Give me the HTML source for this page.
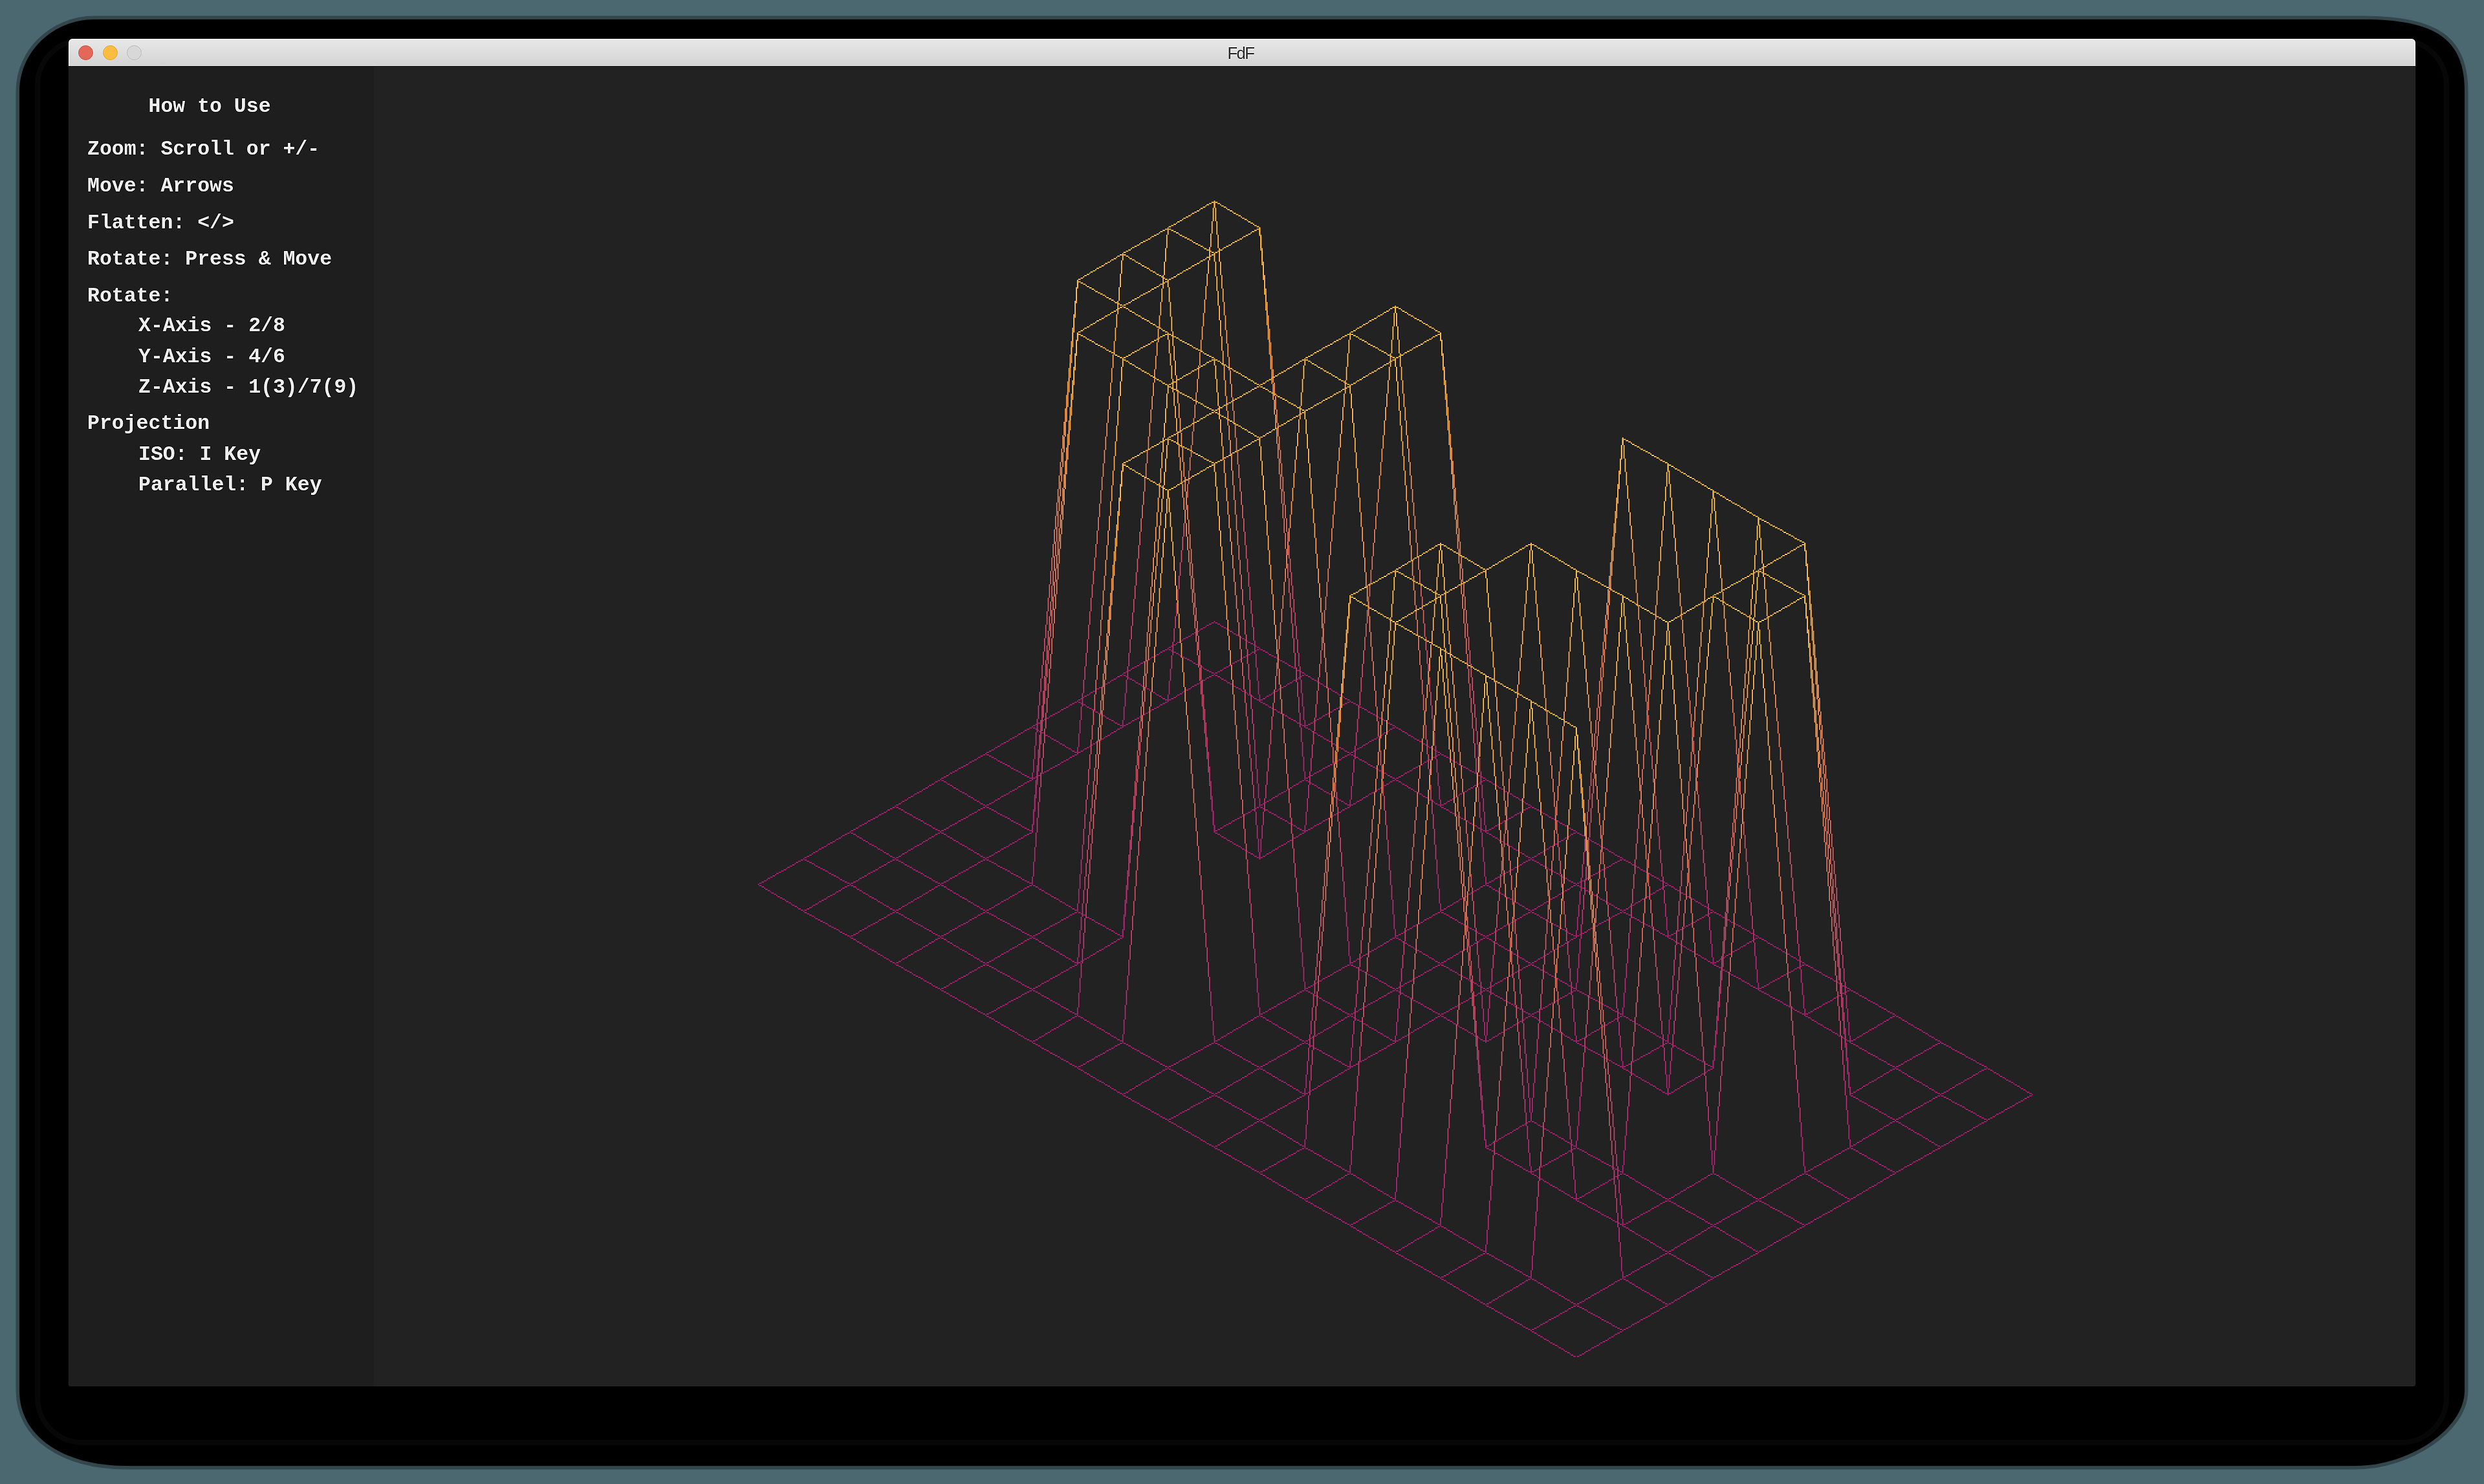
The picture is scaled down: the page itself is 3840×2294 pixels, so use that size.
<!DOCTYPE html>
<html><head><meta charset="utf-8"><title>FdF</title>
<style>
html,body{margin:0;padding:0}
body{width:3840px;height:2294px;position:relative;overflow:hidden;background:#4b6770}
#win{position:absolute;left:106px;top:60px;width:3628px;height:2083px;background:#222222;border-radius:6px 6px 4px 4px;overflow:hidden}
#tb{position:absolute;left:0;top:0;width:3628px;height:42px;background:linear-gradient(#e8e8e8,#d3d3d3);border-top:1px solid #f6f6f6;box-sizing:border-box}
#tbline{position:absolute;left:0;top:42px;width:3628px;height:1px;background:#2b2b2b}
#title{position:absolute;left:-2px;top:2px;letter-spacing:-1.5px;width:3628px;text-align:center;font-family:"Liberation Sans",sans-serif;font-size:25.6px;line-height:40px;color:#383838}
.tl{position:absolute;top:10px;width:23px;height:23px;border-radius:50%;box-sizing:border-box}
#red{left:15px;background:#e3685a;border:1px solid #d95c4e}
#yel{left:53px;background:#fabd42;border:1px solid #eaa93a}
#gry{left:90px;background:#d8d8d8;border:1.5px solid #bdbdbd}
#side{position:absolute;left:0;top:43px;width:472px;height:2040px;background:#1e1e1e}
.t{position:absolute;font-family:"Liberation Mono",monospace;font-weight:bold;font-size:31.5px;line-height:40px;color:#eaeaea;white-space:pre}
#wf{position:absolute;left:0;top:0}
</style></head><body>
<svg width="0" height="0" style="position:absolute"><filter id="shp" x="0" y="0" width="100%" height="100%" color-interpolation-filters="sRGB"><feConvolveMatrix order="3" kernelMatrix="0 -0.16 0 -0.16 1.64 -0.16 0 -0.16 0" edgeMode="duplicate" preserveAlpha="true"/></filter></svg>
<div id="page" style="position:absolute;left:0;top:0;width:3840px;height:2294px;filter:url(#shp)">
<svg id="shd" width="3840" height="2294" style="position:absolute;left:0;top:0"><path d="M30 141 C30 79.9 82.2 30 146 30 L3653 30 C3766.0 30 3810 61.1 3810 141 L3810 2150 C3810 2208.0 3725.5 2266 3641 2266 L196 2266 C96.4 2266 30 2219.6 30 2150 Z" fill="#000" stroke="rgba(0,0,0,0.32)" stroke-width="11" paint-order="stroke"/><rect x="58" y="62" width="3724" height="2168" rx="70" ry="70" fill="none" stroke="#070707" stroke-width="8"/></svg>
<div id="win">
 <div id="tb"></div><div id="tbline"></div>
 <div id="title">FdF</div>
 <div id="red" class="tl"></div><div id="yel" class="tl"></div><div id="gry" class="tl"></div>
 <div id="side"></div>
</div>
<svg id="wf" width="3840" height="2294" viewBox="0 0 3840 2294"><defs><linearGradient id="g0" gradientUnits="userSpaceOnUse" x1="0" y1="519.5" x2="0" y2="110.5"><stop offset="0" stop-color="#9a1f6a"/><stop offset="1" stop-color="#f3af3d"/></linearGradient><linearGradient id="g1" gradientUnits="userSpaceOnUse" x1="0" y1="540.5" x2="0" y2="132.5"><stop offset="0" stop-color="#9a1f6a"/><stop offset="1" stop-color="#f3af3d"/></linearGradient><linearGradient id="g2" gradientUnits="userSpaceOnUse" x1="0" y1="605.5" x2="0" y2="196.5"><stop offset="0" stop-color="#9a1f6a"/><stop offset="1" stop-color="#f3af3d"/></linearGradient><linearGradient id="g3" gradientUnits="userSpaceOnUse" x1="0" y1="626.5" x2="0" y2="218.5"><stop offset="0" stop-color="#9a1f6a"/><stop offset="1" stop-color="#f3af3d"/></linearGradient><linearGradient id="g4" gradientUnits="userSpaceOnUse" x1="0" y1="712.5" x2="0" y2="304.5"><stop offset="0" stop-color="#9a1f6a"/><stop offset="1" stop-color="#f3af3d"/></linearGradient><linearGradient id="g5" gradientUnits="userSpaceOnUse" x1="0" y1="734.5" x2="0" y2="325.5"><stop offset="0" stop-color="#9a1f6a"/><stop offset="1" stop-color="#f3af3d"/></linearGradient><linearGradient id="g6" gradientUnits="userSpaceOnUse" x1="0" y1="755.5" x2="0" y2="347.5"><stop offset="0" stop-color="#9a1f6a"/><stop offset="1" stop-color="#f3af3d"/></linearGradient><linearGradient id="g7" gradientUnits="userSpaceOnUse" x1="0" y1="776.5" x2="0" y2="369.5"><stop offset="0" stop-color="#9a1f6a"/><stop offset="1" stop-color="#f3af3d"/></linearGradient><linearGradient id="g8" gradientUnits="userSpaceOnUse" x1="0" y1="798.5" x2="0" y2="390.5"><stop offset="0" stop-color="#9a1f6a"/><stop offset="1" stop-color="#f3af3d"/></linearGradient><linearGradient id="g9" gradientUnits="userSpaceOnUse" x1="0" y1="519.5" x2="0" y2="110.5"><stop offset="0" stop-color="#9a1f6a"/><stop offset="1" stop-color="#f3af3d"/></linearGradient><linearGradient id="g10" gradientUnits="userSpaceOnUse" x1="0" y1="132.5" x2="0" y2="583.5"><stop offset="0" stop-color="#f3af3d"/><stop offset="1" stop-color="#9a1f6a"/></linearGradient><linearGradient id="g11" gradientUnits="userSpaceOnUse" x1="0" y1="605.5" x2="0" y2="196.5"><stop offset="0" stop-color="#9a1f6a"/><stop offset="1" stop-color="#f3af3d"/></linearGradient><linearGradient id="g12" gradientUnits="userSpaceOnUse" x1="0" y1="218.5" x2="0" y2="669.5"><stop offset="0" stop-color="#f3af3d"/><stop offset="1" stop-color="#9a1f6a"/></linearGradient><linearGradient id="g13" gradientUnits="userSpaceOnUse" x1="0" y1="712.5" x2="0" y2="304.5"><stop offset="0" stop-color="#9a1f6a"/><stop offset="1" stop-color="#f3af3d"/></linearGradient><linearGradient id="g14" gradientUnits="userSpaceOnUse" x1="0" y1="304.5" x2="0" y2="755.5"><stop offset="0" stop-color="#f3af3d"/><stop offset="1" stop-color="#9a1f6a"/></linearGradient><linearGradient id="g15" gradientUnits="userSpaceOnUse" x1="0" y1="325.5" x2="0" y2="776.5"><stop offset="0" stop-color="#f3af3d"/><stop offset="1" stop-color="#9a1f6a"/></linearGradient><linearGradient id="g16" gradientUnits="userSpaceOnUse" x1="0" y1="347.5" x2="0" y2="798.5"><stop offset="0" stop-color="#f3af3d"/><stop offset="1" stop-color="#9a1f6a"/></linearGradient><linearGradient id="g17" gradientUnits="userSpaceOnUse" x1="0" y1="369.5" x2="0" y2="819.5"><stop offset="0" stop-color="#f3af3d"/><stop offset="1" stop-color="#9a1f6a"/></linearGradient><linearGradient id="g18" gradientUnits="userSpaceOnUse" x1="0" y1="390.5" x2="0" y2="841.5"><stop offset="0" stop-color="#f3af3d"/><stop offset="1" stop-color="#9a1f6a"/></linearGradient><linearGradient id="g19" gradientUnits="userSpaceOnUse" x1="0" y1="841.5" x2="0" y2="433.5"><stop offset="0" stop-color="#9a1f6a"/><stop offset="1" stop-color="#f3af3d"/></linearGradient><linearGradient id="g20" gradientUnits="userSpaceOnUse" x1="0" y1="540.5" x2="0" y2="132.5"><stop offset="0" stop-color="#9a1f6a"/><stop offset="1" stop-color="#f3af3d"/></linearGradient><linearGradient id="g21" gradientUnits="userSpaceOnUse" x1="0" y1="153.5" x2="0" y2="605.5"><stop offset="0" stop-color="#f3af3d"/><stop offset="1" stop-color="#9a1f6a"/></linearGradient><linearGradient id="g22" gradientUnits="userSpaceOnUse" x1="0" y1="626.5" x2="0" y2="218.5"><stop offset="0" stop-color="#9a1f6a"/><stop offset="1" stop-color="#f3af3d"/></linearGradient><linearGradient id="g23" gradientUnits="userSpaceOnUse" x1="0" y1="239.5" x2="0" y2="691.5"><stop offset="0" stop-color="#f3af3d"/><stop offset="1" stop-color="#9a1f6a"/></linearGradient><linearGradient id="g24" gradientUnits="userSpaceOnUse" x1="0" y1="819.5" x2="0" y2="412.5"><stop offset="0" stop-color="#9a1f6a"/><stop offset="1" stop-color="#f3af3d"/></linearGradient><linearGradient id="g25" gradientUnits="userSpaceOnUse" x1="0" y1="433.5" x2="0" y2="884.5"><stop offset="0" stop-color="#f3af3d"/><stop offset="1" stop-color="#9a1f6a"/></linearGradient><linearGradient id="g26" gradientUnits="userSpaceOnUse" x1="0" y1="562.5" x2="0" y2="153.5"><stop offset="0" stop-color="#9a1f6a"/><stop offset="1" stop-color="#f3af3d"/></linearGradient><linearGradient id="g27" gradientUnits="userSpaceOnUse" x1="0" y1="175.5" x2="0" y2="626.5"><stop offset="0" stop-color="#f3af3d"/><stop offset="1" stop-color="#9a1f6a"/></linearGradient><linearGradient id="g28" gradientUnits="userSpaceOnUse" x1="0" y1="626.5" x2="0" y2="218.5"><stop offset="0" stop-color="#9a1f6a"/><stop offset="1" stop-color="#f3af3d"/></linearGradient><linearGradient id="g29" gradientUnits="userSpaceOnUse" x1="0" y1="648.5" x2="0" y2="239.5"><stop offset="0" stop-color="#9a1f6a"/><stop offset="1" stop-color="#f3af3d"/></linearGradient><linearGradient id="g30" gradientUnits="userSpaceOnUse" x1="0" y1="648.5" x2="0" y2="239.5"><stop offset="0" stop-color="#9a1f6a"/><stop offset="1" stop-color="#f3af3d"/></linearGradient><linearGradient id="g31" gradientUnits="userSpaceOnUse" x1="0" y1="261.5" x2="0" y2="712.5"><stop offset="0" stop-color="#f3af3d"/><stop offset="1" stop-color="#9a1f6a"/></linearGradient><linearGradient id="g32" gradientUnits="userSpaceOnUse" x1="0" y1="798.5" x2="0" y2="390.5"><stop offset="0" stop-color="#9a1f6a"/><stop offset="1" stop-color="#f3af3d"/></linearGradient><linearGradient id="g33" gradientUnits="userSpaceOnUse" x1="0" y1="819.5" x2="0" y2="412.5"><stop offset="0" stop-color="#9a1f6a"/><stop offset="1" stop-color="#f3af3d"/></linearGradient><linearGradient id="g34" gradientUnits="userSpaceOnUse" x1="0" y1="841.5" x2="0" y2="433.5"><stop offset="0" stop-color="#9a1f6a"/><stop offset="1" stop-color="#f3af3d"/></linearGradient><linearGradient id="g35" gradientUnits="userSpaceOnUse" x1="0" y1="841.5" x2="0" y2="433.5"><stop offset="0" stop-color="#9a1f6a"/><stop offset="1" stop-color="#f3af3d"/></linearGradient><linearGradient id="g36" gradientUnits="userSpaceOnUse" x1="0" y1="455.5" x2="0" y2="905.5"><stop offset="0" stop-color="#f3af3d"/><stop offset="1" stop-color="#9a1f6a"/></linearGradient><linearGradient id="g37" gradientUnits="userSpaceOnUse" x1="0" y1="455.5" x2="0" y2="905.5"><stop offset="0" stop-color="#f3af3d"/><stop offset="1" stop-color="#9a1f6a"/></linearGradient><linearGradient id="g38" gradientUnits="userSpaceOnUse" x1="0" y1="583.5" x2="0" y2="175.5"><stop offset="0" stop-color="#9a1f6a"/><stop offset="1" stop-color="#f3af3d"/></linearGradient><linearGradient id="g39" gradientUnits="userSpaceOnUse" x1="0" y1="175.5" x2="0" y2="626.5"><stop offset="0" stop-color="#f3af3d"/><stop offset="1" stop-color="#9a1f6a"/></linearGradient><linearGradient id="g40" gradientUnits="userSpaceOnUse" x1="0" y1="282.5" x2="0" y2="734.5"><stop offset="0" stop-color="#f3af3d"/><stop offset="1" stop-color="#9a1f6a"/></linearGradient><linearGradient id="g41" gradientUnits="userSpaceOnUse" x1="0" y1="798.5" x2="0" y2="390.5"><stop offset="0" stop-color="#9a1f6a"/><stop offset="1" stop-color="#f3af3d"/></linearGradient><linearGradient id="g42" gradientUnits="userSpaceOnUse" x1="0" y1="798.5" x2="0" y2="390.5"><stop offset="0" stop-color="#9a1f6a"/><stop offset="1" stop-color="#f3af3d"/></linearGradient><linearGradient id="g43" gradientUnits="userSpaceOnUse" x1="0" y1="412.5" x2="0" y2="862.5"><stop offset="0" stop-color="#f3af3d"/><stop offset="1" stop-color="#9a1f6a"/></linearGradient><linearGradient id="g44" gradientUnits="userSpaceOnUse" x1="0" y1="433.5" x2="0" y2="884.5"><stop offset="0" stop-color="#f3af3d"/><stop offset="1" stop-color="#9a1f6a"/></linearGradient><linearGradient id="g45" gradientUnits="userSpaceOnUse" x1="0" y1="455.5" x2="0" y2="905.5"><stop offset="0" stop-color="#f3af3d"/><stop offset="1" stop-color="#9a1f6a"/></linearGradient><linearGradient id="g46" gradientUnits="userSpaceOnUse" x1="0" y1="455.5" x2="0" y2="905.5"><stop offset="0" stop-color="#f3af3d"/><stop offset="1" stop-color="#9a1f6a"/></linearGradient><linearGradient id="g47" gradientUnits="userSpaceOnUse" x1="0" y1="626.5" x2="0" y2="218.5"><stop offset="0" stop-color="#9a1f6a"/><stop offset="1" stop-color="#f3af3d"/></linearGradient><linearGradient id="g48" gradientUnits="userSpaceOnUse" x1="0" y1="218.5" x2="0" y2="669.5"><stop offset="0" stop-color="#f3af3d"/><stop offset="1" stop-color="#9a1f6a"/></linearGradient><linearGradient id="g49" gradientUnits="userSpaceOnUse" x1="0" y1="239.5" x2="0" y2="691.5"><stop offset="0" stop-color="#f3af3d"/><stop offset="1" stop-color="#9a1f6a"/></linearGradient><linearGradient id="g50" gradientUnits="userSpaceOnUse" x1="0" y1="261.5" x2="0" y2="712.5"><stop offset="0" stop-color="#f3af3d"/><stop offset="1" stop-color="#9a1f6a"/></linearGradient><linearGradient id="g51" gradientUnits="userSpaceOnUse" x1="0" y1="304.5" x2="0" y2="755.5"><stop offset="0" stop-color="#f3af3d"/><stop offset="1" stop-color="#9a1f6a"/></linearGradient><linearGradient id="g52" gradientUnits="userSpaceOnUse" x1="0" y1="798.5" x2="0" y2="390.5"><stop offset="0" stop-color="#9a1f6a"/><stop offset="1" stop-color="#f3af3d"/></linearGradient><linearGradient id="g53" gradientUnits="userSpaceOnUse" x1="0" y1="412.5" x2="0" y2="862.5"><stop offset="0" stop-color="#f3af3d"/><stop offset="1" stop-color="#9a1f6a"/></linearGradient><linearGradient id="g54" gradientUnits="userSpaceOnUse" x1="0" y1="712.5" x2="0" y2="304.5"><stop offset="0" stop-color="#9a1f6a"/><stop offset="1" stop-color="#f3af3d"/></linearGradient><linearGradient id="g55" gradientUnits="userSpaceOnUse" x1="0" y1="325.5" x2="0" y2="776.5"><stop offset="0" stop-color="#f3af3d"/><stop offset="1" stop-color="#9a1f6a"/></linearGradient><linearGradient id="g56" gradientUnits="userSpaceOnUse" x1="0" y1="819.5" x2="0" y2="412.5"><stop offset="0" stop-color="#9a1f6a"/><stop offset="1" stop-color="#f3af3d"/></linearGradient><linearGradient id="g57" gradientUnits="userSpaceOnUse" x1="0" y1="433.5" x2="0" y2="884.5"><stop offset="0" stop-color="#f3af3d"/><stop offset="1" stop-color="#9a1f6a"/></linearGradient><linearGradient id="g58" gradientUnits="userSpaceOnUse" x1="0" y1="884.5" x2="0" y2="476.5"><stop offset="0" stop-color="#9a1f6a"/><stop offset="1" stop-color="#f3af3d"/></linearGradient><linearGradient id="g59" gradientUnits="userSpaceOnUse" x1="0" y1="905.5" x2="0" y2="498.5"><stop offset="0" stop-color="#9a1f6a"/><stop offset="1" stop-color="#f3af3d"/></linearGradient><linearGradient id="g60" gradientUnits="userSpaceOnUse" x1="0" y1="927.5" x2="0" y2="519.5"><stop offset="0" stop-color="#9a1f6a"/><stop offset="1" stop-color="#f3af3d"/></linearGradient><linearGradient id="g61" gradientUnits="userSpaceOnUse" x1="0" y1="948.5" x2="0" y2="541.5"><stop offset="0" stop-color="#9a1f6a"/><stop offset="1" stop-color="#f3af3d"/></linearGradient><linearGradient id="g62" gradientUnits="userSpaceOnUse" x1="0" y1="734.5" x2="0" y2="325.5"><stop offset="0" stop-color="#9a1f6a"/><stop offset="1" stop-color="#f3af3d"/></linearGradient><linearGradient id="g63" gradientUnits="userSpaceOnUse" x1="0" y1="325.5" x2="0" y2="776.5"><stop offset="0" stop-color="#f3af3d"/><stop offset="1" stop-color="#9a1f6a"/></linearGradient><linearGradient id="g64" gradientUnits="userSpaceOnUse" x1="0" y1="347.5" x2="0" y2="798.5"><stop offset="0" stop-color="#f3af3d"/><stop offset="1" stop-color="#9a1f6a"/></linearGradient><linearGradient id="g65" gradientUnits="userSpaceOnUse" x1="0" y1="347.5" x2="0" y2="798.5"><stop offset="0" stop-color="#f3af3d"/><stop offset="1" stop-color="#9a1f6a"/></linearGradient><linearGradient id="g66" gradientUnits="userSpaceOnUse" x1="0" y1="841.5" x2="0" y2="433.5"><stop offset="0" stop-color="#9a1f6a"/><stop offset="1" stop-color="#f3af3d"/></linearGradient><linearGradient id="g67" gradientUnits="userSpaceOnUse" x1="0" y1="433.5" x2="0" y2="884.5"><stop offset="0" stop-color="#f3af3d"/><stop offset="1" stop-color="#9a1f6a"/></linearGradient><linearGradient id="g68" gradientUnits="userSpaceOnUse" x1="0" y1="455.5" x2="0" y2="905.5"><stop offset="0" stop-color="#f3af3d"/><stop offset="1" stop-color="#9a1f6a"/></linearGradient><linearGradient id="g69" gradientUnits="userSpaceOnUse" x1="0" y1="476.5" x2="0" y2="927.5"><stop offset="0" stop-color="#f3af3d"/><stop offset="1" stop-color="#9a1f6a"/></linearGradient><linearGradient id="g70" gradientUnits="userSpaceOnUse" x1="0" y1="498.5" x2="0" y2="948.5"><stop offset="0" stop-color="#f3af3d"/><stop offset="1" stop-color="#9a1f6a"/></linearGradient><linearGradient id="g71" gradientUnits="userSpaceOnUse" x1="0" y1="519.5" x2="0" y2="970.5"><stop offset="0" stop-color="#f3af3d"/><stop offset="1" stop-color="#9a1f6a"/></linearGradient><linearGradient id="g72" gradientUnits="userSpaceOnUse" x1="0" y1="541.5" x2="0" y2="991.5"><stop offset="0" stop-color="#f3af3d"/><stop offset="1" stop-color="#9a1f6a"/></linearGradient><linearGradient id="g73" gradientUnits="userSpaceOnUse" x1="0" y1="541.5" x2="0" y2="991.5"><stop offset="0" stop-color="#f3af3d"/><stop offset="1" stop-color="#9a1f6a"/></linearGradient></defs><g transform="translate(105.83 102.05) scale(1.88976)"><path fill="#9a1f6a" d="M937 454h1v1h-1zm1 1h2v1h-2zm2 1h2v1h-2zm2 1h1v1h-1zm1 1h2v1h-2zm2 1h2v1h-2zm2 1h1v1h-1zm1 1h2v1h-2zm2 1h2v1h-2zm2 1h1v1h-1zm1 1h2v1h-2zm2 1h2v1h-2zm2 1h2v1h-2zm2 1h1v1h-1zm1 1h2v1h-2zm2 1h2v1h-2zm2 1h1v1h-1zm1 1h2v1h-2zm2 1h2v1h-2zm2 1h1v1h-1zm1 1h2v1h-2zm2 1h2v1h-2zM937 454h1v1h-1zm-2 1h2v1h-2zm-2 1h2v1h-2zm-2 1h2v1h-2zm-1 1h1v1h-1zm-2 1h2v1h-2zm-2 1h2v1h-2zm-1 1h1v1h-1zm-2 1h2v1h-2zm-2 1h2v1h-2zm-2 1h2v1h-2zm-1 1h1v1h-1zm-2 1h2v1h-2zm-2 1h2v1h-2zm-2 1h2v1h-2zm-1 1h1v1h-1zm-2 1h2v1h-2zm-2 1h2v1h-2zm-1 1h1v1h-1zm-2 1h2v1h-2zm-2 1h2v1h-2zm-2 1h2v1h-2zM974 476h1v1h-1zm1 1h2v1h-2zm2 1h2v1h-2zm2 1h2v1h-2zm2 1h1v1h-1zm1 1h2v1h-2zm2 1h2v1h-2zm2 1h2v1h-2zm2 1h1v1h-1zm1 1h2v1h-2zm2 1h2v1h-2zm2 1h2v1h-2zm2 1h2v1h-2zm2 1h1v1h-1zm1 1h2v1h-2zm2 1h2v1h-2zm2 1h2v1h-2zm2 1h1v1h-1zm1 1h2v1h-2zm2 1h2v1h-2zm2 1h2v1h-2zM974 476h1v1h-1zm-2 1h2v1h-2zm-2 1h2v1h-2zm-2 1h2v1h-2zm-1 1h1v1h-1zm-2 1h2v1h-2zm-2 1h2v1h-2zm-2 1h2v1h-2zm-1 1h1v1h-1zm-2 1h2v1h-2zm-2 1h2v1h-2zm-2 1h2v1h-2zm-2 1h2v1h-2zm-1 1h1v1h-1zm-2 1h2v1h-2zm-2 1h2v1h-2zm-2 1h2v1h-2zm-1 1h1v1h-1zm-2 1h2v1h-2zm-2 1h2v1h-2zm-2 1h2v1h-2zM1011 497h1v1h-1zm1 1h2v1h-2zm2 1h2v1h-2zm2 1h1v1h-1zm1 1h2v1h-2zm2 1h2v1h-2zm2 1h1v1h-1zm1 1h2v1h-2zm2 1h2v1h-2zm2 1h1v1h-1zm1 1h2v1h-2zm2 1h2v1h-2zm2 1h2v1h-2zm2 1h1v1h-1zm1 1h2v1h-2zm2 1h2v1h-2zm2 1h1v1h-1zm1 1h2v1h-2zm2 1h2v1h-2zm2 1h1v1h-1zm1 1h2v1h-2zm2 1h2v1h-2zM1011 497h1v1h-1zm-2 1h2v1h-2zm-2 1h2v1h-2zm-1 1h1v1h-1zm-2 1h2v1h-2zm-2 1h2v1h-2zm-1 1h1v1h-1zm-2 1h2v1h-2zm-2 1h2v1h-2zm-1 1h1v1h-1zm-2 1h2v1h-2zm-2 1h2v1h-2zm-2 1h2v1h-2zm-1 1h1v1h-1zm-2 1h2v1h-2zm-2 1h2v1h-2zm-1 1h1v1h-1zm-2 1h2v1h-2zm-2 1h2v1h-2zm-1 1h1v1h-1zm-2 1h2v1h-2zm-2 1h2v1h-2zM1048 519h1v1h-1zm1 1h2v1h-2zm2 1h2v1h-2zm2 1h2v1h-2zm2 1h1v1h-1zm1 1h2v1h-2zm2 1h2v1h-2zm2 1h2v1h-2zm2 1h1v1h-1zm1 1h2v1h-2zm2 1h2v1h-2zm2 1h2v1h-2zm2 1h2v1h-2zm2 1h1v1h-1zm1 1h2v1h-2zm2 1h2v1h-2zm2 1h2v1h-2zm2 1h1v1h-1zm1 1h2v1h-2zm2 1h2v1h-2zm2 1h2v1h-2zM1048 519h1v1h-1zm-2 1h2v1h-2zm-2 1h2v1h-2zm-2 1h2v1h-2zm-1 1h1v1h-1zm-2 1h2v1h-2zm-2 1h2v1h-2zm-2 1h2v1h-2zm-1 1h1v1h-1zm-2 1h2v1h-2zm-2 1h2v1h-2zm-2 1h2v1h-2zm-2 1h2v1h-2zm-1 1h1v1h-1zm-2 1h2v1h-2zm-2 1h2v1h-2zm-2 1h2v1h-2zm-1 1h1v1h-1zm-2 1h2v1h-2zm-2 1h2v1h-2zm-2 1h2v1h-2zM1085 540h1v1h-1zm1 1h2v1h-2zm2 1h2v1h-2zm2 1h1v1h-1zm1 1h2v1h-2zm2 1h2v1h-2zm2 1h1v1h-1zm1 1h2v1h-2zm2 1h2v1h-2zm2 1h1v1h-1zm1 1h2v1h-2zm2 1h2v1h-2zm2 1h2v1h-2zm2 1h1v1h-1zm1 1h2v1h-2zm2 1h2v1h-2zm2 1h1v1h-1zm1 1h2v1h-2zm2 1h2v1h-2zm2 1h1v1h-1zm1 1h2v1h-2zm2 1h2v1h-2zM1085 540h1v1h-1zm-2 1h2v1h-2zm-2 1h2v1h-2zm-1 1h1v1h-1zm-2 1h2v1h-2zm-2 1h2v1h-2zm-1 1h1v1h-1zm-2 1h2v1h-2zm-2 1h2v1h-2zm-1 1h1v1h-1zm-2 1h2v1h-2zm-2 1h2v1h-2zm-2 1h2v1h-2zm-1 1h1v1h-1zm-2 1h2v1h-2zm-2 1h2v1h-2zm-1 1h1v1h-1zm-2 1h2v1h-2zm-2 1h2v1h-2zm-1 1h1v1h-1zm-2 1h2v1h-2zm-2 1h2v1h-2zM1122 562h1v1h-1zm1 1h2v1h-2zm2 1h2v1h-2zm2 1h2v1h-2zm2 1h1v1h-1zm1 1h2v1h-2zm2 1h2v1h-2zm2 1h2v1h-2zm2 1h1v1h-1zm1 1h2v1h-2zm2 1h2v1h-2zm2 1h2v1h-2zm2 1h2v1h-2zm2 1h1v1h-1zm1 1h2v1h-2zm2 1h2v1h-2zm2 1h2v1h-2zm2 1h1v1h-1zm1 1h2v1h-2zm2 1h2v1h-2zm2 1h2v1h-2zM1122 562h1v1h-1zm-2 1h2v1h-2zm-2 1h2v1h-2zm-2 1h2v1h-2zm-1 1h1v1h-1zm-2 1h2v1h-2zm-2 1h2v1h-2zm-2 1h2v1h-2zm-1 1h1v1h-1zm-2 1h2v1h-2zm-2 1h2v1h-2zm-2 1h2v1h-2zm-2 1h2v1h-2zm-1 1h1v1h-1zm-2 1h2v1h-2zm-2 1h2v1h-2zm-2 1h2v1h-2zm-1 1h1v1h-1zm-2 1h2v1h-2zm-2 1h2v1h-2zm-2 1h2v1h-2zM1159 583h1v1h-1zm1 1h2v1h-2zm2 1h2v1h-2zm2 1h1v1h-1zm1 1h2v1h-2zm2 1h2v1h-2zm2 1h1v1h-1zm1 1h2v1h-2zm2 1h2v1h-2zm2 1h1v1h-1zm1 1h2v1h-2zm2 1h2v1h-2zm2 1h2v1h-2zm2 1h1v1h-1zm1 1h2v1h-2zm2 1h2v1h-2zm2 1h1v1h-1zm1 1h2v1h-2zm2 1h2v1h-2zm2 1h1v1h-1zm1 1h2v1h-2zm2 1h2v1h-2zM1159 583h1v1h-1zm-2 1h2v1h-2zm-2 1h2v1h-2zm-1 1h1v1h-1zm-2 1h2v1h-2zm-2 1h2v1h-2zm-1 1h1v1h-1zm-2 1h2v1h-2zm-2 1h2v1h-2zm-1 1h1v1h-1zm-2 1h2v1h-2zm-2 1h2v1h-2zm-2 1h2v1h-2zm-1 1h1v1h-1zm-2 1h2v1h-2zm-2 1h2v1h-2zm-1 1h1v1h-1zm-2 1h2v1h-2zm-2 1h2v1h-2zm-1 1h1v1h-1zm-2 1h2v1h-2zm-2 1h2v1h-2zM1196 605h1v1h-1zm1 1h2v1h-2zm2 1h2v1h-2zm2 1h2v1h-2zm2 1h1v1h-1zm1 1h2v1h-2zm2 1h2v1h-2zm2 1h2v1h-2zm2 1h1v1h-1zm1 1h2v1h-2zm2 1h2v1h-2zm2 1h2v1h-2zm2 1h2v1h-2zm2 1h1v1h-1zm1 1h2v1h-2zm2 1h2v1h-2zm2 1h2v1h-2zm2 1h1v1h-1zm1 1h2v1h-2zm2 1h2v1h-2zm2 1h2v1h-2zM1196 605h1v1h-1zm-2 1h2v1h-2zm-2 1h2v1h-2zm-2 1h2v1h-2zm-1 1h1v1h-1zm-2 1h2v1h-2zm-2 1h2v1h-2zm-2 1h2v1h-2zm-1 1h1v1h-1zm-2 1h2v1h-2zm-2 1h2v1h-2zm-2 1h2v1h-2zm-2 1h2v1h-2zm-1 1h1v1h-1zm-2 1h2v1h-2zm-2 1h2v1h-2zm-2 1h2v1h-2zm-1 1h1v1h-1zm-2 1h2v1h-2zm-2 1h2v1h-2zm-2 1h2v1h-2zM1233 626h1v1h-1zm1 1h2v1h-2zm2 1h2v1h-2zm2 1h2v1h-2zm2 1h1v1h-1zm1 1h2v1h-2zm2 1h2v1h-2zm2 1h1v1h-1zm1 1h2v1h-2zm2 1h2v1h-2zm2 1h2v1h-2zm2 1h1v1h-1zm1 1h2v1h-2zm2 1h2v1h-2zm2 1h2v1h-2zm2 1h1v1h-1zm1 1h2v1h-2zm2 1h2v1h-2zm2 1h1v1h-1zm1 1h2v1h-2zm2 1h2v1h-2zm2 1h2v1h-2zM1233 626h1v1h-1zm-2 1h2v1h-2zm-2 1h2v1h-2zm-1 1h1v1h-1zm-2 1h2v1h-2zm-2 1h2v1h-2zm-1 1h1v1h-1zm-2 1h2v1h-2zm-2 1h2v1h-2zm-1 1h1v1h-1zm-2 1h2v1h-2zm-2 1h2v1h-2zm-2 1h2v1h-2zm-1 1h1v1h-1zm-2 1h2v1h-2zm-2 1h2v1h-2zm-1 1h1v1h-1zm-2 1h2v1h-2zm-2 1h2v1h-2zm-1 1h1v1h-1zm-2 1h2v1h-2zm-2 1h2v1h-2zM1271 648h1v1h-1zm1 1h2v1h-2zm2 1h2v1h-2zm2 1h2v1h-2zm2 1h1v1h-1zm1 1h2v1h-2zm2 1h2v1h-2zm2 1h2v1h-2zm2 1h1v1h-1zm1 1h2v1h-2zm2 1h2v1h-2zm2 1h2v1h-2zm2 1h2v1h-2zm2 1h1v1h-1zm1 1h2v1h-2zm2 1h2v1h-2zm2 1h2v1h-2zm2 1h1v1h-1zm1 1h2v1h-2zm2 1h2v1h-2zm2 1h2v1h-2zM1271 648h1v1h-1zm-2 1h2v1h-2zm-2 1h2v1h-2zm-2 1h2v1h-2zm-2 1h2v1h-2zm-1 1h1v1h-1zm-2 1h2v1h-2zm-2 1h2v1h-2zm-2 1h2v1h-2zm-2 1h2v1h-2zm-2 1h2v1h-2zm-1 1h1v1h-1zm-2 1h2v1h-2zm-2 1h2v1h-2zm-2 1h2v1h-2zm-2 1h2v1h-2zm-1 1h1v1h-1zm-2 1h2v1h-2zm-2 1h2v1h-2zm-2 1h2v1h-2zm-2 1h2v1h-2zM1308 669h1v1h-1zm1 1h2v1h-2zm2 1h2v1h-2zm2 1h1v1h-1zm1 1h2v1h-2zm2 1h2v1h-2zm2 1h1v1h-1zm1 1h2v1h-2zm2 1h2v1h-2zm2 1h1v1h-1zm1 1h2v1h-2zm2 1h2v1h-2zm2 1h2v1h-2zm2 1h1v1h-1zm1 1h2v1h-2zm2 1h2v1h-2zm2 1h1v1h-1zm1 1h2v1h-2zm2 1h2v1h-2zm2 1h1v1h-1zm1 1h2v1h-2zm2 1h2v1h-2zM1308 669h1v1h-1zm-2 1h2v1h-2zm-2 1h2v1h-2zm-1 1h1v1h-1zm-2 1h2v1h-2zm-2 1h2v1h-2zm-1 1h1v1h-1zm-2 1h2v1h-2zm-2 1h2v1h-2zm-1 1h1v1h-1zm-2 1h2v1h-2zm-2 1h2v1h-2zm-2 1h2v1h-2zm-1 1h1v1h-1zm-2 1h2v1h-2zm-2 1h2v1h-2zm-1 1h1v1h-1zm-2 1h2v1h-2zm-2 1h2v1h-2zm-1 1h1v1h-1zm-2 1h2v1h-2zm-2 1h2v1h-2zM1345 691h1v1h-1zm1 1h2v1h-2zm2 1h2v1h-2zm2 1h2v1h-2zm2 1h1v1h-1zm1 1h2v1h-2zm2 1h2v1h-2zm2 1h2v1h-2zm2 1h1v1h-1zm1 1h2v1h-2zm2 1h2v1h-2zm2 1h2v1h-2zm2 1h2v1h-2zm2 1h1v1h-1zm1 1h2v1h-2zm2 1h2v1h-2zm2 1h2v1h-2zm2 1h1v1h-1zm1 1h2v1h-2zm2 1h2v1h-2zm2 1h2v1h-2zM1345 691h1v1h-1zm-2 1h2v1h-2zm-2 1h2v1h-2zm-2 1h2v1h-2zm-1 1h1v1h-1zm-2 1h2v1h-2zm-2 1h2v1h-2zm-2 1h2v1h-2zm-1 1h1v1h-1zm-2 1h2v1h-2zm-2 1h2v1h-2zm-2 1h2v1h-2zm-2 1h2v1h-2zm-1 1h1v1h-1zm-2 1h2v1h-2zm-2 1h2v1h-2zm-2 1h2v1h-2zm-1 1h1v1h-1zm-2 1h2v1h-2zm-2 1h2v1h-2zm-2 1h2v1h-2zM1382 712h1v1h-1zm1 1h2v1h-2zm2 1h2v1h-2zm2 1h2v1h-2zm2 1h1v1h-1zm1 1h2v1h-2zm2 1h2v1h-2zm2 1h1v1h-1zm1 1h2v1h-2zm2 1h2v1h-2zm2 1h2v1h-2zm2 1h1v1h-1zm1 1h2v1h-2zm2 1h2v1h-2zm2 1h2v1h-2zm2 1h1v1h-1zm1 1h2v1h-2zm2 1h2v1h-2zm2 1h1v1h-1zm1 1h2v1h-2zm2 1h2v1h-2zm2 1h2v1h-2zM1382 712h1v1h-1zm-2 1h2v1h-2zm-2 1h2v1h-2zm-1 1h1v1h-1zm-2 1h2v1h-2zm-2 1h2v1h-2zm-1 1h1v1h-1zm-2 1h2v1h-2zm-2 1h2v1h-2zm-1 1h1v1h-1zm-2 1h2v1h-2zm-2 1h2v1h-2zm-2 1h2v1h-2zm-1 1h1v1h-1zm-2 1h2v1h-2zm-2 1h2v1h-2zm-1 1h1v1h-1zm-2 1h2v1h-2zm-2 1h2v1h-2zm-1 1h1v1h-1zm-2 1h2v1h-2zm-2 1h2v1h-2zM1420 734h1v1h-1zm1 1h2v1h-2zm2 1h2v1h-2zm2 1h2v1h-2zm2 1h1v1h-1zm1 1h2v1h-2zm2 1h2v1h-2zm2 1h2v1h-2zm2 1h1v1h-1zm1 1h2v1h-2zm2 1h2v1h-2zm2 1h2v1h-2zm2 1h2v1h-2zm2 1h1v1h-1zm1 1h2v1h-2zm2 1h2v1h-2zm2 1h2v1h-2zm2 1h1v1h-1zm1 1h2v1h-2zm2 1h2v1h-2zm2 1h2v1h-2zM1420 734h1v1h-1zm-2 1h2v1h-2zm-2 1h2v1h-2zm-2 1h2v1h-2zm-2 1h2v1h-2zm-1 1h1v1h-1zm-2 1h2v1h-2zm-2 1h2v1h-2zm-2 1h2v1h-2zm-2 1h2v1h-2zm-2 1h2v1h-2zm-1 1h1v1h-1zm-2 1h2v1h-2zm-2 1h2v1h-2zm-2 1h2v1h-2zm-2 1h2v1h-2zm-1 1h1v1h-1zm-2 1h2v1h-2zm-2 1h2v1h-2zm-2 1h2v1h-2zm-2 1h2v1h-2zM1457 755h1v1h-1zm1 1h2v1h-2zm2 1h2v1h-2zm2 1h2v1h-2zm2 1h1v1h-1zm1 1h2v1h-2zm2 1h2v1h-2zm2 1h2v1h-2zm2 1h1v1h-1zm1 1h2v1h-2zm2 1h2v1h-2zm2 1h2v1h-2zm2 1h2v1h-2zm2 1h1v1h-1zm1 1h2v1h-2zm2 1h2v1h-2zm2 1h2v1h-2zm2 1h1v1h-1zm1 1h2v1h-2zm2 1h2v1h-2zm2 1h2v1h-2zM1457 755h1v1h-1zm-2 1h2v1h-2zm-2 1h2v1h-2zm-2 1h2v1h-2zm-1 1h1v1h-1zm-2 1h2v1h-2zm-2 1h2v1h-2zm-2 1h2v1h-2zm-1 1h1v1h-1zm-2 1h2v1h-2zm-2 1h2v1h-2zm-2 1h2v1h-2zm-2 1h2v1h-2zm-1 1h1v1h-1zm-2 1h2v1h-2zm-2 1h2v1h-2zm-2 1h2v1h-2zm-1 1h1v1h-1zm-2 1h2v1h-2zm-2 1h2v1h-2zm-2 1h2v1h-2zM1494 776h1v1h-1zm1 1h2v1h-2zm2 1h2v1h-2zm2 1h1v1h-1zm1 1h2v1h-2zm2 1h2v1h-2zm2 1h1v1h-1zm1 1h2v1h-2zm2 1h2v1h-2zm2 1h1v1h-1zm1 1h2v1h-2zm2 1h2v1h-2zm2 1h2v1h-2zm2 1h1v1h-1zm1 1h2v1h-2zm2 1h2v1h-2zm2 1h1v1h-1zm1 1h2v1h-2zm2 1h2v1h-2zm2 1h1v1h-1zm1 1h2v1h-2zm2 1h2v1h-2zM1494 776h1v1h-1zm-2 1h2v1h-2zm-2 1h2v1h-2zm-1 1h1v1h-1zm-2 1h2v1h-2zm-2 1h2v1h-2zm-1 1h1v1h-1zm-2 1h2v1h-2zm-2 1h2v1h-2zm-1 1h1v1h-1zm-2 1h2v1h-2zm-2 1h2v1h-2zm-2 1h2v1h-2zm-1 1h1v1h-1zm-2 1h2v1h-2zm-2 1h2v1h-2zm-1 1h1v1h-1zm-2 1h2v1h-2zm-2 1h2v1h-2zm-1 1h1v1h-1zm-2 1h2v1h-2zm-2 1h2v1h-2zM1531 798h1v1h-1zm1 1h2v1h-2zm2 1h2v1h-2zm2 1h2v1h-2zm2 1h2v1h-2zm2 1h1v1h-1zm1 1h2v1h-2zm2 1h2v1h-2zm2 1h2v1h-2zm2 1h2v1h-2zm2 1h2v1h-2zm2 1h1v1h-1zm1 1h2v1h-2zm2 1h2v1h-2zm2 1h2v1h-2zm2 1h2v1h-2zm2 1h1v1h-1zm1 1h2v1h-2zm2 1h2v1h-2zm2 1h2v1h-2zm2 1h2v1h-2zM1531 798h1v1h-1zm-2 1h2v1h-2zm-2 1h2v1h-2zm-2 1h2v1h-2zm-1 1h1v1h-1zm-2 1h2v1h-2zm-2 1h2v1h-2zm-2 1h2v1h-2zm-1 1h1v1h-1zm-2 1h2v1h-2zm-2 1h2v1h-2zm-2 1h2v1h-2zm-2 1h2v1h-2zm-1 1h1v1h-1zm-2 1h2v1h-2zm-2 1h2v1h-2zm-2 1h2v1h-2zm-1 1h1v1h-1zm-2 1h2v1h-2zm-2 1h2v1h-2zm-2 1h2v1h-2zM1569 819h1v1h-1zm1 1h2v1h-2zm2 1h2v1h-2zm2 1h1v1h-1zm1 1h2v1h-2zm2 1h2v1h-2zm2 1h1v1h-1zm1 1h2v1h-2zm2 1h2v1h-2zm2 1h1v1h-1zm1 1h2v1h-2zm2 1h2v1h-2zm2 1h2v1h-2zm2 1h1v1h-1zm1 1h2v1h-2zm2 1h2v1h-2zm2 1h1v1h-1zm1 1h2v1h-2zm2 1h2v1h-2zm2 1h1v1h-1zm1 1h2v1h-2zm2 1h2v1h-2zM1569 819h1v1h-1zm-2 1h2v1h-2zm-2 1h2v1h-2zm-2 1h2v1h-2zm-1 1h1v1h-1zm-2 1h2v1h-2zm-2 1h2v1h-2zm-1 1h1v1h-1zm-2 1h2v1h-2zm-2 1h2v1h-2zm-2 1h2v1h-2zm-1 1h1v1h-1zm-2 1h2v1h-2zm-2 1h2v1h-2zm-2 1h2v1h-2zm-1 1h1v1h-1zm-2 1h2v1h-2zm-2 1h2v1h-2zm-1 1h1v1h-1zm-2 1h2v1h-2zm-2 1h2v1h-2zm-2 1h2v1h-2zM1606 841h1v1h-1zm-2 1h2v1h-2zm-2 1h2v1h-2zm-2 1h2v1h-2zm-1 1h1v1h-1zm-2 1h2v1h-2zm-2 1h2v1h-2zm-2 1h2v1h-2zm-1 1h1v1h-1zm-2 1h2v1h-2zm-2 1h2v1h-2zm-2 1h2v1h-2zm-2 1h2v1h-2zm-1 1h1v1h-1zm-2 1h2v1h-2zm-2 1h2v1h-2zm-2 1h2v1h-2zm-1 1h1v1h-1zm-2 1h2v1h-2zm-2 1h2v1h-2zm-2 1h2v1h-2zM899 476h1v1h-1zm1 1h2v1h-2zm2 1h2v1h-2zm2 1h2v1h-2zm2 1h2v1h-2zm2 1h1v1h-1zm1 1h2v1h-2zm2 1h2v1h-2zm2 1h2v1h-2zm2 1h2v1h-2zm2 1h2v1h-2zm2 1h1v1h-1zm1 1h2v1h-2zm2 1h2v1h-2zm2 1h2v1h-2zm2 1h2v1h-2zm2 1h1v1h-1zm1 1h2v1h-2zm2 1h2v1h-2zm2 1h2v1h-2zm2 1h2v1h-2zM899 476h1v1h-1zm-2 1h2v1h-2zm-2 1h2v1h-2zm-2 1h2v1h-2zm-1 1h1v1h-1zm-2 1h2v1h-2zm-2 1h2v1h-2zm-2 1h2v1h-2zm-1 1h1v1h-1zm-2 1h2v1h-2zm-2 1h2v1h-2zm-2 1h2v1h-2zm-2 1h2v1h-2zm-1 1h1v1h-1zm-2 1h2v1h-2zm-2 1h2v1h-2zm-2 1h2v1h-2zm-1 1h1v1h-1zm-2 1h2v1h-2zm-2 1h2v1h-2zm-2 1h2v1h-2zM937 497h1v1h-1zm1 1h2v1h-2zm2 1h2v1h-2zm2 1h1v1h-1zm1 1h2v1h-2zm2 1h2v1h-2zm2 1h1v1h-1zm1 1h2v1h-2zm2 1h2v1h-2zm2 1h1v1h-1zm1 1h2v1h-2zm2 1h2v1h-2zm2 1h2v1h-2zm2 1h1v1h-1zm1 1h2v1h-2zm2 1h2v1h-2zm2 1h1v1h-1zm1 1h2v1h-2zm2 1h2v1h-2zm2 1h1v1h-1zm1 1h2v1h-2zm2 1h2v1h-2zM937 497h1v1h-1zm-2 1h2v1h-2zm-2 1h2v1h-2zm-2 1h2v1h-2zm-1 1h1v1h-1zm-2 1h2v1h-2zm-2 1h2v1h-2zm-1 1h1v1h-1zm-2 1h2v1h-2zm-2 1h2v1h-2zm-2 1h2v1h-2zm-1 1h1v1h-1zm-2 1h2v1h-2zm-2 1h2v1h-2zm-2 1h2v1h-2zm-1 1h1v1h-1zm-2 1h2v1h-2zm-2 1h2v1h-2zm-1 1h1v1h-1zm-2 1h2v1h-2zm-2 1h2v1h-2zm-2 1h2v1h-2zM974 519h1v1h-1zm1 1h2v1h-2zm2 1h2v1h-2zm2 1h2v1h-2zm2 1h1v1h-1zm1 1h2v1h-2zm2 1h2v1h-2zm2 1h2v1h-2zm2 1h1v1h-1zm1 1h2v1h-2zm2 1h2v1h-2zm2 1h2v1h-2zm2 1h2v1h-2zm2 1h1v1h-1zm1 1h2v1h-2zm2 1h2v1h-2zm2 1h2v1h-2zm2 1h1v1h-1zm1 1h2v1h-2zm2 1h2v1h-2zm2 1h2v1h-2z"/>
<path fill="url(#g0)" d="M937 111v5h1v-5zm1 5v11h1v-11zm1 11v11h1v-11zm1 11v11h1v-11zm1 11v11h1v-11zm1 11v11h1v-11zm1 11v11h1v-11zm1 11v11h1v-11zm1 11v11h1v-11zm1 11v12h1v-12zm1 12v11h1v-11zm1 11v11h1v-11zm1 11v11h1v-11zm1 11v11h1v-11zm1 11v11h1v-11zm1 11v11h1v-11zm1 11v11h1v-11zm1 11v11h1v-11zm1 11v11h1v-11zm1 11v11h1v-11zm1 11v11h1v-11zm1 11v11h1v-11zm1 11v11h1v-11zm1 11v11h1v-11zm1 11v11h1v-11zm1 11v11h1v-11zm1 11v11h1v-11zm1 11v11h1v-11zm1 11v12h1v-12zm1 12v11h1v-11zm1 11v11h1v-11zm1 11v11h1v-11zm1 11v11h1v-11zm1 11v11h1v-11zm1 11v11h1v-11zm1 11v11h1v-11zm1 11v11h1v-11zm1 11v6h1v-6z"/>
<path fill="#9a1f6a" d="M1011 540h1v1h-1zm1 1h2v1h-2zm2 1h2v1h-2zm2 1h1v1h-1zm1 1h2v1h-2zm2 1h2v1h-2zm2 1h1v1h-1zm1 1h2v1h-2zm2 1h2v1h-2zm2 1h1v1h-1zm1 1h2v1h-2zm2 1h2v1h-2zm2 1h2v1h-2zm2 1h1v1h-1zm1 1h2v1h-2zm2 1h2v1h-2zm2 1h1v1h-1zm1 1h2v1h-2zm2 1h2v1h-2zm2 1h1v1h-1zm1 1h2v1h-2zm2 1h2v1h-2z"/>
<path fill="url(#g1)" d="M974 133v5h1v-5zm1 5v11h1v-11zm1 11v11h1v-11zm1 11v11h1v-11zm1 11v11h1v-11zm1 11v11h1v-11zm1 11v11h1v-11zm1 11v11h1v-11zm1 11v11h1v-11zm1 11v11h1v-11zm1 11v11h1v-11zm1 11v11h1v-11zm1 11v11h1v-11zm1 11v11h1v-11zm1 11v11h1v-11zm1 11v11h1v-11zm1 11v11h1v-11zm1 11v11h1v-11zm1 11v11h1v-11zm1 11v12h1v-12zm1 12v11h1v-11zm1 11v11h1v-11zm1 11v11h1v-11zm1 11v11h1v-11zm1 11v11h1v-11zm1 11v11h1v-11zm1 11v11h1v-11zm1 11v11h1v-11zm1 11v11h1v-11zm1 11v11h1v-11zm1 11v11h1v-11zm1 11v11h1v-11zm1 11v11h1v-11zm1 11v11h1v-11zm1 11v11h1v-11zm1 11v11h1v-11zm1 11v11h1v-11zm1 11v6h1v-6z"/>
<path fill="#9a1f6a" d="M1048 562h1v1h-1zm1 1h2v1h-2zm2 1h2v1h-2zm2 1h2v1h-2zm2 1h1v1h-1zm1 1h2v1h-2zm2 1h2v1h-2zm2 1h2v1h-2zm2 1h1v1h-1zm1 1h2v1h-2zm2 1h2v1h-2zm2 1h2v1h-2zm2 1h2v1h-2zm2 1h1v1h-1zm1 1h2v1h-2zm2 1h2v1h-2zm2 1h2v1h-2zm2 1h1v1h-1zm1 1h2v1h-2zm2 1h2v1h-2zm2 1h2v1h-2zM1048 562h1v1h-1zm-2 1h2v1h-2zm-2 1h2v1h-2zm-2 1h2v1h-2zm-1 1h1v1h-1zm-2 1h2v1h-2zm-2 1h2v1h-2zm-2 1h2v1h-2zm-1 1h1v1h-1zm-2 1h2v1h-2zm-2 1h2v1h-2zm-2 1h2v1h-2zm-2 1h2v1h-2zm-1 1h1v1h-1zm-2 1h2v1h-2zm-2 1h2v1h-2zm-2 1h2v1h-2zm-1 1h1v1h-1zm-2 1h2v1h-2zm-2 1h2v1h-2zm-2 1h2v1h-2zM1085 583h1v1h-1zm1 1h2v1h-2zm2 1h2v1h-2zm2 1h1v1h-1zm1 1h2v1h-2zm2 1h2v1h-2zm2 1h1v1h-1zm1 1h2v1h-2zm2 1h2v1h-2zm2 1h1v1h-1zm1 1h2v1h-2zm2 1h2v1h-2zm2 1h2v1h-2zm2 1h1v1h-1zm1 1h2v1h-2zm2 1h2v1h-2zm2 1h1v1h-1zm1 1h2v1h-2zm2 1h2v1h-2zm2 1h1v1h-1zm1 1h2v1h-2zm2 1h2v1h-2zM1085 583h1v1h-1zm-2 1h2v1h-2zm-2 1h2v1h-2zm-1 1h1v1h-1zm-2 1h2v1h-2zm-2 1h2v1h-2zm-1 1h1v1h-1zm-2 1h2v1h-2zm-2 1h2v1h-2zm-1 1h1v1h-1zm-2 1h2v1h-2zm-2 1h2v1h-2zm-2 1h2v1h-2zm-1 1h1v1h-1zm-2 1h2v1h-2zm-2 1h2v1h-2zm-1 1h1v1h-1zm-2 1h2v1h-2zm-2 1h2v1h-2zm-1 1h1v1h-1zm-2 1h2v1h-2zm-2 1h2v1h-2zM1122 605h1v1h-1zm1 1h2v1h-2zm2 1h2v1h-2zm2 1h2v1h-2zm2 1h1v1h-1zm1 1h2v1h-2zm2 1h2v1h-2zm2 1h2v1h-2zm2 1h1v1h-1zm1 1h2v1h-2zm2 1h2v1h-2zm2 1h2v1h-2zm2 1h2v1h-2zm2 1h1v1h-1zm1 1h2v1h-2zm2 1h2v1h-2zm2 1h2v1h-2zm2 1h1v1h-1zm1 1h2v1h-2zm2 1h2v1h-2zm2 1h2v1h-2z"/>
<path fill="url(#g2)" d="M1085 197v5h1v-5zm1 5v11h1v-11zm1 11v11h1v-11zm1 11v11h1v-11zm1 11v11h1v-11zm1 11v11h1v-11zm1 11v11h1v-11zm1 11v11h1v-11zm1 11v11h1v-11zm1 11v12h1v-12zm1 12v11h1v-11zm1 11v11h1v-11zm1 11v11h1v-11zm1 11v11h1v-11zm1 11v11h1v-11zm1 11v11h1v-11zm1 11v11h1v-11zm1 11v11h1v-11zm1 11v11h1v-11zm1 11v11h1v-11zm1 11v11h1v-11zm1 11v11h1v-11zm1 11v11h1v-11zm1 11v11h1v-11zm1 11v11h1v-11zm1 11v11h1v-11zm1 11v11h1v-11zm1 11v11h1v-11zm1 11v12h1v-12zm1 12v11h1v-11zm1 11v11h1v-11zm1 11v11h1v-11zm1 11v11h1v-11zm1 11v11h1v-11zm1 11v11h1v-11zm1 11v11h1v-11zm1 11v11h1v-11zm1 11v6h1v-6z"/>
<path fill="#9a1f6a" d="M1159 626h1v1h-1zm1 1h2v1h-2zm2 1h2v1h-2zm2 1h1v1h-1zm1 1h2v1h-2zm2 1h2v1h-2zm2 1h1v1h-1zm1 1h2v1h-2zm2 1h2v1h-2zm2 1h1v1h-1zm1 1h2v1h-2zm2 1h2v1h-2zm2 1h2v1h-2zm2 1h1v1h-1zm1 1h2v1h-2zm2 1h2v1h-2zm2 1h1v1h-1zm1 1h2v1h-2zm2 1h2v1h-2zm2 1h1v1h-1zm1 1h2v1h-2zm2 1h2v1h-2z"/>
<path fill="url(#g3)" d="M1122 219v5h1v-5zm1 5v11h1v-11zm1 11v11h1v-11zm1 11v11h1v-11zm1 11v11h1v-11zm1 11v11h1v-11zm1 11v11h1v-11zm1 11v11h1v-11zm1 11v11h1v-11zm1 11v11h1v-11zm1 11v11h1v-11zm1 11v11h1v-11zm1 11v11h1v-11zm1 11v11h1v-11zm1 11v11h1v-11zm1 11v11h1v-11zm1 11v11h1v-11zm1 11v11h1v-11zm1 11v11h1v-11zm1 11v12h1v-12zm1 12v11h1v-11zm1 11v11h1v-11zm1 11v11h1v-11zm1 11v11h1v-11zm1 11v11h1v-11zm1 11v11h1v-11zm1 11v11h1v-11zm1 11v11h1v-11zm1 11v11h1v-11zm1 11v11h1v-11zm1 11v11h1v-11zm1 11v11h1v-11zm1 11v11h1v-11zm1 11v11h1v-11zm1 11v11h1v-11zm1 11v11h1v-11zm1 11v11h1v-11zm1 11v6h1v-6z"/>
<path fill="#9a1f6a" d="M1196 648h1v1h-1zm1 1h2v1h-2zm2 1h2v1h-2zm2 1h2v1h-2zm2 1h1v1h-1zm1 1h2v1h-2zm2 1h2v1h-2zm2 1h2v1h-2zm2 1h1v1h-1zm1 1h2v1h-2zm2 1h2v1h-2zm2 1h2v1h-2zm2 1h2v1h-2zm2 1h1v1h-1zm1 1h2v1h-2zm2 1h2v1h-2zm2 1h2v1h-2zm2 1h1v1h-1zm1 1h2v1h-2zm2 1h2v1h-2zm2 1h2v1h-2zM1196 648h1v1h-1zm-2 1h2v1h-2zm-2 1h2v1h-2zm-2 1h2v1h-2zm-1 1h1v1h-1zm-2 1h2v1h-2zm-2 1h2v1h-2zm-2 1h2v1h-2zm-1 1h1v1h-1zm-2 1h2v1h-2zm-2 1h2v1h-2zm-2 1h2v1h-2zm-2 1h2v1h-2zm-1 1h1v1h-1zm-2 1h2v1h-2zm-2 1h2v1h-2zm-2 1h2v1h-2zm-1 1h1v1h-1zm-2 1h2v1h-2zm-2 1h2v1h-2zm-2 1h2v1h-2zM1233 669h1v1h-1zm1 1h2v1h-2zm2 1h2v1h-2zm2 1h2v1h-2zm2 1h1v1h-1zm1 1h2v1h-2zm2 1h2v1h-2zm2 1h1v1h-1zm1 1h2v1h-2zm2 1h2v1h-2zm2 1h2v1h-2zm2 1h1v1h-1zm1 1h2v1h-2zm2 1h2v1h-2zm2 1h2v1h-2zm2 1h1v1h-1zm1 1h2v1h-2zm2 1h2v1h-2zm2 1h1v1h-1zm1 1h2v1h-2zm2 1h2v1h-2zm2 1h2v1h-2zM1233 669h1v1h-1zm-2 1h2v1h-2zm-2 1h2v1h-2zm-1 1h1v1h-1zm-2 1h2v1h-2zm-2 1h2v1h-2zm-1 1h1v1h-1zm-2 1h2v1h-2zm-2 1h2v1h-2zm-1 1h1v1h-1zm-2 1h2v1h-2zm-2 1h2v1h-2zm-2 1h2v1h-2zm-1 1h1v1h-1zm-2 1h2v1h-2zm-2 1h2v1h-2zm-1 1h1v1h-1zm-2 1h2v1h-2zm-2 1h2v1h-2zm-1 1h1v1h-1zm-2 1h2v1h-2zm-2 1h2v1h-2zM1271 691h1v1h-1zm1 1h2v1h-2zm2 1h2v1h-2zm2 1h2v1h-2zm2 1h1v1h-1zm1 1h2v1h-2zm2 1h2v1h-2zm2 1h2v1h-2zm2 1h1v1h-1zm1 1h2v1h-2zm2 1h2v1h-2zm2 1h2v1h-2zm2 1h2v1h-2zm2 1h1v1h-1zm1 1h2v1h-2zm2 1h2v1h-2zm2 1h2v1h-2zm2 1h1v1h-1zm1 1h2v1h-2zm2 1h2v1h-2zm2 1h2v1h-2zM1271 691h1v1h-1zm-2 1h2v1h-2zm-2 1h2v1h-2zm-2 1h2v1h-2zm-2 1h2v1h-2zm-1 1h1v1h-1zm-2 1h2v1h-2zm-2 1h2v1h-2zm-2 1h2v1h-2zm-2 1h2v1h-2zm-2 1h2v1h-2zm-1 1h1v1h-1zm-2 1h2v1h-2zm-2 1h2v1h-2zm-2 1h2v1h-2zm-2 1h2v1h-2zm-1 1h1v1h-1zm-2 1h2v1h-2zm-2 1h2v1h-2zm-2 1h2v1h-2zm-2 1h2v1h-2zM1308 712h1v1h-1zm1 1h2v1h-2zm2 1h2v1h-2zm2 1h1v1h-1zm1 1h2v1h-2zm2 1h2v1h-2zm2 1h1v1h-1zm1 1h2v1h-2zm2 1h2v1h-2zm2 1h1v1h-1zm1 1h2v1h-2zm2 1h2v1h-2zm2 1h2v1h-2zm2 1h1v1h-1zm1 1h2v1h-2zm2 1h2v1h-2zm2 1h1v1h-1zm1 1h2v1h-2zm2 1h2v1h-2zm2 1h1v1h-1zm1 1h2v1h-2zm2 1h2v1h-2z"/>
<path fill="url(#g4)" d="M1271 305v5h1v-5zm1 5v11h1v-11zm1 11v11h1v-11zm1 11v11h1v-11zm1 11v11h1v-11zm1 11v11h1v-11zm1 11v11h1v-11zm1 11v11h1v-11zm1 11v11h1v-11zm1 11v11h1v-11zm1 11v11h1v-11zm1 11v11h1v-11zm1 11v11h1v-11zm1 11v11h1v-11zm1 11v11h1v-11zm1 11v11h1v-11zm1 11v11h1v-11zm1 11v11h1v-11zm1 11v11h1v-11zm1 11v12h1v-12zm1 12v11h1v-11zm1 11v11h1v-11zm1 11v11h1v-11zm1 11v11h1v-11zm1 11v11h1v-11zm1 11v11h1v-11zm1 11v11h1v-11zm1 11v11h1v-11zm1 11v11h1v-11zm1 11v11h1v-11zm1 11v11h1v-11zm1 11v11h1v-11zm1 11v11h1v-11zm1 11v11h1v-11zm1 11v11h1v-11zm1 11v11h1v-11zm1 11v11h1v-11zm1 11v6h1v-6z"/>
<path fill="#9a1f6a" d="M1345 734h1v1h-1zm1 1h2v1h-2zm2 1h2v1h-2zm2 1h2v1h-2zm2 1h1v1h-1zm1 1h2v1h-2zm2 1h2v1h-2zm2 1h2v1h-2zm2 1h1v1h-1zm1 1h2v1h-2zm2 1h2v1h-2zm2 1h2v1h-2zm2 1h2v1h-2zm2 1h1v1h-1zm1 1h2v1h-2zm2 1h2v1h-2zm2 1h2v1h-2zm2 1h1v1h-1zm1 1h2v1h-2zm2 1h2v1h-2zm2 1h2v1h-2z"/>
<path fill="url(#g5)" d="M1308 326v5h1v-5zm1 5v11h1v-11zm1 11v11h1v-11zm1 11v11h1v-11zm1 11v11h1v-11zm1 11v11h1v-11zm1 11v11h1v-11zm1 11v11h1v-11zm1 11v11h1v-11zm1 11v12h1v-12zm1 12v11h1v-11zm1 11v11h1v-11zm1 11v11h1v-11zm1 11v11h1v-11zm1 11v11h1v-11zm1 11v11h1v-11zm1 11v11h1v-11zm1 11v11h1v-11zm1 11v11h1v-11zm1 11v11h1v-11zm1 11v11h1v-11zm1 11v11h1v-11zm1 11v11h1v-11zm1 11v11h1v-11zm1 11v11h1v-11zm1 11v11h1v-11zm1 11v11h1v-11zm1 11v11h1v-11zm1 11v12h1v-12zm1 12v11h1v-11zm1 11v11h1v-11zm1 11v11h1v-11zm1 11v11h1v-11zm1 11v11h1v-11zm1 11v11h1v-11zm1 11v11h1v-11zm1 11v11h1v-11zm1 11v6h1v-6z"/>
<path fill="#9a1f6a" d="M1382 755h1v1h-1zm1 1h2v1h-2zm2 1h2v1h-2zm2 1h2v1h-2zm2 1h2v1h-2zm2 1h1v1h-1zm1 1h2v1h-2zm2 1h2v1h-2zm2 1h2v1h-2zm2 1h2v1h-2zm2 1h2v1h-2zm2 1h1v1h-1zm1 1h2v1h-2zm2 1h2v1h-2zm2 1h2v1h-2zm2 1h2v1h-2zm2 1h1v1h-1zm1 1h2v1h-2zm2 1h2v1h-2zm2 1h2v1h-2zm2 1h2v1h-2z"/>
<path fill="url(#g6)" d="M1345 348v5h1v-5zm1 5v11h1v-11zm1 11v11h1v-11zm1 11v11h1v-11zm1 11v11h1v-11zm1 11v11h1v-11zm1 11v11h1v-11zm1 11v11h1v-11zm1 11v11h1v-11zm1 11v11h1v-11zm1 11v11h1v-11zm1 11v11h1v-11zm1 11v11h1v-11zm1 11v11h1v-11zm1 11v11h1v-11zm1 11v11h1v-11zm1 11v11h1v-11zm1 11v11h1v-11zm1 11v11h1v-11zm1 11v12h1v-12zm1 12v11h1v-11zm1 11v11h1v-11zm1 11v11h1v-11zm1 11v11h1v-11zm1 11v11h1v-11zm1 11v11h1v-11zm1 11v11h1v-11zm1 11v11h1v-11zm1 11v11h1v-11zm1 11v11h1v-11zm1 11v11h1v-11zm1 11v11h1v-11zm1 11v11h1v-11zm1 11v11h1v-11zm1 11v11h1v-11zm1 11v11h1v-11zm1 11v11h1v-11zm1 11v6h1v-6z"/>
<path fill="#9a1f6a" d="M1420 776h1v1h-1zm1 1h2v1h-2zm2 1h2v1h-2zm2 1h1v1h-1zm1 1h2v1h-2zm2 1h2v1h-2zm2 1h1v1h-1zm1 1h2v1h-2zm2 1h2v1h-2zm2 1h1v1h-1zm1 1h2v1h-2zm2 1h2v1h-2zm2 1h2v1h-2zm2 1h1v1h-1zm1 1h2v1h-2zm2 1h2v1h-2zm2 1h1v1h-1zm1 1h2v1h-2zm2 1h2v1h-2zm2 1h1v1h-1zm1 1h2v1h-2zm2 1h2v1h-2z"/>
<path fill="url(#g7)" d="M1382 370v5h1v-5zm1 5v11h1v-11zm1 11v10h1v-10zm1 10v11h1v-11zm1 11v11h1v-11zm1 11v10h1v-10zm1 10v11h1v-11zm1 11v11h1v-11zm1 11v11h1v-11zm1 11v10h1v-10zm1 10v11h1v-11zm1 11v11h1v-11zm1 11v10h1v-10zm1 10v11h1v-11zm1 11v11h1v-11zm1 11v11h1v-11zm1 11v10h1v-10zm1 10v11h1v-11zm1 11v11h1v-11zm1 11v10h1v-10zm1 10v11h1v-11zm1 11v11h1v-11zm1 11v10h1v-10zm1 10v11h1v-11zm1 11v11h1v-11zm1 11v11h1v-11zm1 11v10h1v-10zm1 10v11h1v-11zm1 11v11h1v-11zm1 11v10h1v-10zm1 10v11h1v-11zm1 11v11h1v-11zm1 11v11h1v-11zm1 11v10h1v-10zm1 10v11h1v-11zm1 11v11h1v-11zm1 11v10h1v-10zm1 10v11h1v-11zm1 11v6h1v-6z"/>
<path fill="#9a1f6a" d="M1457 798h1v1h-1zm1 1h2v1h-2zm2 1h2v1h-2zm2 1h2v1h-2zm2 1h1v1h-1zm1 1h2v1h-2zm2 1h2v1h-2zm2 1h2v1h-2zm2 1h1v1h-1zm1 1h2v1h-2zm2 1h2v1h-2zm2 1h2v1h-2zm2 1h2v1h-2zm2 1h1v1h-1zm1 1h2v1h-2zm2 1h2v1h-2zm2 1h2v1h-2zm2 1h1v1h-1zm1 1h2v1h-2zm2 1h2v1h-2zm2 1h2v1h-2z"/>
<path fill="url(#g8)" d="M1420 391v5h1v-5zm1 5v11h1v-11zm1 11v11h1v-11zm1 11v11h1v-11zm1 11v11h1v-11zm1 11v11h1v-11zm1 11v11h1v-11zm1 11v11h1v-11zm1 11v11h1v-11zm1 11v11h1v-11zm1 11v11h1v-11zm1 11v11h1v-11zm1 11v11h1v-11zm1 11v11h1v-11zm1 11v11h1v-11zm1 11v11h1v-11zm1 11v11h1v-11zm1 11v11h1v-11zm1 11v11h1v-11zm1 11v12h1v-12zm1 12v11h1v-11zm1 11v11h1v-11zm1 11v11h1v-11zm1 11v11h1v-11zm1 11v11h1v-11zm1 11v11h1v-11zm1 11v11h1v-11zm1 11v11h1v-11zm1 11v11h1v-11zm1 11v11h1v-11zm1 11v11h1v-11zm1 11v11h1v-11zm1 11v11h1v-11zm1 11v11h1v-11zm1 11v11h1v-11zm1 11v11h1v-11zm1 11v11h1v-11zm1 11v6h1v-6z"/>
<path fill="#9a1f6a" d="M1494 819h1v1h-1zm1 1h2v1h-2zm2 1h2v1h-2zm2 1h1v1h-1zm1 1h2v1h-2zm2 1h2v1h-2zm2 1h1v1h-1zm1 1h2v1h-2zm2 1h2v1h-2zm2 1h1v1h-1zm1 1h2v1h-2zm2 1h2v1h-2zm2 1h2v1h-2zm2 1h1v1h-1zm1 1h2v1h-2zm2 1h2v1h-2zm2 1h1v1h-1zm1 1h2v1h-2zm2 1h2v1h-2zm2 1h1v1h-1zm1 1h2v1h-2zm2 1h2v1h-2zM1494 819h1v1h-1zm-2 1h2v1h-2zm-2 1h2v1h-2zm-1 1h1v1h-1zm-2 1h2v1h-2zm-2 1h2v1h-2zm-1 1h1v1h-1zm-2 1h2v1h-2zm-2 1h2v1h-2zm-1 1h1v1h-1zm-2 1h2v1h-2zm-2 1h2v1h-2zm-2 1h2v1h-2zm-1 1h1v1h-1zm-2 1h2v1h-2zm-2 1h2v1h-2zm-1 1h1v1h-1zm-2 1h2v1h-2zm-2 1h2v1h-2zm-1 1h1v1h-1zm-2 1h2v1h-2zm-2 1h2v1h-2zM1531 841h1v1h-1zm1 1h2v1h-2zm2 1h2v1h-2zm2 1h2v1h-2zm2 1h2v1h-2zm2 1h1v1h-1zm1 1h2v1h-2zm2 1h2v1h-2zm2 1h2v1h-2zm2 1h2v1h-2zm2 1h2v1h-2zm2 1h1v1h-1zm1 1h2v1h-2zm2 1h2v1h-2zm2 1h2v1h-2zm2 1h2v1h-2zm2 1h1v1h-1zm1 1h2v1h-2zm2 1h2v1h-2zm2 1h2v1h-2zm2 1h2v1h-2zM1531 841h1v1h-1zm-2 1h2v1h-2zm-2 1h2v1h-2zm-2 1h2v1h-2zm-1 1h1v1h-1zm-2 1h2v1h-2zm-2 1h2v1h-2zm-2 1h2v1h-2zm-1 1h1v1h-1zm-2 1h2v1h-2zm-2 1h2v1h-2zm-2 1h2v1h-2zm-2 1h2v1h-2zm-1 1h1v1h-1zm-2 1h2v1h-2zm-2 1h2v1h-2zm-2 1h2v1h-2zm-1 1h1v1h-1zm-2 1h2v1h-2zm-2 1h2v1h-2zm-2 1h2v1h-2zM1569 862h1v1h-1zm-2 1h2v1h-2zm-2 1h2v1h-2zm-2 1h2v1h-2zm-1 1h1v1h-1zm-2 1h2v1h-2zm-2 1h2v1h-2zm-1 1h1v1h-1zm-2 1h2v1h-2zm-2 1h2v1h-2zm-2 1h2v1h-2zm-1 1h1v1h-1zm-2 1h2v1h-2zm-2 1h2v1h-2zm-2 1h2v1h-2zm-1 1h1v1h-1zm-2 1h2v1h-2zm-2 1h2v1h-2zm-1 1h1v1h-1zm-2 1h2v1h-2zm-2 1h2v1h-2zm-2 1h2v1h-2zM862 497h1v1h-1zm1 1h2v1h-2zm2 1h2v1h-2zm2 1h1v1h-1zm1 1h2v1h-2zm2 1h2v1h-2zm2 1h1v1h-1zm1 1h2v1h-2zm2 1h2v1h-2zm2 1h1v1h-1zm1 1h2v1h-2zm2 1h2v1h-2zm2 1h2v1h-2zm2 1h1v1h-1zm1 1h2v1h-2zm2 1h2v1h-2zm2 1h1v1h-1zm1 1h2v1h-2zm2 1h2v1h-2zm2 1h1v1h-1zm1 1h2v1h-2zm2 1h2v1h-2zM862 497h1v1h-1zm-2 1h2v1h-2zm-2 1h2v1h-2zm-1 1h1v1h-1zm-2 1h2v1h-2zm-2 1h2v1h-2zm-1 1h1v1h-1zm-2 1h2v1h-2zm-2 1h2v1h-2zm-1 1h1v1h-1zm-2 1h2v1h-2zm-2 1h2v1h-2zm-2 1h2v1h-2zm-1 1h1v1h-1zm-2 1h2v1h-2zm-2 1h2v1h-2zm-1 1h1v1h-1zm-2 1h2v1h-2zm-2 1h2v1h-2zm-1 1h1v1h-1zm-2 1h2v1h-2zm-2 1h2v1h-2z"/>
<path fill="url(#g9)" d="M899 514v6h1v-6zm1 -11v11h1v-11zm1 -10v10h1v-10zm1 -11v11h1v-11zm1 -11v11h1v-11zm1 -11v11h1v-11zm1 -10v10h1v-10zm1 -11v11h1v-11zm1 -11v11h1v-11zm1 -11v11h1v-11zm1 -11v11h1v-11zm1 -10v10h1v-10zm1 -11v11h1v-11zm1 -11v11h1v-11zm1 -11v11h1v-11zm1 -10v10h1v-10zm1 -11v11h1v-11zm1 -11v11h1v-11zm1 -11v11h1v-11zm1 -10v10h1v-10zm1 -11v11h1v-11zm1 -11v11h1v-11zm1 -11v11h1v-11zm1 -10v10h1v-10zm1 -11v11h1v-11zm1 -11v11h1v-11zm1 -11v11h1v-11zm1 -10v10h1v-10zm1 -11v11h1v-11zm1 -11v11h1v-11zm1 -11v11h1v-11zm1 -11v11h1v-11zm1 -10v10h1v-10zm1 -11v11h1v-11zm1 -11v11h1v-11zm1 -11v11h1v-11zm1 -10v10h1v-10zm1 -11v11h1v-11zm1 -5v5h1v-5z"/>
<path fill="#9a1f6a" d="M899 519h1v1h-1zm-2 1h2v1h-2zm-2 1h2v1h-2zm-2 1h2v1h-2zm-1 1h1v1h-1zm-2 1h2v1h-2zm-2 1h2v1h-2zm-2 1h2v1h-2zm-1 1h1v1h-1zm-2 1h2v1h-2zm-2 1h2v1h-2zm-2 1h2v1h-2zm-2 1h2v1h-2zm-1 1h1v1h-1zm-2 1h2v1h-2zm-2 1h2v1h-2zm-2 1h2v1h-2zm-1 1h1v1h-1zm-2 1h2v1h-2zm-2 1h2v1h-2zm-2 1h2v1h-2z"/>
<path fill="#f3af3d" d="M937 110h1v1h-1zm1 1h2v1h-2zm2 1h2v1h-2zm2 1h1v1h-1zm1 1h2v1h-2zm2 1h2v1h-2zm2 1h1v1h-1zm1 1h2v1h-2zm2 1h2v1h-2zm2 1h1v1h-1zm1 1h2v1h-2zm2 1h2v1h-2zm2 1h2v1h-2zm2 1h1v1h-1zm1 1h2v1h-2zm2 1h2v1h-2zm2 1h1v1h-1zm1 1h2v1h-2zm2 1h2v1h-2zm2 1h1v1h-1zm1 1h2v1h-2zm2 1h2v1h-2zM937 110h1v1h-1zm-2 1h2v1h-2zm-2 1h2v1h-2zm-2 1h2v1h-2zm-1 1h1v1h-1zm-2 1h2v1h-2zm-2 1h2v1h-2zm-1 1h1v1h-1zm-2 1h2v1h-2zm-2 1h2v1h-2zm-2 1h2v1h-2zm-1 1h1v1h-1zm-2 1h2v1h-2zm-2 1h2v1h-2zm-2 1h2v1h-2zm-1 1h1v1h-1zm-2 1h2v1h-2zm-2 1h2v1h-2zm-1 1h1v1h-1zm-2 1h2v1h-2zm-2 1h2v1h-2zm-2 1h2v1h-2z"/>
<path fill="url(#g10)" d="M974 132v7h1v-7zm1 7v12h1v-12zm1 12v12h1v-12zm1 12v12h1v-12zm1 12v12h1v-12zm1 12v13h1v-13zm1 13v12h1v-12zm1 12v12h1v-12zm1 12v12h1v-12zm1 12v12h1v-12zm1 12v12h1v-12zm1 12v13h1v-13zm1 13v12h1v-12zm1 12v12h1v-12zm1 12v12h1v-12zm1 12v12h1v-12zm1 12v13h1v-13zm1 13v12h1v-12zm1 12v12h1v-12zm1 12v12h1v-12zm1 12v12h1v-12zm1 12v13h1v-13zm1 13v12h1v-12zm1 12v12h1v-12zm1 12v12h1v-12zm1 12v12h1v-12zm1 12v13h1v-13zm1 13v12h1v-12zm1 12v12h1v-12zm1 12v12h1v-12zm1 12v12h1v-12zm1 12v12h1v-12zm1 12v13h1v-13zm1 13v12h1v-12zm1 12v12h1v-12zm1 12v12h1v-12zm1 12v12h1v-12zm1 12v6h1v-6z"/>
<path fill="#f3af3d" d="M974 132h1v1h-1zm-2 1h2v1h-2zm-2 1h2v1h-2zm-2 1h2v1h-2zm-1 1h1v1h-1zm-2 1h2v1h-2zm-2 1h2v1h-2zm-2 1h2v1h-2zm-1 1h1v1h-1zm-2 1h2v1h-2zm-2 1h2v1h-2zm-2 1h2v1h-2zm-2 1h2v1h-2zm-1 1h1v1h-1zm-2 1h2v1h-2zm-2 1h2v1h-2zm-2 1h2v1h-2zm-1 1h1v1h-1zm-2 1h2v1h-2zm-2 1h2v1h-2zm-2 1h2v1h-2z"/>
<path fill="#9a1f6a" d="M1011 583h1v1h-1zm1 1h2v1h-2zm2 1h2v1h-2zm2 1h1v1h-1zm1 1h2v1h-2zm2 1h2v1h-2zm2 1h1v1h-1zm1 1h2v1h-2zm2 1h2v1h-2zm2 1h1v1h-1zm1 1h2v1h-2zm2 1h2v1h-2zm2 1h2v1h-2zm2 1h1v1h-1zm1 1h2v1h-2zm2 1h2v1h-2zm2 1h1v1h-1zm1 1h2v1h-2zm2 1h2v1h-2zm2 1h1v1h-1zm1 1h2v1h-2zm2 1h2v1h-2zM1011 583h1v1h-1zm-2 1h2v1h-2zm-2 1h2v1h-2zm-1 1h1v1h-1zm-2 1h2v1h-2zm-2 1h2v1h-2zm-1 1h1v1h-1zm-2 1h2v1h-2zm-2 1h2v1h-2zm-1 1h1v1h-1zm-2 1h2v1h-2zm-2 1h2v1h-2zm-2 1h2v1h-2zm-1 1h1v1h-1zm-2 1h2v1h-2zm-2 1h2v1h-2zm-1 1h1v1h-1zm-2 1h2v1h-2zm-2 1h2v1h-2zm-1 1h1v1h-1zm-2 1h2v1h-2zm-2 1h2v1h-2z"/>
<path fill="url(#g11)" d="M1048 600v6h1v-6zm1 -11v11h1v-11zm1 -11v11h1v-11zm1 -11v11h1v-11zm1 -11v11h1v-11zm1 -11v11h1v-11zm1 -11v11h1v-11zm1 -11v11h1v-11zm1 -11v11h1v-11zm1 -12v12h1v-12zm1 -11v11h1v-11zm1 -11v11h1v-11zm1 -11v11h1v-11zm1 -11v11h1v-11zm1 -11v11h1v-11zm1 -11v11h1v-11zm1 -11v11h1v-11zm1 -11v11h1v-11zm1 -11v11h1v-11zm1 -11v11h1v-11zm1 -11v11h1v-11zm1 -11v11h1v-11zm1 -11v11h1v-11zm1 -11v11h1v-11zm1 -11v11h1v-11zm1 -11v11h1v-11zm1 -11v11h1v-11zm1 -11v11h1v-11zm1 -12v12h1v-12zm1 -11v11h1v-11zm1 -11v11h1v-11zm1 -11v11h1v-11zm1 -11v11h1v-11zm1 -11v11h1v-11zm1 -11v11h1v-11zm1 -11v11h1v-11zm1 -11v11h1v-11zm1 -5v5h1v-5z"/>
<path fill="#9a1f6a" d="M1048 605h1v1h-1zm-2 1h2v1h-2zm-2 1h2v1h-2zm-2 1h2v1h-2zm-1 1h1v1h-1zm-2 1h2v1h-2zm-2 1h2v1h-2zm-2 1h2v1h-2zm-1 1h1v1h-1zm-2 1h2v1h-2zm-2 1h2v1h-2zm-2 1h2v1h-2zm-2 1h2v1h-2zm-1 1h1v1h-1zm-2 1h2v1h-2zm-2 1h2v1h-2zm-2 1h2v1h-2zm-1 1h1v1h-1zm-2 1h2v1h-2zm-2 1h2v1h-2zm-2 1h2v1h-2z"/>
<path fill="#f3af3d" d="M1085 196h1v1h-1zm1 1h2v1h-2zm2 1h2v1h-2zm2 1h1v1h-1zm1 1h2v1h-2zm2 1h2v1h-2zm2 1h1v1h-1zm1 1h2v1h-2zm2 1h2v1h-2zm2 1h1v1h-1zm1 1h2v1h-2zm2 1h2v1h-2zm2 1h2v1h-2zm2 1h1v1h-1zm1 1h2v1h-2zm2 1h2v1h-2zm2 1h1v1h-1zm1 1h2v1h-2zm2 1h2v1h-2zm2 1h1v1h-1zm1 1h2v1h-2zm2 1h2v1h-2zM1085 196h1v1h-1zm-2 1h2v1h-2zm-2 1h2v1h-2zm-1 1h1v1h-1zm-2 1h2v1h-2zm-2 1h2v1h-2zm-1 1h1v1h-1zm-2 1h2v1h-2zm-2 1h2v1h-2zm-1 1h1v1h-1zm-2 1h2v1h-2zm-2 1h2v1h-2zm-2 1h2v1h-2zm-1 1h1v1h-1zm-2 1h2v1h-2zm-2 1h2v1h-2zm-1 1h1v1h-1zm-2 1h2v1h-2zm-2 1h2v1h-2zm-1 1h1v1h-1zm-2 1h2v1h-2zm-2 1h2v1h-2z"/>
<path fill="url(#g12)" d="M1122 218v7h1v-7zm1 7v12h1v-12zm1 12v12h1v-12zm1 12v12h1v-12zm1 12v12h1v-12zm1 12v13h1v-13zm1 13v12h1v-12zm1 12v12h1v-12zm1 12v12h1v-12zm1 12v12h1v-12zm1 12v12h1v-12zm1 12v13h1v-13zm1 13v12h1v-12zm1 12v12h1v-12zm1 12v12h1v-12zm1 12v12h1v-12zm1 12v13h1v-13zm1 13v12h1v-12zm1 12v12h1v-12zm1 12v12h1v-12zm1 12v12h1v-12zm1 12v13h1v-13zm1 13v12h1v-12zm1 12v12h1v-12zm1 12v12h1v-12zm1 12v12h1v-12zm1 12v13h1v-13zm1 13v12h1v-12zm1 12v12h1v-12zm1 12v12h1v-12zm1 12v12h1v-12zm1 12v12h1v-12zm1 12v13h1v-13zm1 13v12h1v-12zm1 12v12h1v-12zm1 12v12h1v-12zm1 12v12h1v-12zm1 12v6h1v-6z"/>
<path fill="#f3af3d" d="M1122 218h1v1h-1zm-2 1h2v1h-2zm-2 1h2v1h-2zm-2 1h2v1h-2zm-1 1h1v1h-1zm-2 1h2v1h-2zm-2 1h2v1h-2zm-2 1h2v1h-2zm-1 1h1v1h-1zm-2 1h2v1h-2zm-2 1h2v1h-2zm-2 1h2v1h-2zm-2 1h2v1h-2zm-1 1h1v1h-1zm-2 1h2v1h-2zm-2 1h2v1h-2zm-2 1h2v1h-2zm-1 1h1v1h-1zm-2 1h2v1h-2zm-2 1h2v1h-2zm-2 1h2v1h-2z"/>
<path fill="#9a1f6a" d="M1159 669h1v1h-1zm1 1h2v1h-2zm2 1h2v1h-2zm2 1h1v1h-1zm1 1h2v1h-2zm2 1h2v1h-2zm2 1h1v1h-1zm1 1h2v1h-2zm2 1h2v1h-2zm2 1h1v1h-1zm1 1h2v1h-2zm2 1h2v1h-2zm2 1h2v1h-2zm2 1h1v1h-1zm1 1h2v1h-2zm2 1h2v1h-2zm2 1h1v1h-1zm1 1h2v1h-2zm2 1h2v1h-2zm2 1h1v1h-1zm1 1h2v1h-2zm2 1h2v1h-2zM1159 669h1v1h-1zm-2 1h2v1h-2zm-2 1h2v1h-2zm-1 1h1v1h-1zm-2 1h2v1h-2zm-2 1h2v1h-2zm-1 1h1v1h-1zm-2 1h2v1h-2zm-2 1h2v1h-2zm-1 1h1v1h-1zm-2 1h2v1h-2zm-2 1h2v1h-2zm-2 1h2v1h-2zm-1 1h1v1h-1zm-2 1h2v1h-2zm-2 1h2v1h-2zm-1 1h1v1h-1zm-2 1h2v1h-2zm-2 1h2v1h-2zm-1 1h1v1h-1zm-2 1h2v1h-2zm-2 1h2v1h-2zM1196 691h1v1h-1zm1 1h2v1h-2zm2 1h2v1h-2zm2 1h2v1h-2zm2 1h1v1h-1zm1 1h2v1h-2zm2 1h2v1h-2zm2 1h2v1h-2zm2 1h1v1h-1zm1 1h2v1h-2zm2 1h2v1h-2zm2 1h2v1h-2zm2 1h2v1h-2zm2 1h1v1h-1zm1 1h2v1h-2zm2 1h2v1h-2zm2 1h2v1h-2zm2 1h1v1h-1zm1 1h2v1h-2zm2 1h2v1h-2zm2 1h2v1h-2zM1196 691h1v1h-1zm-2 1h2v1h-2zm-2 1h2v1h-2zm-2 1h2v1h-2zm-1 1h1v1h-1zm-2 1h2v1h-2zm-2 1h2v1h-2zm-2 1h2v1h-2zm-1 1h1v1h-1zm-2 1h2v1h-2zm-2 1h2v1h-2zm-2 1h2v1h-2zm-2 1h2v1h-2zm-1 1h1v1h-1zm-2 1h2v1h-2zm-2 1h2v1h-2zm-2 1h2v1h-2zm-1 1h1v1h-1zm-2 1h2v1h-2zm-2 1h2v1h-2zm-2 1h2v1h-2z"/>
<path fill="url(#g13)" d="M1233 707v6h1v-6zm1 -11v11h1v-11zm1 -10v10h1v-10zm1 -11v11h1v-11zm1 -11v11h1v-11zm1 -11v11h1v-11zm1 -10v10h1v-10zm1 -11v11h1v-11zm1 -11v11h1v-11zm1 -11v11h1v-11zm1 -10v10h1v-10zm1 -11v11h1v-11zm1 -11v11h1v-11zm1 -10v10h1v-10zm1 -11v11h1v-11zm1 -11v11h1v-11zm1 -11v11h1v-11zm1 -10v10h1v-10zm1 -11v11h1v-11zm1 -11v11h1v-11zm1 -11v11h1v-11zm1 -10v10h1v-10zm1 -11v11h1v-11zm1 -11v11h1v-11zm1 -11v11h1v-11zm1 -10v10h1v-10zm1 -11v11h1v-11zm1 -11v11h1v-11zm1 -11v11h1v-11zm1 -10v10h1v-10zm1 -11v11h1v-11zm1 -11v11h1v-11zm1 -10v10h1v-10zm1 -11v11h1v-11zm1 -11v11h1v-11zm1 -11v11h1v-11zm1 -10v10h1v-10zm1 -11v11h1v-11zm1 -5v5h1v-5z"/>
<path fill="#9a1f6a" d="M1233 712h1v1h-1zm-2 1h2v1h-2zm-2 1h2v1h-2zm-1 1h1v1h-1zm-2 1h2v1h-2zm-2 1h2v1h-2zm-1 1h1v1h-1zm-2 1h2v1h-2zm-2 1h2v1h-2zm-1 1h1v1h-1zm-2 1h2v1h-2zm-2 1h2v1h-2zm-2 1h2v1h-2zm-1 1h1v1h-1zm-2 1h2v1h-2zm-2 1h2v1h-2zm-1 1h1v1h-1zm-2 1h2v1h-2zm-2 1h2v1h-2zm-1 1h1v1h-1zm-2 1h2v1h-2zm-2 1h2v1h-2z"/>
<path fill="#f3af3d" d="M1271 304h1v1h-1zm1 1h2v1h-2zm2 1h2v1h-2zm2 1h2v1h-2zm2 1h1v1h-1zm1 1h2v1h-2zm2 1h2v1h-2zm2 1h2v1h-2zm2 1h1v1h-1zm1 1h2v1h-2zm2 1h2v1h-2zm2 1h2v1h-2zm2 1h2v1h-2zm2 1h1v1h-1zm1 1h2v1h-2zm2 1h2v1h-2zm2 1h2v1h-2zm2 1h1v1h-1zm1 1h2v1h-2zm2 1h2v1h-2zm2 1h2v1h-2z"/>
<path fill="url(#g14)" d="M1233 750v5h1v-5zm1 -12v12h1v-12zm1 -12v12h1v-12zm1 -12v12h1v-12zm1 -12v12h1v-12zm1 -12v12h1v-12zm1 -12v12h1v-12zm1 -12v12h1v-12zm1 -11v11h1v-11zm1 -12v12h1v-12zm1 -12v12h1v-12zm1 -12v12h1v-12zm1 -12v12h1v-12zm1 -12v12h1v-12zm1 -12v12h1v-12zm1 -11v11h1v-11zm1 -12v12h1v-12zm1 -12v12h1v-12zm1 -12v12h1v-12zm1 -12v12h1v-12zm1 -12v12h1v-12zm1 -12v12h1v-12zm1 -12v12h1v-12zm1 -11v11h1v-11zm1 -12v12h1v-12zm1 -12v12h1v-12zm1 -12v12h1v-12zm1 -12v12h1v-12zm1 -12v12h1v-12zm1 -12v12h1v-12zm1 -11v11h1v-11zm1 -12v12h1v-12zm1 -12v12h1v-12zm1 -12v12h1v-12zm1 -12v12h1v-12zm1 -12v12h1v-12zm1 -12v12h1v-12zm1 -12v12h1v-12zm1 -6v6h1v-6z"/>
<path fill="#f3af3d" d="M1308 325h1v1h-1zm1 1h2v1h-2zm2 1h2v1h-2zm2 1h1v1h-1zm1 1h2v1h-2zm2 1h2v1h-2zm2 1h1v1h-1zm1 1h2v1h-2zm2 1h2v1h-2zm2 1h1v1h-1zm1 1h2v1h-2zm2 1h2v1h-2zm2 1h2v1h-2zm2 1h1v1h-1zm1 1h2v1h-2zm2 1h2v1h-2zm2 1h1v1h-1zm1 1h2v1h-2zm2 1h2v1h-2zm2 1h1v1h-1zm1 1h2v1h-2zm2 1h2v1h-2z"/>
<path fill="url(#g15)" d="M1271 770v6h1v-6zm1 -12v12h1v-12zm1 -12v12h1v-12zm1 -12v12h1v-12zm1 -12v12h1v-12zm1 -13v13h1v-13zm1 -12v12h1v-12zm1 -12v12h1v-12zm1 -12v12h1v-12zm1 -12v12h1v-12zm1 -12v12h1v-12zm1 -13v13h1v-13zm1 -12v12h1v-12zm1 -12v12h1v-12zm1 -12v12h1v-12zm1 -12v12h1v-12zm1 -13v13h1v-13zm1 -12v12h1v-12zm1 -12v12h1v-12zm1 -12v12h1v-12zm1 -12v12h1v-12zm1 -13v13h1v-13zm1 -12v12h1v-12zm1 -12v12h1v-12zm1 -12v12h1v-12zm1 -12v12h1v-12zm1 -13v13h1v-13zm1 -12v12h1v-12zm1 -12v12h1v-12zm1 -12v12h1v-12zm1 -12v12h1v-12zm1 -12v12h1v-12zm1 -13v13h1v-13zm1 -12v12h1v-12zm1 -12v12h1v-12zm1 -12v12h1v-12zm1 -12v12h1v-12zm1 -7v7h1v-7z"/>
<path fill="#f3af3d" d="M1345 347h1v1h-1zm1 1h2v1h-2zm2 1h2v1h-2zm2 1h1v1h-1zm1 1h2v1h-2zm2 1h2v1h-2zm2 1h1v1h-1zm1 1h2v1h-2zm2 1h2v1h-2zm2 1h1v1h-1zm1 1h2v1h-2zm2 1h2v1h-2zm2 1h2v1h-2zm2 1h1v1h-1zm1 1h2v1h-2zm2 1h2v1h-2zm2 1h1v1h-1zm1 1h2v1h-2zm2 1h2v1h-2zm2 1h1v1h-1zm1 1h2v1h-2zm2 1h2v1h-2z"/>
<path fill="url(#g16)" d="M1308 792v6h1v-6zm1 -12v12h1v-12zm1 -12v12h1v-12zm1 -12v12h1v-12zm1 -12v12h1v-12zm1 -13v13h1v-13zm1 -12v12h1v-12zm1 -12v12h1v-12zm1 -12v12h1v-12zm1 -12v12h1v-12zm1 -12v12h1v-12zm1 -13v13h1v-13zm1 -12v12h1v-12zm1 -12v12h1v-12zm1 -12v12h1v-12zm1 -12v12h1v-12zm1 -13v13h1v-13zm1 -12v12h1v-12zm1 -12v12h1v-12zm1 -12v12h1v-12zm1 -12v12h1v-12zm1 -13v13h1v-13zm1 -12v12h1v-12zm1 -12v12h1v-12zm1 -12v12h1v-12zm1 -12v12h1v-12zm1 -13v13h1v-13zm1 -12v12h1v-12zm1 -12v12h1v-12zm1 -12v12h1v-12zm1 -12v12h1v-12zm1 -12v12h1v-12zm1 -13v13h1v-13zm1 -12v12h1v-12zm1 -12v12h1v-12zm1 -12v12h1v-12zm1 -12v12h1v-12zm1 -7v7h1v-7z"/>
<path fill="#f3af3d" d="M1382 369h1v1h-1zm1 1h2v1h-2zm2 1h2v1h-2zm2 1h2v1h-2zm2 1h2v1h-2zm2 1h1v1h-1zm1 1h2v1h-2zm2 1h2v1h-2zm2 1h2v1h-2zm2 1h2v1h-2zm2 1h2v1h-2zm2 1h1v1h-1zm1 1h2v1h-2zm2 1h2v1h-2zm2 1h2v1h-2zm2 1h2v1h-2zm2 1h1v1h-1zm1 1h2v1h-2zm2 1h2v1h-2zm2 1h2v1h-2zm2 1h2v1h-2z"/>
<path fill="url(#g17)" d="M1345 813v6h1v-6zm1 -12v12h1v-12zm1 -12v12h1v-12zm1 -12v12h1v-12zm1 -12v12h1v-12zm1 -12v12h1v-12zm1 -13v13h1v-13zm1 -12v12h1v-12zm1 -12v12h1v-12zm1 -12v12h1v-12zm1 -12v12h1v-12zm1 -12v12h1v-12zm1 -13v13h1v-13zm1 -12v12h1v-12zm1 -12v12h1v-12zm1 -12v12h1v-12zm1 -12v12h1v-12zm1 -12v12h1v-12zm1 -12v12h1v-12zm1 -13v13h1v-13zm1 -12v12h1v-12zm1 -12v12h1v-12zm1 -12v12h1v-12zm1 -12v12h1v-12zm1 -12v12h1v-12zm1 -13v13h1v-13zm1 -12v12h1v-12zm1 -12v12h1v-12zm1 -12v12h1v-12zm1 -12v12h1v-12zm1 -12v12h1v-12zm1 -13v13h1v-13zm1 -12v12h1v-12zm1 -12v12h1v-12zm1 -12v12h1v-12zm1 -12v12h1v-12zm1 -12v12h1v-12zm1 -7v7h1v-7z"/>
<path fill="url(#g18)" d="M1420 390v7h1v-7zm1 7v12h1v-12zm1 12v12h1v-12zm1 12v12h1v-12zm1 12v12h1v-12zm1 12v13h1v-13zm1 13v12h1v-12zm1 12v12h1v-12zm1 12v12h1v-12zm1 12v12h1v-12zm1 12v12h1v-12zm1 12v13h1v-13zm1 13v12h1v-12zm1 12v12h1v-12zm1 12v12h1v-12zm1 12v12h1v-12zm1 12v13h1v-13zm1 13v12h1v-12zm1 12v12h1v-12zm1 12v12h1v-12zm1 12v12h1v-12zm1 12v13h1v-13zm1 13v12h1v-12zm1 12v12h1v-12zm1 12v12h1v-12zm1 12v12h1v-12zm1 12v13h1v-13zm1 13v12h1v-12zm1 12v12h1v-12zm1 12v12h1v-12zm1 12v12h1v-12zm1 12v12h1v-12zm1 12v13h1v-13zm1 13v12h1v-12zm1 12v12h1v-12zm1 12v12h1v-12zm1 12v12h1v-12zm1 12v6h1v-6z"/>
<path fill="#f3af3d" d="M1420 390h1v1h-1zm-2 1h2v1h-2zm-2 1h2v1h-2zm-2 1h2v1h-2zm-1 1h1v1h-1zm-2 1h2v1h-2zm-2 1h2v1h-2zm-1 1h1v1h-1zm-2 1h2v1h-2zm-2 1h2v1h-2zm-2 1h2v1h-2zm-1 1h1v1h-1zm-2 1h2v1h-2zm-2 1h2v1h-2zm-2 1h2v1h-2zm-1 1h1v1h-1zm-2 1h2v1h-2zm-2 1h2v1h-2zm-1 1h1v1h-1zm-2 1h2v1h-2zm-2 1h2v1h-2zm-2 1h2v1h-2z"/>
<path fill="#9a1f6a" d="M1457 841h1v1h-1zm1 1h2v1h-2zm2 1h2v1h-2zm2 1h2v1h-2zm2 1h1v1h-1zm1 1h2v1h-2zm2 1h2v1h-2zm2 1h2v1h-2zm2 1h1v1h-1zm1 1h2v1h-2zm2 1h2v1h-2zm2 1h2v1h-2zm2 1h2v1h-2zm2 1h1v1h-1zm1 1h2v1h-2zm2 1h2v1h-2zm2 1h2v1h-2zm2 1h1v1h-1zm1 1h2v1h-2zm2 1h2v1h-2zm2 1h2v1h-2z"/>
<path fill="url(#g19)" d="M1420 434v5h1v-5zm1 5v11h1v-11zm1 11v11h1v-11zm1 11v11h1v-11zm1 11v11h1v-11zm1 11v11h1v-11zm1 11v11h1v-11zm1 11v11h1v-11zm1 11v11h1v-11zm1 11v11h1v-11zm1 11v11h1v-11zm1 11v11h1v-11zm1 11v11h1v-11zm1 11v11h1v-11zm1 11v11h1v-11zm1 11v11h1v-11zm1 11v11h1v-11zm1 11v11h1v-11zm1 11v11h1v-11zm1 11v12h1v-12zm1 12v11h1v-11zm1 11v11h1v-11zm1 11v11h1v-11zm1 11v11h1v-11zm1 11v11h1v-11zm1 11v11h1v-11zm1 11v11h1v-11zm1 11v11h1v-11zm1 11v11h1v-11zm1 11v11h1v-11zm1 11v11h1v-11zm1 11v11h1v-11zm1 11v11h1v-11zm1 11v11h1v-11zm1 11v11h1v-11zm1 11v11h1v-11zm1 11v11h1v-11zm1 11v6h1v-6z"/>
<path fill="#9a1f6a" d="M1494 862h1v1h-1zm1 1h2v1h-2zm2 1h2v1h-2zm2 1h1v1h-1zm1 1h2v1h-2zm2 1h2v1h-2zm2 1h1v1h-1zm1 1h2v1h-2zm2 1h2v1h-2zm2 1h1v1h-1zm1 1h2v1h-2zm2 1h2v1h-2zm2 1h2v1h-2zm2 1h1v1h-1zm1 1h2v1h-2zm2 1h2v1h-2zm2 1h1v1h-1zm1 1h2v1h-2zm2 1h2v1h-2zm2 1h1v1h-1zm1 1h2v1h-2zm2 1h2v1h-2zM1494 862h1v1h-1zm-2 1h2v1h-2zm-2 1h2v1h-2zm-1 1h1v1h-1zm-2 1h2v1h-2zm-2 1h2v1h-2zm-1 1h1v1h-1zm-2 1h2v1h-2zm-2 1h2v1h-2zm-1 1h1v1h-1zm-2 1h2v1h-2zm-2 1h2v1h-2zm-2 1h2v1h-2zm-1 1h1v1h-1zm-2 1h2v1h-2zm-2 1h2v1h-2zm-1 1h1v1h-1zm-2 1h2v1h-2zm-2 1h2v1h-2zm-1 1h1v1h-1zm-2 1h2v1h-2zm-2 1h2v1h-2zM1531 884h1v1h-1zm-2 1h2v1h-2zm-2 1h2v1h-2zm-2 1h2v1h-2zm-1 1h1v1h-1zm-2 1h2v1h-2zm-2 1h2v1h-2zm-2 1h2v1h-2zm-1 1h1v1h-1zm-2 1h2v1h-2zm-2 1h2v1h-2zm-2 1h2v1h-2zm-2 1h2v1h-2zm-1 1h1v1h-1zm-2 1h2v1h-2zm-2 1h2v1h-2zm-2 1h2v1h-2zm-1 1h1v1h-1zm-2 1h2v1h-2zm-2 1h2v1h-2zm-2 1h2v1h-2zM825 519h1v1h-1zm1 1h2v1h-2zm2 1h2v1h-2zm2 1h2v1h-2zm2 1h1v1h-1zm1 1h2v1h-2zm2 1h2v1h-2zm2 1h2v1h-2zm2 1h1v1h-1zm1 1h2v1h-2zm2 1h2v1h-2zm2 1h2v1h-2zm2 1h2v1h-2zm2 1h1v1h-1zm1 1h2v1h-2zm2 1h2v1h-2zm2 1h2v1h-2zm2 1h1v1h-1zm1 1h2v1h-2zm2 1h2v1h-2zm2 1h2v1h-2zM825 519h1v1h-1zm-2 1h2v1h-2zm-2 1h2v1h-2zm-2 1h2v1h-2zm-1 1h1v1h-1zm-2 1h2v1h-2zm-2 1h2v1h-2zm-2 1h2v1h-2zm-1 1h1v1h-1zm-2 1h2v1h-2zm-2 1h2v1h-2zm-2 1h2v1h-2zm-2 1h2v1h-2zm-1 1h1v1h-1zm-2 1h2v1h-2zm-2 1h2v1h-2zm-2 1h2v1h-2zm-1 1h1v1h-1zm-2 1h2v1h-2zm-2 1h2v1h-2zm-2 1h2v1h-2z"/>
<path fill="url(#g20)" d="M862 535v6h1v-6zm1 -11v11h1v-11zm1 -11v11h1v-11zm1 -11v11h1v-11zm1 -11v11h1v-11zm1 -11v11h1v-11zm1 -11v11h1v-11zm1 -11v11h1v-11zm1 -11v11h1v-11zm1 -11v11h1v-11zm1 -11v11h1v-11zm1 -11v11h1v-11zm1 -11v11h1v-11zm1 -11v11h1v-11zm1 -11v11h1v-11zm1 -11v11h1v-11zm1 -11v11h1v-11zm1 -11v11h1v-11zm1 -12v12h1v-12zm1 -11v11h1v-11zm1 -11v11h1v-11zm1 -11v11h1v-11zm1 -11v11h1v-11zm1 -11v11h1v-11zm1 -11v11h1v-11zm1 -11v11h1v-11zm1 -11v11h1v-11zm1 -11v11h1v-11zm1 -11v11h1v-11zm1 -11v11h1v-11zm1 -11v11h1v-11zm1 -11v11h1v-11zm1 -11v11h1v-11zm1 -11v11h1v-11zm1 -11v11h1v-11zm1 -11v11h1v-11zm1 -11v11h1v-11zm1 -5v5h1v-5z"/>
<path fill="#9a1f6a" d="M862 540h1v1h-1zm-2 1h2v1h-2zm-2 1h2v1h-2zm-1 1h1v1h-1zm-2 1h2v1h-2zm-2 1h2v1h-2zm-1 1h1v1h-1zm-2 1h2v1h-2zm-2 1h2v1h-2zm-1 1h1v1h-1zm-2 1h2v1h-2zm-2 1h2v1h-2zm-2 1h2v1h-2zm-1 1h1v1h-1zm-2 1h2v1h-2zm-2 1h2v1h-2zm-1 1h1v1h-1zm-2 1h2v1h-2zm-2 1h2v1h-2zm-1 1h1v1h-1zm-2 1h2v1h-2zm-2 1h2v1h-2z"/>
<path fill="#f3af3d" d="M899 132h1v1h-1zm1 1h2v1h-2zm2 1h2v1h-2zm2 1h2v1h-2zm2 1h2v1h-2zm2 1h1v1h-1zm1 1h2v1h-2zm2 1h2v1h-2zm2 1h2v1h-2zm2 1h2v1h-2zm2 1h2v1h-2zm2 1h1v1h-1zm1 1h2v1h-2zm2 1h2v1h-2zm2 1h2v1h-2zm2 1h2v1h-2zm2 1h1v1h-1zm1 1h2v1h-2zm2 1h2v1h-2zm2 1h2v1h-2zm2 1h2v1h-2zM899 132h1v1h-1zm-2 1h2v1h-2zm-2 1h2v1h-2zm-2 1h2v1h-2zm-1 1h1v1h-1zm-2 1h2v1h-2zm-2 1h2v1h-2zm-2 1h2v1h-2zm-1 1h1v1h-1zm-2 1h2v1h-2zm-2 1h2v1h-2zm-2 1h2v1h-2zm-2 1h2v1h-2zm-1 1h1v1h-1zm-2 1h2v1h-2zm-2 1h2v1h-2zm-2 1h2v1h-2zm-1 1h1v1h-1zm-2 1h2v1h-2zm-2 1h2v1h-2zm-2 1h2v1h-2z"/>
<path fill="url(#g21)" d="M937 153v7h1v-7zm1 7v12h1v-12zm1 12v12h1v-12zm1 12v12h1v-12zm1 12v12h1v-12zm1 12v13h1v-13zm1 13v12h1v-12zm1 12v12h1v-12zm1 12v12h1v-12zm1 12v13h1v-13zm1 13v12h1v-12zm1 12v12h1v-12zm1 12v12h1v-12zm1 12v12h1v-12zm1 12v13h1v-13zm1 13v12h1v-12zm1 12v12h1v-12zm1 12v12h1v-12zm1 12v13h1v-13zm1 13v12h1v-12zm1 12v12h1v-12zm1 12v12h1v-12zm1 12v12h1v-12zm1 12v13h1v-13zm1 13v12h1v-12zm1 12v12h1v-12zm1 12v12h1v-12zm1 12v12h1v-12zm1 12v13h1v-13zm1 13v12h1v-12zm1 12v12h1v-12zm1 12v12h1v-12zm1 12v13h1v-13zm1 13v12h1v-12zm1 12v12h1v-12zm1 12v12h1v-12zm1 12v12h1v-12zm1 12v6h1v-6z"/>
<path fill="#f3af3d" d="M937 153h1v1h-1zm-2 1h2v1h-2zm-2 1h2v1h-2zm-2 1h2v1h-2zm-1 1h1v1h-1zm-2 1h2v1h-2zm-2 1h2v1h-2zm-1 1h1v1h-1zm-2 1h2v1h-2zm-2 1h2v1h-2zm-2 1h2v1h-2zm-1 1h1v1h-1zm-2 1h2v1h-2zm-2 1h2v1h-2zm-2 1h2v1h-2zm-1 1h1v1h-1zm-2 1h2v1h-2zm-2 1h2v1h-2zm-1 1h1v1h-1zm-2 1h2v1h-2zm-2 1h2v1h-2zm-2 1h2v1h-2z"/>
<path fill="#9a1f6a" d="M974 605h1v1h-1zm1 1h2v1h-2zm2 1h2v1h-2zm2 1h2v1h-2zm2 1h1v1h-1zm1 1h2v1h-2zm2 1h2v1h-2zm2 1h2v1h-2zm2 1h1v1h-1zm1 1h2v1h-2zm2 1h2v1h-2zm2 1h2v1h-2zm2 1h2v1h-2zm2 1h1v1h-1zm1 1h2v1h-2zm2 1h2v1h-2zm2 1h2v1h-2zm2 1h1v1h-1zm1 1h2v1h-2zm2 1h2v1h-2zm2 1h2v1h-2zM974 605h1v1h-1zm-2 1h2v1h-2zm-2 1h2v1h-2zm-2 1h2v1h-2zm-1 1h1v1h-1zm-2 1h2v1h-2zm-2 1h2v1h-2zm-2 1h2v1h-2zm-1 1h1v1h-1zm-2 1h2v1h-2zm-2 1h2v1h-2zm-2 1h2v1h-2zm-2 1h2v1h-2zm-1 1h1v1h-1zm-2 1h2v1h-2zm-2 1h2v1h-2zm-2 1h2v1h-2zm-1 1h1v1h-1zm-2 1h2v1h-2zm-2 1h2v1h-2zm-2 1h2v1h-2z"/>
<path fill="url(#g22)" d="M1011 621v6h1v-6zm1 -11v11h1v-11zm1 -11v11h1v-11zm1 -11v11h1v-11zm1 -11v11h1v-11zm1 -11v11h1v-11zm1 -11v11h1v-11zm1 -11v11h1v-11zm1 -11v11h1v-11zm1 -11v11h1v-11zm1 -11v11h1v-11zm1 -11v11h1v-11zm1 -11v11h1v-11zm1 -11v11h1v-11zm1 -11v11h1v-11zm1 -11v11h1v-11zm1 -11v11h1v-11zm1 -11v11h1v-11zm1 -12v12h1v-12zm1 -11v11h1v-11zm1 -11v11h1v-11zm1 -11v11h1v-11zm1 -11v11h1v-11zm1 -11v11h1v-11zm1 -11v11h1v-11zm1 -11v11h1v-11zm1 -11v11h1v-11zm1 -11v11h1v-11zm1 -11v11h1v-11zm1 -11v11h1v-11zm1 -11v11h1v-11zm1 -11v11h1v-11zm1 -11v11h1v-11zm1 -11v11h1v-11zm1 -11v11h1v-11zm1 -11v11h1v-11zm1 -11v11h1v-11zm1 -5v5h1v-5z"/>
<path fill="#9a1f6a" d="M1011 626h1v1h-1zm-2 1h2v1h-2zm-2 1h2v1h-2zm-1 1h1v1h-1zm-2 1h2v1h-2zm-2 1h2v1h-2zm-1 1h1v1h-1zm-2 1h2v1h-2zm-2 1h2v1h-2zm-1 1h1v1h-1zm-2 1h2v1h-2zm-2 1h2v1h-2zm-2 1h2v1h-2zm-1 1h1v1h-1zm-2 1h2v1h-2zm-2 1h2v1h-2zm-1 1h1v1h-1zm-2 1h2v1h-2zm-2 1h2v1h-2zm-1 1h1v1h-1zm-2 1h2v1h-2zm-2 1h2v1h-2z"/>
<path fill="#f3af3d" d="M1048 218h1v1h-1zm1 1h2v1h-2zm2 1h2v1h-2zm2 1h2v1h-2zm2 1h1v1h-1zm1 1h2v1h-2zm2 1h2v1h-2zm2 1h2v1h-2zm2 1h1v1h-1zm1 1h2v1h-2zm2 1h2v1h-2zm2 1h2v1h-2zm2 1h2v1h-2zm2 1h1v1h-1zm1 1h2v1h-2zm2 1h2v1h-2zm2 1h2v1h-2zm2 1h1v1h-1zm1 1h2v1h-2zm2 1h2v1h-2zm2 1h2v1h-2zM1048 218h1v1h-1zm-2 1h2v1h-2zm-2 1h2v1h-2zm-2 1h2v1h-2zm-1 1h1v1h-1zm-2 1h2v1h-2zm-2 1h2v1h-2zm-2 1h2v1h-2zm-1 1h1v1h-1zm-2 1h2v1h-2zm-2 1h2v1h-2zm-2 1h2v1h-2zm-2 1h2v1h-2zm-1 1h1v1h-1zm-2 1h2v1h-2zm-2 1h2v1h-2zm-2 1h2v1h-2zm-1 1h1v1h-1zm-2 1h2v1h-2zm-2 1h2v1h-2zm-2 1h2v1h-2z"/>
<path fill="url(#g23)" d="M1085 239v7h1v-7zm1 7v12h1v-12zm1 12v12h1v-12zm1 12v12h1v-12zm1 12v12h1v-12zm1 12v13h1v-13zm1 13v12h1v-12zm1 12v12h1v-12zm1 12v12h1v-12zm1 12v13h1v-13zm1 13v12h1v-12zm1 12v12h1v-12zm1 12v12h1v-12zm1 12v12h1v-12zm1 12v13h1v-13zm1 13v12h1v-12zm1 12v12h1v-12zm1 12v12h1v-12zm1 12v13h1v-13zm1 13v12h1v-12zm1 12v12h1v-12zm1 12v12h1v-12zm1 12v12h1v-12zm1 12v13h1v-13zm1 13v12h1v-12zm1 12v12h1v-12zm1 12v12h1v-12zm1 12v12h1v-12zm1 12v13h1v-13zm1 13v12h1v-12zm1 12v12h1v-12zm1 12v12h1v-12zm1 12v13h1v-13zm1 13v12h1v-12zm1 12v12h1v-12zm1 12v12h1v-12zm1 12v12h1v-12zm1 12v6h1v-6z"/>
<path fill="#f3af3d" d="M1085 239h1v1h-1zm-2 1h2v1h-2zm-2 1h2v1h-2zm-1 1h1v1h-1zm-2 1h2v1h-2zm-2 1h2v1h-2zm-1 1h1v1h-1zm-2 1h2v1h-2zm-2 1h2v1h-2zm-1 1h1v1h-1zm-2 1h2v1h-2zm-2 1h2v1h-2zm-2 1h2v1h-2zm-1 1h1v1h-1zm-2 1h2v1h-2zm-2 1h2v1h-2zm-1 1h1v1h-1zm-2 1h2v1h-2zm-2 1h2v1h-2zm-1 1h1v1h-1zm-2 1h2v1h-2zm-2 1h2v1h-2z"/>
<path fill="#9a1f6a" d="M1122 691h1v1h-1zm1 1h2v1h-2zm2 1h2v1h-2zm2 1h2v1h-2zm2 1h1v1h-1zm1 1h2v1h-2zm2 1h2v1h-2zm2 1h2v1h-2zm2 1h1v1h-1zm1 1h2v1h-2zm2 1h2v1h-2zm2 1h2v1h-2zm2 1h2v1h-2zm2 1h1v1h-1zm1 1h2v1h-2zm2 1h2v1h-2zm2 1h2v1h-2zm2 1h1v1h-1zm1 1h2v1h-2zm2 1h2v1h-2zm2 1h2v1h-2zM1122 691h1v1h-1zm-2 1h2v1h-2zm-2 1h2v1h-2zm-2 1h2v1h-2zm-1 1h1v1h-1zm-2 1h2v1h-2zm-2 1h2v1h-2zm-2 1h2v1h-2zm-1 1h1v1h-1zm-2 1h2v1h-2zm-2 1h2v1h-2zm-2 1h2v1h-2zm-2 1h2v1h-2zm-1 1h1v1h-1zm-2 1h2v1h-2zm-2 1h2v1h-2zm-2 1h2v1h-2zm-1 1h1v1h-1zm-2 1h2v1h-2zm-2 1h2v1h-2zm-2 1h2v1h-2zM1159 712h1v1h-1zm1 1h2v1h-2zm2 1h2v1h-2zm2 1h1v1h-1zm1 1h2v1h-2zm2 1h2v1h-2zm2 1h1v1h-1zm1 1h2v1h-2zm2 1h2v1h-2zm2 1h1v1h-1zm1 1h2v1h-2zm2 1h2v1h-2zm2 1h2v1h-2zm2 1h1v1h-1zm1 1h2v1h-2zm2 1h2v1h-2zm2 1h1v1h-1zm1 1h2v1h-2zm2 1h2v1h-2zm2 1h1v1h-1zm1 1h2v1h-2zm2 1h2v1h-2zM1159 712h1v1h-1zm-2 1h2v1h-2zm-2 1h2v1h-2zm-1 1h1v1h-1zm-2 1h2v1h-2zm-2 1h2v1h-2zm-1 1h1v1h-1zm-2 1h2v1h-2zm-2 1h2v1h-2zm-1 1h1v1h-1zm-2 1h2v1h-2zm-2 1h2v1h-2zm-2 1h2v1h-2zm-1 1h1v1h-1zm-2 1h2v1h-2zm-2 1h2v1h-2zm-1 1h1v1h-1zm-2 1h2v1h-2zm-2 1h2v1h-2zm-1 1h1v1h-1zm-2 1h2v1h-2zm-2 1h2v1h-2zM1196 734h1v1h-1zm1 1h2v1h-2zm2 1h2v1h-2zm2 1h2v1h-2zm2 1h1v1h-1zm1 1h2v1h-2zm2 1h2v1h-2zm2 1h2v1h-2zm2 1h1v1h-1zm1 1h2v1h-2zm2 1h2v1h-2zm2 1h2v1h-2zm2 1h2v1h-2zm2 1h1v1h-1zm1 1h2v1h-2zm2 1h2v1h-2zm2 1h2v1h-2zm2 1h1v1h-1zm1 1h2v1h-2zm2 1h2v1h-2zm2 1h2v1h-2zM1196 734h1v1h-1zm-2 1h2v1h-2zm-2 1h2v1h-2zm-2 1h2v1h-2zm-1 1h1v1h-1zm-2 1h2v1h-2zm-2 1h2v1h-2zm-2 1h2v1h-2zm-1 1h1v1h-1zm-2 1h2v1h-2zm-2 1h2v1h-2zm-2 1h2v1h-2zm-2 1h2v1h-2zm-1 1h1v1h-1zm-2 1h2v1h-2zm-2 1h2v1h-2zm-2 1h2v1h-2zm-1 1h1v1h-1zm-2 1h2v1h-2zm-2 1h2v1h-2zm-2 1h2v1h-2zM1233 755h1v1h-1zm1 1h2v1h-2zm2 1h2v1h-2zm2 1h2v1h-2zm2 1h2v1h-2zm2 1h1v1h-1zm1 1h2v1h-2zm2 1h2v1h-2zm2 1h2v1h-2zm2 1h2v1h-2zm2 1h2v1h-2zm2 1h1v1h-1zm1 1h2v1h-2zm2 1h2v1h-2zm2 1h2v1h-2zm2 1h2v1h-2zm2 1h1v1h-1zm1 1h2v1h-2zm2 1h2v1h-2zm2 1h2v1h-2zm2 1h2v1h-2zM1233 755h1v1h-1zm-2 1h2v1h-2zm-2 1h2v1h-2zm-2 1h2v1h-2zm-1 1h1v1h-1zm-2 1h2v1h-2zm-2 1h2v1h-2zm-2 1h2v1h-2zm-1 1h1v1h-1zm-2 1h2v1h-2zm-2 1h2v1h-2zm-2 1h2v1h-2zm-2 1h2v1h-2zm-1 1h1v1h-1zm-2 1h2v1h-2zm-2 1h2v1h-2zm-2 1h2v1h-2zm-1 1h1v1h-1zm-2 1h2v1h-2zm-2 1h2v1h-2zm-2 1h2v1h-2zM1271 776h1v1h-1zm1 1h2v1h-2zm2 1h2v1h-2zm2 1h1v1h-1zm1 1h2v1h-2zm2 1h2v1h-2zm2 1h1v1h-1zm1 1h2v1h-2zm2 1h2v1h-2zm2 1h1v1h-1zm1 1h2v1h-2zm2 1h2v1h-2zm2 1h2v1h-2zm2 1h1v1h-1zm1 1h2v1h-2zm2 1h2v1h-2zm2 1h1v1h-1zm1 1h2v1h-2zm2 1h2v1h-2zm2 1h1v1h-1zm1 1h2v1h-2zm2 1h2v1h-2zM1271 776h1v1h-1zm-2 1h2v1h-2zm-2 1h2v1h-2zm-2 1h2v1h-2zm-1 1h1v1h-1zm-2 1h2v1h-2zm-2 1h2v1h-2zm-1 1h1v1h-1zm-2 1h2v1h-2zm-2 1h2v1h-2zm-2 1h2v1h-2zm-1 1h1v1h-1zm-2 1h2v1h-2zm-2 1h2v1h-2zm-2 1h2v1h-2zm-1 1h1v1h-1zm-2 1h2v1h-2zm-2 1h2v1h-2zm-1 1h1v1h-1zm-2 1h2v1h-2zm-2 1h2v1h-2zm-2 1h2v1h-2zM1308 798h1v1h-1zm1 1h2v1h-2zm2 1h2v1h-2zm2 1h2v1h-2zm2 1h1v1h-1zm1 1h2v1h-2zm2 1h2v1h-2zm2 1h2v1h-2zm2 1h1v1h-1zm1 1h2v1h-2zm2 1h2v1h-2zm2 1h2v1h-2zm2 1h2v1h-2zm2 1h1v1h-1zm1 1h2v1h-2zm2 1h2v1h-2zm2 1h2v1h-2zm2 1h1v1h-1zm1 1h2v1h-2zm2 1h2v1h-2zm2 1h2v1h-2zM1308 798h1v1h-1zm-2 1h2v1h-2zm-2 1h2v1h-2zm-2 1h2v1h-2zm-1 1h1v1h-1zm-2 1h2v1h-2zm-2 1h2v1h-2zm-2 1h2v1h-2zm-1 1h1v1h-1zm-2 1h2v1h-2zm-2 1h2v1h-2zm-2 1h2v1h-2zm-2 1h2v1h-2zm-1 1h1v1h-1zm-2 1h2v1h-2zm-2 1h2v1h-2zm-2 1h2v1h-2zm-1 1h1v1h-1zm-2 1h2v1h-2zm-2 1h2v1h-2zm-2 1h2v1h-2z"/>
<path fill="url(#g24)" d="M1345 814v6h1v-6zm1 -11v11h1v-11zm1 -11v11h1v-11zm1 -11v11h1v-11zm1 -11v11h1v-11zm1 -11v11h1v-11zm1 -11v11h1v-11zm1 -11v11h1v-11zm1 -11v11h1v-11zm1 -11v11h1v-11zm1 -11v11h1v-11zm1 -11v11h1v-11zm1 -11v11h1v-11zm1 -11v11h1v-11zm1 -11v11h1v-11zm1 -11v11h1v-11zm1 -11v11h1v-11zm1 -11v11h1v-11zm1 -11v11h1v-11zm1 -11v11h1v-11zm1 -11v11h1v-11zm1 -11v11h1v-11zm1 -11v11h1v-11zm1 -11v11h1v-11zm1 -11v11h1v-11zm1 -11v11h1v-11zm1 -11v11h1v-11zm1 -11v11h1v-11zm1 -11v11h1v-11zm1 -11v11h1v-11zm1 -11v11h1v-11zm1 -11v11h1v-11zm1 -11v11h1v-11zm1 -11v11h1v-11zm1 -11v11h1v-11zm1 -11v11h1v-11zm1 -11v11h1v-11zm1 -5v5h1v-5z"/>
<path fill="#9a1f6a" d="M1345 819h1v1h-1zm-2 1h2v1h-2zm-2 1h2v1h-2zm-1 1h1v1h-1zm-2 1h2v1h-2zm-2 1h2v1h-2zm-1 1h1v1h-1zm-2 1h2v1h-2zm-2 1h2v1h-2zm-1 1h1v1h-1zm-2 1h2v1h-2zm-2 1h2v1h-2zm-2 1h2v1h-2zm-1 1h1v1h-1zm-2 1h2v1h-2zm-2 1h2v1h-2zm-1 1h1v1h-1zm-2 1h2v1h-2zm-2 1h2v1h-2zm-1 1h1v1h-1zm-2 1h2v1h-2zm-2 1h2v1h-2z"/>
<path fill="#f3af3d" d="M1382 412h1v1h-1zm1 1h2v1h-2zm2 1h2v1h-2zm2 1h2v1h-2zm2 1h2v1h-2zm2 1h1v1h-1zm1 1h2v1h-2zm2 1h2v1h-2zm2 1h2v1h-2zm2 1h2v1h-2zm2 1h2v1h-2zm2 1h1v1h-1zm1 1h2v1h-2zm2 1h2v1h-2zm2 1h2v1h-2zm2 1h2v1h-2zm2 1h1v1h-1zm1 1h2v1h-2zm2 1h2v1h-2zm2 1h2v1h-2zm2 1h2v1h-2zM1382 412h1v1h-1zm-2 1h2v1h-2zm-2 1h2v1h-2zm-2 1h2v1h-2zm-1 1h1v1h-1zm-2 1h2v1h-2zm-2 1h2v1h-2zm-2 1h2v1h-2zm-1 1h1v1h-1zm-2 1h2v1h-2zm-2 1h2v1h-2zm-2 1h2v1h-2zm-2 1h2v1h-2zm-1 1h1v1h-1zm-2 1h2v1h-2zm-2 1h2v1h-2zm-2 1h2v1h-2zm-1 1h1v1h-1zm-2 1h2v1h-2zm-2 1h2v1h-2zm-2 1h2v1h-2z"/>
<path fill="url(#g25)" d="M1420 433v7h1v-7zm1 7v12h1v-12zm1 12v12h1v-12zm1 12v12h1v-12zm1 12v12h1v-12zm1 12v13h1v-13zm1 13v12h1v-12zm1 12v12h1v-12zm1 12v12h1v-12zm1 12v12h1v-12zm1 12v12h1v-12zm1 12v13h1v-13zm1 13v12h1v-12zm1 12v12h1v-12zm1 12v12h1v-12zm1 12v12h1v-12zm1 12v13h1v-13zm1 13v12h1v-12zm1 12v12h1v-12zm1 12v12h1v-12zm1 12v12h1v-12zm1 12v13h1v-13zm1 13v12h1v-12zm1 12v12h1v-12zm1 12v12h1v-12zm1 12v12h1v-12zm1 12v13h1v-13zm1 13v12h1v-12zm1 12v12h1v-12zm1 12v12h1v-12zm1 12v12h1v-12zm1 12v12h1v-12zm1 12v13h1v-13zm1 13v12h1v-12zm1 12v12h1v-12zm1 12v12h1v-12zm1 12v12h1v-12zm1 12v6h1v-6z"/>
<path fill="#f3af3d" d="M1420 433h1v1h-1zm-2 1h2v1h-2zm-2 1h2v1h-2zm-2 1h2v1h-2zm-1 1h1v1h-1zm-2 1h2v1h-2zm-2 1h2v1h-2zm-1 1h1v1h-1zm-2 1h2v1h-2zm-2 1h2v1h-2zm-2 1h2v1h-2zm-1 1h1v1h-1zm-2 1h2v1h-2zm-2 1h2v1h-2zm-2 1h2v1h-2zm-1 1h1v1h-1zm-2 1h2v1h-2zm-2 1h2v1h-2zm-1 1h1v1h-1zm-2 1h2v1h-2zm-2 1h2v1h-2zm-2 1h2v1h-2z"/>
<path fill="#9a1f6a" d="M1457 884h1v1h-1zm1 1h2v1h-2zm2 1h2v1h-2zm2 1h2v1h-2zm2 1h1v1h-1zm1 1h2v1h-2zm2 1h2v1h-2zm2 1h2v1h-2zm2 1h1v1h-1zm1 1h2v1h-2zm2 1h2v1h-2zm2 1h2v1h-2zm2 1h2v1h-2zm2 1h1v1h-1zm1 1h2v1h-2zm2 1h2v1h-2zm2 1h2v1h-2zm2 1h1v1h-1zm1 1h2v1h-2zm2 1h2v1h-2zm2 1h2v1h-2zM1457 884h1v1h-1zm-2 1h2v1h-2zm-2 1h2v1h-2zm-2 1h2v1h-2zm-1 1h1v1h-1zm-2 1h2v1h-2zm-2 1h2v1h-2zm-2 1h2v1h-2zm-1 1h1v1h-1zm-2 1h2v1h-2zm-2 1h2v1h-2zm-2 1h2v1h-2zm-2 1h2v1h-2zm-1 1h1v1h-1zm-2 1h2v1h-2zm-2 1h2v1h-2zm-2 1h2v1h-2zm-1 1h1v1h-1zm-2 1h2v1h-2zm-2 1h2v1h-2zm-2 1h2v1h-2zM1494 905h1v1h-1zm-2 1h2v1h-2zm-2 1h2v1h-2zm-1 1h1v1h-1zm-2 1h2v1h-2zm-2 1h2v1h-2zm-1 1h1v1h-1zm-2 1h2v1h-2zm-2 1h2v1h-2zm-1 1h1v1h-1zm-2 1h2v1h-2zm-2 1h2v1h-2zm-2 1h2v1h-2zm-1 1h1v1h-1zm-2 1h2v1h-2zm-2 1h2v1h-2zm-1 1h1v1h-1zm-2 1h2v1h-2zm-2 1h2v1h-2zm-1 1h1v1h-1zm-2 1h2v1h-2zm-2 1h2v1h-2zM788 540h1v1h-1zm1 1h2v1h-2zm2 1h2v1h-2zm2 1h1v1h-1zm1 1h2v1h-2zm2 1h2v1h-2zm2 1h1v1h-1zm1 1h2v1h-2zm2 1h2v1h-2zm2 1h1v1h-1zm1 1h2v1h-2zm2 1h2v1h-2zm2 1h2v1h-2zm2 1h1v1h-1zm1 1h2v1h-2zm2 1h2v1h-2zm2 1h1v1h-1zm1 1h2v1h-2zm2 1h2v1h-2zm2 1h1v1h-1zm1 1h2v1h-2zm2 1h2v1h-2zM788 540h1v1h-1zm-2 1h2v1h-2zm-2 1h2v1h-2zm-2 1h2v1h-2zm-1 1h1v1h-1zm-2 1h2v1h-2zm-2 1h2v1h-2zm-1 1h1v1h-1zm-2 1h2v1h-2zm-2 1h2v1h-2zm-2 1h2v1h-2zm-1 1h1v1h-1zm-2 1h2v1h-2zm-2 1h2v1h-2zm-2 1h2v1h-2zm-1 1h1v1h-1zm-2 1h2v1h-2zm-2 1h2v1h-2zm-1 1h1v1h-1zm-2 1h2v1h-2zm-2 1h2v1h-2zm-2 1h2v1h-2z"/>
<path fill="url(#g26)" d="M825 557v6h1v-6zm1 -11v11h1v-11zm1 -11v11h1v-11zm1 -11v11h1v-11zm1 -11v11h1v-11zm1 -11v11h1v-11zm1 -11v11h1v-11zm1 -11v11h1v-11zm1 -11v11h1v-11zm1 -12v12h1v-12zm1 -11v11h1v-11zm1 -11v11h1v-11zm1 -11v11h1v-11zm1 -11v11h1v-11zm1 -11v11h1v-11zm1 -11v11h1v-11zm1 -11v11h1v-11zm1 -11v11h1v-11zm1 -11v11h1v-11zm1 -11v11h1v-11zm1 -11v11h1v-11zm1 -11v11h1v-11zm1 -11v11h1v-11zm1 -11v11h1v-11zm1 -11v11h1v-11zm1 -11v11h1v-11zm1 -11v11h1v-11zm1 -11v11h1v-11zm1 -12v12h1v-12zm1 -11v11h1v-11zm1 -11v11h1v-11zm1 -11v11h1v-11zm1 -11v11h1v-11zm1 -11v11h1v-11zm1 -11v11h1v-11zm1 -11v11h1v-11zm1 -11v11h1v-11zm1 -5v5h1v-5z"/>
<path fill="#9a1f6a" d="M825 562h1v1h-1zm-2 1h2v1h-2zm-2 1h2v1h-2zm-2 1h2v1h-2zm-1 1h1v1h-1zm-2 1h2v1h-2zm-2 1h2v1h-2zm-2 1h2v1h-2zm-1 1h1v1h-1zm-2 1h2v1h-2zm-2 1h2v1h-2zm-2 1h2v1h-2zm-2 1h2v1h-2zm-1 1h1v1h-1zm-2 1h2v1h-2zm-2 1h2v1h-2zm-2 1h2v1h-2zm-1 1h1v1h-1zm-2 1h2v1h-2zm-2 1h2v1h-2zm-2 1h2v1h-2z"/>
<path fill="#f3af3d" d="M862 153h1v1h-1zm1 1h2v1h-2zm2 1h2v1h-2zm2 1h1v1h-1zm1 1h2v1h-2zm2 1h2v1h-2zm2 1h1v1h-1zm1 1h2v1h-2zm2 1h2v1h-2zm2 1h1v1h-1zm1 1h2v1h-2zm2 1h2v1h-2zm2 1h2v1h-2zm2 1h1v1h-1zm1 1h2v1h-2zm2 1h2v1h-2zm2 1h1v1h-1zm1 1h2v1h-2zm2 1h2v1h-2zm2 1h1v1h-1zm1 1h2v1h-2zm2 1h2v1h-2zM862 153h1v1h-1zm-2 1h2v1h-2zm-2 1h2v1h-2zm-1 1h1v1h-1zm-2 1h2v1h-2zm-2 1h2v1h-2zm-1 1h1v1h-1zm-2 1h2v1h-2zm-2 1h2v1h-2zm-1 1h1v1h-1zm-2 1h2v1h-2zm-2 1h2v1h-2zm-2 1h2v1h-2zm-1 1h1v1h-1zm-2 1h2v1h-2zm-2 1h2v1h-2zm-1 1h1v1h-1zm-2 1h2v1h-2zm-2 1h2v1h-2zm-1 1h1v1h-1zm-2 1h2v1h-2zm-2 1h2v1h-2z"/>
<path fill="url(#g27)" d="M899 175v6h1v-6zm1 6v12h1v-12zm1 12v12h1v-12zm1 12v12h1v-12zm1 12v12h1v-12zm1 12v12h1v-12zm1 12v12h1v-12zm1 12v12h1v-12zm1 12v11h1v-11zm1 11v12h1v-12zm1 12v12h1v-12zm1 12v12h1v-12zm1 12v12h1v-12zm1 12v12h1v-12zm1 12v12h1v-12zm1 12v11h1v-11zm1 11v12h1v-12zm1 12v12h1v-12zm1 12v12h1v-12zm1 12v12h1v-12zm1 12v12h1v-12zm1 12v12h1v-12zm1 12v12h1v-12zm1 12v11h1v-11zm1 11v12h1v-12zm1 12v12h1v-12zm1 12v12h1v-12zm1 12v12h1v-12zm1 12v12h1v-12zm1 12v12h1v-12zm1 12v11h1v-11zm1 11v12h1v-12zm1 12v12h1v-12zm1 12v12h1v-12zm1 12v12h1v-12zm1 12v12h1v-12zm1 12v12h1v-12zm1 12v12h1v-12zm1 12v5h1v-5z"/>
<path fill="#f3af3d" d="M899 175h1v1h-1zm-2 1h2v1h-2zm-2 1h2v1h-2zm-2 1h2v1h-2zm-1 1h1v1h-1zm-2 1h2v1h-2zm-2 1h2v1h-2zm-2 1h2v1h-2zm-1 1h1v1h-1zm-2 1h2v1h-2zm-2 1h2v1h-2zm-2 1h2v1h-2zm-2 1h2v1h-2zm-1 1h1v1h-1zm-2 1h2v1h-2zm-2 1h2v1h-2zm-2 1h2v1h-2zm-1 1h1v1h-1zm-2 1h2v1h-2zm-2 1h2v1h-2zm-2 1h2v1h-2z"/>
<path fill="#9a1f6a" d="M937 626h1v1h-1zm1 1h2v1h-2zm2 1h2v1h-2zm2 1h1v1h-1zm1 1h2v1h-2zm2 1h2v1h-2zm2 1h1v1h-1zm1 1h2v1h-2zm2 1h2v1h-2zm2 1h1v1h-1zm1 1h2v1h-2zm2 1h2v1h-2zm2 1h2v1h-2zm2 1h1v1h-1zm1 1h2v1h-2zm2 1h2v1h-2zm2 1h1v1h-1zm1 1h2v1h-2zm2 1h2v1h-2zm2 1h1v1h-1zm1 1h2v1h-2zm2 1h2v1h-2z"/>
<path fill="url(#g28)" d="M899 219v5h1v-5zm1 5v11h1v-11zm1 11v10h1v-10zm1 10v11h1v-11zm1 11v11h1v-11zm1 11v11h1v-11zm1 11v10h1v-10zm1 10v11h1v-11zm1 11v11h1v-11zm1 11v10h1v-10zm1 10v11h1v-11zm1 11v11h1v-11zm1 11v11h1v-11zm1 11v10h1v-10zm1 10v11h1v-11zm1 11v11h1v-11zm1 11v11h1v-11zm1 11v10h1v-10zm1 10v11h1v-11zm1 11v11h1v-11zm1 11v11h1v-11zm1 11v10h1v-10zm1 10v11h1v-11zm1 11v11h1v-11zm1 11v11h1v-11zm1 11v10h1v-10zm1 10v11h1v-11zm1 11v11h1v-11zm1 11v10h1v-10zm1 10v11h1v-11zm1 11v11h1v-11zm1 11v11h1v-11zm1 11v10h1v-10zm1 10v11h1v-11zm1 11v11h1v-11zm1 11v11h1v-11zm1 11v10h1v-10zm1 10v11h1v-11zm1 11v6h1v-6z"/>
<path fill="url(#g29)" d="M974 643v6h1v-6zm1 -11v11h1v-11zm1 -11v11h1v-11zm1 -11v11h1v-11zm1 -11v11h1v-11zm1 -11v11h1v-11zm1 -11v11h1v-11zm1 -11v11h1v-11zm1 -11v11h1v-11zm1 -12v12h1v-12zm1 -11v11h1v-11zm1 -11v11h1v-11zm1 -11v11h1v-11zm1 -11v11h1v-11zm1 -11v11h1v-11zm1 -11v11h1v-11zm1 -11v11h1v-11zm1 -11v11h1v-11zm1 -11v11h1v-11zm1 -11v11h1v-11zm1 -11v11h1v-11zm1 -11v11h1v-11zm1 -11v11h1v-11zm1 -11v11h1v-11zm1 -11v11h1v-11zm1 -11v11h1v-11zm1 -11v11h1v-11zm1 -11v11h1v-11zm1 -12v12h1v-12zm1 -11v11h1v-11zm1 -11v11h1v-11zm1 -11v11h1v-11zm1 -11v11h1v-11zm1 -11v11h1v-11zm1 -11v11h1v-11zm1 -11v11h1v-11zm1 -11v11h1v-11zm1 -5v5h1v-5z"/>
<path fill="url(#g30)" d="M937 240v5h1v-5zm1 5v11h1v-11zm1 11v11h1v-11zm1 11v11h1v-11zm1 11v11h1v-11zm1 11v11h1v-11zm1 11v11h1v-11zm1 11v11h1v-11zm1 11v11h1v-11zm1 11v12h1v-12zm1 12v11h1v-11zm1 11v11h1v-11zm1 11v11h1v-11zm1 11v11h1v-11zm1 11v11h1v-11zm1 11v11h1v-11zm1 11v11h1v-11zm1 11v11h1v-11zm1 11v11h1v-11zm1 11v11h1v-11zm1 11v11h1v-11zm1 11v11h1v-11zm1 11v11h1v-11zm1 11v11h1v-11zm1 11v11h1v-11zm1 11v11h1v-11zm1 11v11h1v-11zm1 11v11h1v-11zm1 11v12h1v-12zm1 12v11h1v-11zm1 11v11h1v-11zm1 11v11h1v-11zm1 11v11h1v-11zm1 11v11h1v-11zm1 11v11h1v-11zm1 11v11h1v-11zm1 11v11h1v-11zm1 11v6h1v-6z"/>
<path fill="#f3af3d" d="M1011 239h1v1h-1zm1 1h2v1h-2zm2 1h2v1h-2zm2 1h1v1h-1zm1 1h2v1h-2zm2 1h2v1h-2zm2 1h1v1h-1zm1 1h2v1h-2zm2 1h2v1h-2zm2 1h1v1h-1zm1 1h2v1h-2zm2 1h2v1h-2zm2 1h2v1h-2zm2 1h1v1h-1zm1 1h2v1h-2zm2 1h2v1h-2zm2 1h1v1h-1zm1 1h2v1h-2zm2 1h2v1h-2zm2 1h1v1h-1zm1 1h2v1h-2zm2 1h2v1h-2zM1011 239h1v1h-1zm-2 1h2v1h-2zm-2 1h2v1h-2zm-1 1h1v1h-1zm-2 1h2v1h-2zm-2 1h2v1h-2zm-1 1h1v1h-1zm-2 1h2v1h-2zm-2 1h2v1h-2zm-1 1h1v1h-1zm-2 1h2v1h-2zm-2 1h2v1h-2zm-2 1h2v1h-2zm-1 1h1v1h-1zm-2 1h2v1h-2zm-2 1h2v1h-2zm-1 1h1v1h-1zm-2 1h2v1h-2zm-2 1h2v1h-2zm-1 1h1v1h-1zm-2 1h2v1h-2zm-2 1h2v1h-2z"/>
<path fill="url(#g31)" d="M1048 261v7h1v-7zm1 7v12h1v-12zm1 12v12h1v-12zm1 12v12h1v-12zm1 12v12h1v-12zm1 12v13h1v-13zm1 13v12h1v-12zm1 12v12h1v-12zm1 12v12h1v-12zm1 12v12h1v-12zm1 12v12h1v-12zm1 12v13h1v-13zm1 13v12h1v-12zm1 12v12h1v-12zm1 12v12h1v-12zm1 12v12h1v-12zm1 12v13h1v-13zm1 13v12h1v-12zm1 12v12h1v-12zm1 12v12h1v-12zm1 12v12h1v-12zm1 12v13h1v-13zm1 13v12h1v-12zm1 12v12h1v-12zm1 12v12h1v-12zm1 12v12h1v-12zm1 12v13h1v-13zm1 13v12h1v-12zm1 12v12h1v-12zm1 12v12h1v-12zm1 12v12h1v-12zm1 12v12h1v-12zm1 12v13h1v-13zm1 13v12h1v-12zm1 12v12h1v-12zm1 12v12h1v-12zm1 12v12h1v-12zm1 12v6h1v-6z"/>
<path fill="#f3af3d" d="M1048 261h1v1h-1zm-2 1h2v1h-2zm-2 1h2v1h-2zm-2 1h2v1h-2zm-1 1h1v1h-1zm-2 1h2v1h-2zm-2 1h2v1h-2zm-2 1h2v1h-2zm-1 1h1v1h-1zm-2 1h2v1h-2zm-2 1h2v1h-2zm-2 1h2v1h-2zm-2 1h2v1h-2zm-1 1h1v1h-1zm-2 1h2v1h-2zm-2 1h2v1h-2zm-2 1h2v1h-2zm-1 1h1v1h-1zm-2 1h2v1h-2zm-2 1h2v1h-2zm-2 1h2v1h-2z"/>
<path fill="#9a1f6a" d="M1085 712h1v1h-1zm1 1h2v1h-2zm2 1h2v1h-2zm2 1h1v1h-1zm1 1h2v1h-2zm2 1h2v1h-2zm2 1h1v1h-1zm1 1h2v1h-2zm2 1h2v1h-2zm2 1h1v1h-1zm1 1h2v1h-2zm2 1h2v1h-2zm2 1h2v1h-2zm2 1h1v1h-1zm1 1h2v1h-2zm2 1h2v1h-2zm2 1h1v1h-1zm1 1h2v1h-2zm2 1h2v1h-2zm2 1h1v1h-1zm1 1h2v1h-2zm2 1h2v1h-2zM1085 712h1v1h-1zm-2 1h2v1h-2zm-2 1h2v1h-2zm-1 1h1v1h-1zm-2 1h2v1h-2zm-2 1h2v1h-2zm-1 1h1v1h-1zm-2 1h2v1h-2zm-2 1h2v1h-2zm-1 1h1v1h-1zm-2 1h2v1h-2zm-2 1h2v1h-2zm-2 1h2v1h-2zm-1 1h1v1h-1zm-2 1h2v1h-2zm-2 1h2v1h-2zm-1 1h1v1h-1zm-2 1h2v1h-2zm-2 1h2v1h-2zm-1 1h1v1h-1zm-2 1h2v1h-2zm-2 1h2v1h-2zM1122 734h1v1h-1zm1 1h2v1h-2zm2 1h2v1h-2zm2 1h2v1h-2zm2 1h1v1h-1zm1 1h2v1h-2zm2 1h2v1h-2zm2 1h2v1h-2zm2 1h1v1h-1zm1 1h2v1h-2zm2 1h2v1h-2zm2 1h2v1h-2zm2 1h2v1h-2zm2 1h1v1h-1zm1 1h2v1h-2zm2 1h2v1h-2zm2 1h2v1h-2zm2 1h1v1h-1zm1 1h2v1h-2zm2 1h2v1h-2zm2 1h2v1h-2zM1122 734h1v1h-1zm-2 1h2v1h-2zm-2 1h2v1h-2zm-2 1h2v1h-2zm-1 1h1v1h-1zm-2 1h2v1h-2zm-2 1h2v1h-2zm-2 1h2v1h-2zm-1 1h1v1h-1zm-2 1h2v1h-2zm-2 1h2v1h-2zm-2 1h2v1h-2zm-2 1h2v1h-2zm-1 1h1v1h-1zm-2 1h2v1h-2zm-2 1h2v1h-2zm-2 1h2v1h-2zm-1 1h1v1h-1zm-2 1h2v1h-2zm-2 1h2v1h-2zm-2 1h2v1h-2zM1159 755h1v1h-1zm1 1h2v1h-2zm2 1h2v1h-2zm2 1h2v1h-2zm2 1h1v1h-1zm1 1h2v1h-2zm2 1h2v1h-2zm2 1h2v1h-2zm2 1h1v1h-1zm1 1h2v1h-2zm2 1h2v1h-2zm2 1h2v1h-2zm2 1h2v1h-2zm2 1h1v1h-1zm1 1h2v1h-2zm2 1h2v1h-2zm2 1h2v1h-2zm2 1h1v1h-1zm1 1h2v1h-2zm2 1h2v1h-2zm2 1h2v1h-2zM1159 755h1v1h-1zm-2 1h2v1h-2zm-2 1h2v1h-2zm-2 1h2v1h-2zm-1 1h1v1h-1zm-2 1h2v1h-2zm-2 1h2v1h-2zm-2 1h2v1h-2zm-1 1h1v1h-1zm-2 1h2v1h-2zm-2 1h2v1h-2zm-2 1h2v1h-2zm-2 1h2v1h-2zm-1 1h1v1h-1zm-2 1h2v1h-2zm-2 1h2v1h-2zm-2 1h2v1h-2zm-1 1h1v1h-1zm-2 1h2v1h-2zm-2 1h2v1h-2zm-2 1h2v1h-2zM1196 776h1v1h-1zm1 1h2v1h-2zm2 1h2v1h-2zm2 1h1v1h-1zm1 1h2v1h-2zm2 1h2v1h-2zm2 1h1v1h-1zm1 1h2v1h-2zm2 1h2v1h-2zm2 1h1v1h-1zm1 1h2v1h-2zm2 1h2v1h-2zm2 1h2v1h-2zm2 1h1v1h-1zm1 1h2v1h-2zm2 1h2v1h-2zm2 1h1v1h-1zm1 1h2v1h-2zm2 1h2v1h-2zm2 1h1v1h-1zm1 1h2v1h-2zm2 1h2v1h-2zM1196 776h1v1h-1zm-2 1h2v1h-2zm-2 1h2v1h-2zm-1 1h1v1h-1zm-2 1h2v1h-2zm-2 1h2v1h-2zm-1 1h1v1h-1zm-2 1h2v1h-2zm-2 1h2v1h-2zm-1 1h1v1h-1zm-2 1h2v1h-2zm-2 1h2v1h-2zm-2 1h2v1h-2zm-1 1h1v1h-1zm-2 1h2v1h-2zm-2 1h2v1h-2zm-1 1h1v1h-1zm-2 1h2v1h-2zm-2 1h2v1h-2zm-1 1h1v1h-1zm-2 1h2v1h-2zm-2 1h2v1h-2zM1233 798h1v1h-1zm1 1h2v1h-2zm2 1h2v1h-2zm2 1h2v1h-2zm2 1h2v1h-2zm2 1h1v1h-1zm1 1h2v1h-2zm2 1h2v1h-2zm2 1h2v1h-2zm2 1h2v1h-2zm2 1h2v1h-2zm2 1h1v1h-1zm1 1h2v1h-2zm2 1h2v1h-2zm2 1h2v1h-2zm2 1h2v1h-2zm2 1h1v1h-1zm1 1h2v1h-2zm2 1h2v1h-2zm2 1h2v1h-2zm2 1h2v1h-2z"/>
<path fill="url(#g32)" d="M1196 391v5h1v-5zm1 5v11h1v-11zm1 11v11h1v-11zm1 11v11h1v-11zm1 11v11h1v-11zm1 11v11h1v-11zm1 11v11h1v-11zm1 11v11h1v-11zm1 11v11h1v-11zm1 11v11h1v-11zm1 11v11h1v-11zm1 11v11h1v-11zm1 11v11h1v-11zm1 11v11h1v-11zm1 11v11h1v-11zm1 11v11h1v-11zm1 11v11h1v-11zm1 11v11h1v-11zm1 11v11h1v-11zm1 11v12h1v-12zm1 12v11h1v-11zm1 11v11h1v-11zm1 11v11h1v-11zm1 11v11h1v-11zm1 11v11h1v-11zm1 11v11h1v-11zm1 11v11h1v-11zm1 11v11h1v-11zm1 11v11h1v-11zm1 11v11h1v-11zm1 11v11h1v-11zm1 11v11h1v-11zm1 11v11h1v-11zm1 11v11h1v-11zm1 11v11h1v-11zm1 11v11h1v-11zm1 11v11h1v-11zm1 11v6h1v-6z"/>
<path fill="#9a1f6a" d="M1271 819h1v1h-1zm1 1h2v1h-2zm2 1h2v1h-2zm2 1h1v1h-1zm1 1h2v1h-2zm2 1h2v1h-2zm2 1h1v1h-1zm1 1h2v1h-2zm2 1h2v1h-2zm2 1h1v1h-1zm1 1h2v1h-2zm2 1h2v1h-2zm2 1h2v1h-2zm2 1h1v1h-1zm1 1h2v1h-2zm2 1h2v1h-2zm2 1h1v1h-1zm1 1h2v1h-2zm2 1h2v1h-2zm2 1h1v1h-1zm1 1h2v1h-2zm2 1h2v1h-2z"/>
<path fill="url(#g33)" d="M1233 413v5h1v-5zm1 5v11h1v-11zm1 11v10h1v-10zm1 10v11h1v-11zm1 11v11h1v-11zm1 11v10h1v-10zm1 10v11h1v-11zm1 11v11h1v-11zm1 11v11h1v-11zm1 11v10h1v-10zm1 10v11h1v-11zm1 11v11h1v-11zm1 11v10h1v-10zm1 10v11h1v-11zm1 11v11h1v-11zm1 11v11h1v-11zm1 11v10h1v-10zm1 10v11h1v-11zm1 11v11h1v-11zm1 11v10h1v-10zm1 10v11h1v-11zm1 11v11h1v-11zm1 11v10h1v-10zm1 10v11h1v-11zm1 11v11h1v-11zm1 11v11h1v-11zm1 11v10h1v-10zm1 10v11h1v-11zm1 11v11h1v-11zm1 11v10h1v-10zm1 10v11h1v-11zm1 11v11h1v-11zm1 11v11h1v-11zm1 11v10h1v-10zm1 10v11h1v-11zm1 11v11h1v-11zm1 11v10h1v-10zm1 10v11h1v-11zm1 11v6h1v-6z"/>
<path fill="url(#g34)" d="M1308 836v6h1v-6zm1 -11v11h1v-11zm1 -11v11h1v-11zm1 -11v11h1v-11zm1 -11v11h1v-11zm1 -11v11h1v-11zm1 -11v11h1v-11zm1 -11v11h1v-11zm1 -11v11h1v-11zm1 -11v11h1v-11zm1 -11v11h1v-11zm1 -11v11h1v-11zm1 -11v11h1v-11zm1 -11v11h1v-11zm1 -11v11h1v-11zm1 -11v11h1v-11zm1 -11v11h1v-11zm1 -11v11h1v-11zm1 -12v12h1v-12zm1 -11v11h1v-11zm1 -11v11h1v-11zm1 -11v11h1v-11zm1 -11v11h1v-11zm1 -11v11h1v-11zm1 -11v11h1v-11zm1 -11v11h1v-11zm1 -11v11h1v-11zm1 -11v11h1v-11zm1 -11v11h1v-11zm1 -11v11h1v-11zm1 -11v11h1v-11zm1 -11v11h1v-11zm1 -11v11h1v-11zm1 -11v11h1v-11zm1 -11v11h1v-11zm1 -11v11h1v-11zm1 -11v11h1v-11zm1 -5v5h1v-5z"/>
<path fill="url(#g35)" d="M1271 434v5h1v-5zm1 5v11h1v-11zm1 11v11h1v-11zm1 11v11h1v-11zm1 11v11h1v-11zm1 11v11h1v-11zm1 11v11h1v-11zm1 11v11h1v-11zm1 11v11h1v-11zm1 11v11h1v-11zm1 11v11h1v-11zm1 11v11h1v-11zm1 11v11h1v-11zm1 11v11h1v-11zm1 11v11h1v-11zm1 11v11h1v-11zm1 11v11h1v-11zm1 11v11h1v-11zm1 11v11h1v-11zm1 11v12h1v-12zm1 12v11h1v-11zm1 11v11h1v-11zm1 11v11h1v-11zm1 11v11h1v-11zm1 11v11h1v-11zm1 11v11h1v-11zm1 11v11h1v-11zm1 11v11h1v-11zm1 11v11h1v-11zm1 11v11h1v-11zm1 11v11h1v-11zm1 11v11h1v-11zm1 11v11h1v-11zm1 11v11h1v-11zm1 11v11h1v-11zm1 11v11h1v-11zm1 11v11h1v-11zm1 11v6h1v-6z"/>
<path fill="#f3af3d" d="M1345 433h1v1h-1zm1 1h2v1h-2zm2 1h2v1h-2zm2 1h1v1h-1zm1 1h2v1h-2zm2 1h2v1h-2zm2 1h1v1h-1zm1 1h2v1h-2zm2 1h2v1h-2zm2 1h1v1h-1zm1 1h2v1h-2zm2 1h2v1h-2zm2 1h2v1h-2zm2 1h1v1h-1zm1 1h2v1h-2zm2 1h2v1h-2zm2 1h1v1h-1zm1 1h2v1h-2zm2 1h2v1h-2zm2 1h1v1h-1zm1 1h2v1h-2zm2 1h2v1h-2zM1345 433h1v1h-1zm-2 1h2v1h-2zm-2 1h2v1h-2zm-1 1h1v1h-1zm-2 1h2v1h-2zm-2 1h2v1h-2zm-1 1h1v1h-1zm-2 1h2v1h-2zm-2 1h2v1h-2zm-1 1h1v1h-1zm-2 1h2v1h-2zm-2 1h2v1h-2zm-2 1h2v1h-2zm-1 1h1v1h-1zm-2 1h2v1h-2zm-2 1h2v1h-2zm-1 1h1v1h-1zm-2 1h2v1h-2zm-2 1h2v1h-2zm-1 1h1v1h-1zm-2 1h2v1h-2zm-2 1h2v1h-2z"/>
<path fill="url(#g36)" d="M1382 455v6h1v-6zm1 6v12h1v-12zm1 12v12h1v-12zm1 12v12h1v-12zm1 12v12h1v-12zm1 12v12h1v-12zm1 12v11h1v-11zm1 11v12h1v-12zm1 12v12h1v-12zm1 12v12h1v-12zm1 12v12h1v-12zm1 12v12h1v-12zm1 12v12h1v-12zm1 12v11h1v-11zm1 11v12h1v-12zm1 12v12h1v-12zm1 12v12h1v-12zm1 12v12h1v-12zm1 12v12h1v-12zm1 12v11h1v-11zm1 11v12h1v-12zm1 12v12h1v-12zm1 12v12h1v-12zm1 12v12h1v-12zm1 12v12h1v-12zm1 12v11h1v-11zm1 11v12h1v-12zm1 12v12h1v-12zm1 12v12h1v-12zm1 12v12h1v-12zm1 12v12h1v-12zm1 12v12h1v-12zm1 12v11h1v-11zm1 11v12h1v-12zm1 12v12h1v-12zm1 12v12h1v-12zm1 12v12h1v-12zm1 12v12h1v-12zm1 12v5h1v-5z"/>
<path fill="url(#g37)" d="M1345 899v6h1v-6zm1 -12v12h1v-12zm1 -12v12h1v-12zm1 -12v12h1v-12zm1 -12v12h1v-12zm1 -12v12h1v-12zm1 -13v13h1v-13zm1 -12v12h1v-12zm1 -12v12h1v-12zm1 -12v12h1v-12zm1 -12v12h1v-12zm1 -12v12h1v-12zm1 -13v13h1v-13zm1 -12v12h1v-12zm1 -12v12h1v-12zm1 -12v12h1v-12zm1 -12v12h1v-12zm1 -12v12h1v-12zm1 -12v12h1v-12zm1 -13v13h1v-13zm1 -12v12h1v-12zm1 -12v12h1v-12zm1 -12v12h1v-12zm1 -12v12h1v-12zm1 -12v12h1v-12zm1 -13v13h1v-13zm1 -12v12h1v-12zm1 -12v12h1v-12zm1 -12v12h1v-12zm1 -12v12h1v-12zm1 -12v12h1v-12zm1 -13v13h1v-13zm1 -12v12h1v-12zm1 -12v12h1v-12zm1 -12v12h1v-12zm1 -12v12h1v-12zm1 -12v12h1v-12zm1 -7v7h1v-7z"/>
<path fill="#9a1f6a" d="M1420 905h1v1h-1zm1 1h2v1h-2zm2 1h2v1h-2zm2 1h1v1h-1zm1 1h2v1h-2zm2 1h2v1h-2zm2 1h1v1h-1zm1 1h2v1h-2zm2 1h2v1h-2zm2 1h1v1h-1zm1 1h2v1h-2zm2 1h2v1h-2zm2 1h2v1h-2zm2 1h1v1h-1zm1 1h2v1h-2zm2 1h2v1h-2zm2 1h1v1h-1zm1 1h2v1h-2zm2 1h2v1h-2zm2 1h1v1h-1zm1 1h2v1h-2zm2 1h2v1h-2zM1420 905h1v1h-1zm-2 1h2v1h-2zm-2 1h2v1h-2zm-2 1h2v1h-2zm-1 1h1v1h-1zm-2 1h2v1h-2zm-2 1h2v1h-2zm-1 1h1v1h-1zm-2 1h2v1h-2zm-2 1h2v1h-2zm-2 1h2v1h-2zm-1 1h1v1h-1zm-2 1h2v1h-2zm-2 1h2v1h-2zm-2 1h2v1h-2zm-1 1h1v1h-1zm-2 1h2v1h-2zm-2 1h2v1h-2zm-1 1h1v1h-1zm-2 1h2v1h-2zm-2 1h2v1h-2zm-2 1h2v1h-2zM1457 927h1v1h-1zm-2 1h2v1h-2zm-2 1h2v1h-2zm-2 1h2v1h-2zm-1 1h1v1h-1zm-2 1h2v1h-2zm-2 1h2v1h-2zm-2 1h2v1h-2zm-1 1h1v1h-1zm-2 1h2v1h-2zm-2 1h2v1h-2zm-2 1h2v1h-2zm-2 1h2v1h-2zm-1 1h1v1h-1zm-2 1h2v1h-2zm-2 1h2v1h-2zm-2 1h2v1h-2zm-1 1h1v1h-1zm-2 1h2v1h-2zm-2 1h2v1h-2zm-2 1h2v1h-2zM750 562h1v1h-1zm1 1h2v1h-2zm2 1h2v1h-2zm2 1h2v1h-2zm2 1h2v1h-2zm2 1h1v1h-1zm1 1h2v1h-2zm2 1h2v1h-2zm2 1h2v1h-2zm2 1h2v1h-2zm2 1h2v1h-2zm2 1h1v1h-1zm1 1h2v1h-2zm2 1h2v1h-2zm2 1h2v1h-2zm2 1h2v1h-2zm2 1h1v1h-1zm1 1h2v1h-2zm2 1h2v1h-2zm2 1h2v1h-2zm2 1h2v1h-2zM750 562h1v1h-1zm-2 1h2v1h-2zm-2 1h2v1h-2zm-2 1h2v1h-2zm-1 1h1v1h-1zm-2 1h2v1h-2zm-2 1h2v1h-2zm-2 1h2v1h-2zm-1 1h1v1h-1zm-2 1h2v1h-2zm-2 1h2v1h-2zm-2 1h2v1h-2zm-2 1h2v1h-2zm-1 1h1v1h-1zm-2 1h2v1h-2zm-2 1h2v1h-2zm-2 1h2v1h-2zm-1 1h1v1h-1zm-2 1h2v1h-2zm-2 1h2v1h-2zm-2 1h2v1h-2z"/>
<path fill="url(#g38)" d="M788 578v6h1v-6zm1 -11v11h1v-11zm1 -11v11h1v-11zm1 -11v11h1v-11zm1 -11v11h1v-11zm1 -11v11h1v-11zm1 -11v11h1v-11zm1 -11v11h1v-11zm1 -11v11h1v-11zm1 -11v11h1v-11zm1 -11v11h1v-11zm1 -11v11h1v-11zm1 -11v11h1v-11zm1 -11v11h1v-11zm1 -11v11h1v-11zm1 -11v11h1v-11zm1 -11v11h1v-11zm1 -11v11h1v-11zm1 -12v12h1v-12zm1 -11v11h1v-11zm1 -11v11h1v-11zm1 -11v11h1v-11zm1 -11v11h1v-11zm1 -11v11h1v-11zm1 -11v11h1v-11zm1 -11v11h1v-11zm1 -11v11h1v-11zm1 -11v11h1v-11zm1 -11v11h1v-11zm1 -11v11h1v-11zm1 -11v11h1v-11zm1 -11v11h1v-11zm1 -11v11h1v-11zm1 -11v11h1v-11zm1 -11v11h1v-11zm1 -11v11h1v-11zm1 -11v11h1v-11zm1 -5v5h1v-5z"/>
<path fill="#9a1f6a" d="M788 583h1v1h-1zm-2 1h2v1h-2zm-2 1h2v1h-2zm-2 1h2v1h-2zm-1 1h1v1h-1zm-2 1h2v1h-2zm-2 1h2v1h-2zm-1 1h1v1h-1zm-2 1h2v1h-2zm-2 1h2v1h-2zm-2 1h2v1h-2zm-1 1h1v1h-1zm-2 1h2v1h-2zm-2 1h2v1h-2zm-2 1h2v1h-2zm-1 1h1v1h-1zm-2 1h2v1h-2zm-2 1h2v1h-2zm-1 1h1v1h-1zm-2 1h2v1h-2zm-2 1h2v1h-2zm-2 1h2v1h-2z"/>
<path fill="#f3af3d" d="M825 175h1v1h-1zm1 1h2v1h-2zm2 1h2v1h-2zm2 1h2v1h-2zm2 1h1v1h-1zm1 1h2v1h-2zm2 1h2v1h-2zm2 1h2v1h-2zm2 1h1v1h-1zm1 1h2v1h-2zm2 1h2v1h-2zm2 1h2v1h-2zm2 1h2v1h-2zm2 1h1v1h-1zm1 1h2v1h-2zm2 1h2v1h-2zm2 1h2v1h-2zm2 1h1v1h-1zm1 1h2v1h-2zm2 1h2v1h-2zm2 1h2v1h-2z"/>
<path fill="url(#g39)" d="M788 620v6h1v-6zm1 -12v12h1v-12zm1 -12v12h1v-12zm1 -12v12h1v-12zm1 -12v12h1v-12zm1 -13v13h1v-13zm1 -12v12h1v-12zm1 -12v12h1v-12zm1 -12v12h1v-12zm1 -12v12h1v-12zm1 -12v12h1v-12zm1 -13v13h1v-13zm1 -12v12h1v-12zm1 -12v12h1v-12zm1 -12v12h1v-12zm1 -12v12h1v-12zm1 -13v13h1v-13zm1 -12v12h1v-12zm1 -12v12h1v-12zm1 -12v12h1v-12zm1 -12v12h1v-12zm1 -13v13h1v-13zm1 -12v12h1v-12zm1 -12v12h1v-12zm1 -12v12h1v-12zm1 -12v12h1v-12zm1 -13v13h1v-13zm1 -12v12h1v-12zm1 -12v12h1v-12zm1 -12v12h1v-12zm1 -12v12h1v-12zm1 -12v12h1v-12zm1 -13v13h1v-13zm1 -12v12h1v-12zm1 -12v12h1v-12zm1 -12v12h1v-12zm1 -12v12h1v-12zm1 -7v7h1v-7z"/>
<path fill="#f3af3d" d="M862 196h1v1h-1zm1 1h2v1h-2zm2 1h2v1h-2zm2 1h1v1h-1zm1 1h2v1h-2zm2 1h2v1h-2zm2 1h1v1h-1zm1 1h2v1h-2zm2 1h2v1h-2zm2 1h1v1h-1zm1 1h2v1h-2zm2 1h2v1h-2zm2 1h2v1h-2zm2 1h1v1h-1zm1 1h2v1h-2zm2 1h2v1h-2zm2 1h1v1h-1zm1 1h2v1h-2zm2 1h2v1h-2zm2 1h1v1h-1zm1 1h2v1h-2zm2 1h2v1h-2zM862 196h1v1h-1zm-2 1h2v1h-2zm-2 1h2v1h-2zm-1 1h1v1h-1zm-2 1h2v1h-2zm-2 1h2v1h-2zm-1 1h1v1h-1zm-2 1h2v1h-2zm-2 1h2v1h-2zm-1 1h1v1h-1zm-2 1h2v1h-2zm-2 1h2v1h-2zm-2 1h2v1h-2zm-1 1h1v1h-1zm-2 1h2v1h-2zm-2 1h2v1h-2zm-1 1h1v1h-1zm-2 1h2v1h-2zm-2 1h2v1h-2zm-1 1h1v1h-1zm-2 1h2v1h-2zm-2 1h2v1h-2zM899 218h1v1h-1zm1 1h2v1h-2zm2 1h2v1h-2zm2 1h2v1h-2zm2 1h2v1h-2zm2 1h1v1h-1zm1 1h2v1h-2zm2 1h2v1h-2zm2 1h2v1h-2zm2 1h2v1h-2zm2 1h2v1h-2zm2 1h1v1h-1zm1 1h2v1h-2zm2 1h2v1h-2zm2 1h2v1h-2zm2 1h2v1h-2zm2 1h1v1h-1zm1 1h2v1h-2zm2 1h2v1h-2zm2 1h2v1h-2zm2 1h2v1h-2zM899 218h1v1h-1zm-2 1h2v1h-2zm-2 1h2v1h-2zm-2 1h2v1h-2zm-1 1h1v1h-1zm-2 1h2v1h-2zm-2 1h2v1h-2zm-2 1h2v1h-2zm-1 1h1v1h-1zm-2 1h2v1h-2zm-2 1h2v1h-2zm-2 1h2v1h-2zm-2 1h2v1h-2zm-1 1h1v1h-1zm-2 1h2v1h-2zm-2 1h2v1h-2zm-2 1h2v1h-2zm-1 1h1v1h-1zm-2 1h2v1h-2zm-2 1h2v1h-2zm-2 1h2v1h-2zM937 239h1v1h-1zm1 1h2v1h-2zm2 1h2v1h-2zm2 1h1v1h-1zm1 1h2v1h-2zm2 1h2v1h-2zm2 1h1v1h-1zm1 1h2v1h-2zm2 1h2v1h-2zm2 1h1v1h-1zm1 1h2v1h-2zm2 1h2v1h-2zm2 1h2v1h-2zm2 1h1v1h-1zm1 1h2v1h-2zm2 1h2v1h-2zm2 1h1v1h-1zm1 1h2v1h-2zm2 1h2v1h-2zm2 1h1v1h-1zm1 1h2v1h-2zm2 1h2v1h-2zM937 239h1v1h-1zm-2 1h2v1h-2zm-2 1h2v1h-2zm-2 1h2v1h-2zm-1 1h1v1h-1zm-2 1h2v1h-2zm-2 1h2v1h-2zm-1 1h1v1h-1zm-2 1h2v1h-2zm-2 1h2v1h-2zm-2 1h2v1h-2zm-1 1h1v1h-1zm-2 1h2v1h-2zm-2 1h2v1h-2zm-2 1h2v1h-2zm-1 1h1v1h-1zm-2 1h2v1h-2zm-2 1h2v1h-2zm-1 1h1v1h-1zm-2 1h2v1h-2zm-2 1h2v1h-2zm-2 1h2v1h-2zM974 261h1v1h-1zm1 1h2v1h-2zm2 1h2v1h-2zm2 1h2v1h-2zm2 1h1v1h-1zm1 1h2v1h-2zm2 1h2v1h-2zm2 1h2v1h-2zm2 1h1v1h-1zm1 1h2v1h-2zm2 1h2v1h-2zm2 1h2v1h-2zm2 1h2v1h-2zm2 1h1v1h-1zm1 1h2v1h-2zm2 1h2v1h-2zm2 1h2v1h-2zm2 1h1v1h-1zm1 1h2v1h-2zm2 1h2v1h-2zm2 1h2v1h-2zM974 261h1v1h-1zm-2 1h2v1h-2zm-2 1h2v1h-2zm-2 1h2v1h-2zm-1 1h1v1h-1zm-2 1h2v1h-2zm-2 1h2v1h-2zm-2 1h2v1h-2zm-1 1h1v1h-1zm-2 1h2v1h-2zm-2 1h2v1h-2zm-2 1h2v1h-2zm-2 1h2v1h-2zm-1 1h1v1h-1zm-2 1h2v1h-2zm-2 1h2v1h-2zm-2 1h2v1h-2zm-1 1h1v1h-1zm-2 1h2v1h-2zm-2 1h2v1h-2zm-2 1h2v1h-2z"/>
<path fill="url(#g40)" d="M1011 282v7h1v-7zm1 7v12h1v-12zm1 12v12h1v-12zm1 12v12h1v-12zm1 12v12h1v-12zm1 12v13h1v-13zm1 13v12h1v-12zm1 12v12h1v-12zm1 12v12h1v-12zm1 12v13h1v-13zm1 13v12h1v-12zm1 12v12h1v-12zm1 12v12h1v-12zm1 12v12h1v-12zm1 12v13h1v-13zm1 13v12h1v-12zm1 12v12h1v-12zm1 12v12h1v-12zm1 12v13h1v-13zm1 13v12h1v-12zm1 12v12h1v-12zm1 12v12h1v-12zm1 12v12h1v-12zm1 12v13h1v-13zm1 13v12h1v-12zm1 12v12h1v-12zm1 12v12h1v-12zm1 12v12h1v-12zm1 12v13h1v-13zm1 13v12h1v-12zm1 12v12h1v-12zm1 12v12h1v-12zm1 12v13h1v-13zm1 13v12h1v-12zm1 12v12h1v-12zm1 12v12h1v-12zm1 12v12h1v-12zm1 12v6h1v-6z"/>
<path fill="#f3af3d" d="M1011 282h1v1h-1zm-2 1h2v1h-2zm-2 1h2v1h-2zm-1 1h1v1h-1zm-2 1h2v1h-2zm-2 1h2v1h-2zm-1 1h1v1h-1zm-2 1h2v1h-2zm-2 1h2v1h-2zm-1 1h1v1h-1zm-2 1h2v1h-2zm-2 1h2v1h-2zm-2 1h2v1h-2zm-1 1h1v1h-1zm-2 1h2v1h-2zm-2 1h2v1h-2zm-1 1h1v1h-1zm-2 1h2v1h-2zm-2 1h2v1h-2zm-1 1h1v1h-1zm-2 1h2v1h-2zm-2 1h2v1h-2z"/>
<path fill="#9a1f6a" d="M1048 734h1v1h-1zm1 1h2v1h-2zm2 1h2v1h-2zm2 1h2v1h-2zm2 1h1v1h-1zm1 1h2v1h-2zm2 1h2v1h-2zm2 1h2v1h-2zm2 1h1v1h-1zm1 1h2v1h-2zm2 1h2v1h-2zm2 1h2v1h-2zm2 1h2v1h-2zm2 1h1v1h-1zm1 1h2v1h-2zm2 1h2v1h-2zm2 1h2v1h-2zm2 1h1v1h-1zm1 1h2v1h-2zm2 1h2v1h-2zm2 1h2v1h-2zM1048 734h1v1h-1zm-2 1h2v1h-2zm-2 1h2v1h-2zm-2 1h2v1h-2zm-1 1h1v1h-1zm-2 1h2v1h-2zm-2 1h2v1h-2zm-2 1h2v1h-2zm-1 1h1v1h-1zm-2 1h2v1h-2zm-2 1h2v1h-2zm-2 1h2v1h-2zm-2 1h2v1h-2zm-1 1h1v1h-1zm-2 1h2v1h-2zm-2 1h2v1h-2zm-2 1h2v1h-2zm-1 1h1v1h-1zm-2 1h2v1h-2zm-2 1h2v1h-2zm-2 1h2v1h-2zM1085 755h1v1h-1zm1 1h2v1h-2zm2 1h2v1h-2zm2 1h2v1h-2zm2 1h1v1h-1zm1 1h2v1h-2zm2 1h2v1h-2zm2 1h2v1h-2zm2 1h1v1h-1zm1 1h2v1h-2zm2 1h2v1h-2zm2 1h2v1h-2zm2 1h2v1h-2zm2 1h1v1h-1zm1 1h2v1h-2zm2 1h2v1h-2zm2 1h2v1h-2zm2 1h1v1h-1zm1 1h2v1h-2zm2 1h2v1h-2zm2 1h2v1h-2zM1085 755h1v1h-1zm-2 1h2v1h-2zm-2 1h2v1h-2zm-2 1h2v1h-2zm-1 1h1v1h-1zm-2 1h2v1h-2zm-2 1h2v1h-2zm-2 1h2v1h-2zm-1 1h1v1h-1zm-2 1h2v1h-2zm-2 1h2v1h-2zm-2 1h2v1h-2zm-2 1h2v1h-2zm-1 1h1v1h-1zm-2 1h2v1h-2zm-2 1h2v1h-2zm-2 1h2v1h-2zm-1 1h1v1h-1zm-2 1h2v1h-2zm-2 1h2v1h-2zm-2 1h2v1h-2zM1122 776h1v1h-1zm1 1h2v1h-2zm2 1h2v1h-2zm2 1h1v1h-1zm1 1h2v1h-2zm2 1h2v1h-2zm2 1h1v1h-1zm1 1h2v1h-2zm2 1h2v1h-2zm2 1h1v1h-1zm1 1h2v1h-2zm2 1h2v1h-2zm2 1h2v1h-2zm2 1h1v1h-1zm1 1h2v1h-2zm2 1h2v1h-2zm2 1h1v1h-1zm1 1h2v1h-2zm2 1h2v1h-2zm2 1h1v1h-1zm1 1h2v1h-2zm2 1h2v1h-2zM1122 776h1v1h-1zm-2 1h2v1h-2zm-2 1h2v1h-2zm-1 1h1v1h-1zm-2 1h2v1h-2zm-2 1h2v1h-2zm-1 1h1v1h-1zm-2 1h2v1h-2zm-2 1h2v1h-2zm-1 1h1v1h-1zm-2 1h2v1h-2zm-2 1h2v1h-2zm-2 1h2v1h-2zm-1 1h1v1h-1zm-2 1h2v1h-2zm-2 1h2v1h-2zm-1 1h1v1h-1zm-2 1h2v1h-2zm-2 1h2v1h-2zm-1 1h1v1h-1zm-2 1h2v1h-2zm-2 1h2v1h-2z"/>
<path fill="url(#g41)" d="M1159 793v6h1v-6zm1 -11v11h1v-11zm1 -11v11h1v-11zm1 -11v11h1v-11zm1 -11v11h1v-11zm1 -11v11h1v-11zm1 -11v11h1v-11zm1 -11v11h1v-11zm1 -11v11h1v-11zm1 -11v11h1v-11zm1 -11v11h1v-11zm1 -11v11h1v-11zm1 -11v11h1v-11zm1 -11v11h1v-11zm1 -11v11h1v-11zm1 -11v11h1v-11zm1 -11v11h1v-11zm1 -11v11h1v-11zm1 -12v12h1v-12zm1 -11v11h1v-11zm1 -11v11h1v-11zm1 -11v11h1v-11zm1 -11v11h1v-11zm1 -11v11h1v-11zm1 -11v11h1v-11zm1 -11v11h1v-11zm1 -11v11h1v-11zm1 -11v11h1v-11zm1 -11v11h1v-11zm1 -11v11h1v-11zm1 -11v11h1v-11zm1 -11v11h1v-11zm1 -11v11h1v-11zm1 -11v11h1v-11zm1 -11v11h1v-11zm1 -11v11h1v-11zm1 -11v11h1v-11zm1 -5v5h1v-5z"/>
<path fill="url(#g42)" d="M1122 391v5h1v-5zm1 5v11h1v-11zm1 11v11h1v-11zm1 11v11h1v-11zm1 11v11h1v-11zm1 11v11h1v-11zm1 11v11h1v-11zm1 11v11h1v-11zm1 11v11h1v-11zm1 11v11h1v-11zm1 11v11h1v-11zm1 11v11h1v-11zm1 11v11h1v-11zm1 11v11h1v-11zm1 11v11h1v-11zm1 11v11h1v-11zm1 11v11h1v-11zm1 11v11h1v-11zm1 11v11h1v-11zm1 11v12h1v-12zm1 12v11h1v-11zm1 11v11h1v-11zm1 11v11h1v-11zm1 11v11h1v-11zm1 11v11h1v-11zm1 11v11h1v-11zm1 11v11h1v-11zm1 11v11h1v-11zm1 11v11h1v-11zm1 11v11h1v-11zm1 11v11h1v-11zm1 11v11h1v-11zm1 11v11h1v-11zm1 11v11h1v-11zm1 11v11h1v-11zm1 11v11h1v-11zm1 11v11h1v-11zm1 11v6h1v-6z"/>
<path fill="#f3af3d" d="M1196 390h1v1h-1zm1 1h2v1h-2zm2 1h2v1h-2zm2 1h1v1h-1zm1 1h2v1h-2zm2 1h2v1h-2zm2 1h1v1h-1zm1 1h2v1h-2zm2 1h2v1h-2zm2 1h1v1h-1zm1 1h2v1h-2zm2 1h2v1h-2zm2 1h2v1h-2zm2 1h1v1h-1zm1 1h2v1h-2zm2 1h2v1h-2zm2 1h1v1h-1zm1 1h2v1h-2zm2 1h2v1h-2zm2 1h1v1h-1zm1 1h2v1h-2zm2 1h2v1h-2zM1196 390h1v1h-1zm-2 1h2v1h-2zm-2 1h2v1h-2zm-1 1h1v1h-1zm-2 1h2v1h-2zm-2 1h2v1h-2zm-1 1h1v1h-1zm-2 1h2v1h-2zm-2 1h2v1h-2zm-1 1h1v1h-1zm-2 1h2v1h-2zm-2 1h2v1h-2zm-2 1h2v1h-2zm-1 1h1v1h-1zm-2 1h2v1h-2zm-2 1h2v1h-2zm-1 1h1v1h-1zm-2 1h2v1h-2zm-2 1h2v1h-2zm-1 1h1v1h-1zm-2 1h2v1h-2zm-2 1h2v1h-2zM1233 412h1v1h-1zm1 1h2v1h-2zm2 1h2v1h-2zm2 1h2v1h-2zm2 1h2v1h-2zm2 1h1v1h-1zm1 1h2v1h-2zm2 1h2v1h-2zm2 1h2v1h-2zm2 1h2v1h-2zm2 1h2v1h-2zm2 1h1v1h-1zm1 1h2v1h-2zm2 1h2v1h-2zm2 1h2v1h-2zm2 1h2v1h-2zm2 1h1v1h-1zm1 1h2v1h-2zm2 1h2v1h-2zm2 1h2v1h-2zm2 1h2v1h-2z"/>
<path fill="url(#g43)" d="M1196 856v6h1v-6zm1 -12v12h1v-12zm1 -12v12h1v-12zm1 -12v12h1v-12zm1 -12v12h1v-12zm1 -12v12h1v-12zm1 -13v13h1v-13zm1 -12v12h1v-12zm1 -12v12h1v-12zm1 -12v12h1v-12zm1 -12v12h1v-12zm1 -12v12h1v-12zm1 -13v13h1v-13zm1 -12v12h1v-12zm1 -12v12h1v-12zm1 -12v12h1v-12zm1 -12v12h1v-12zm1 -12v12h1v-12zm1 -12v12h1v-12zm1 -13v13h1v-13zm1 -12v12h1v-12zm1 -12v12h1v-12zm1 -12v12h1v-12zm1 -12v12h1v-12zm1 -12v12h1v-12zm1 -13v13h1v-13zm1 -12v12h1v-12zm1 -12v12h1v-12zm1 -12v12h1v-12zm1 -12v12h1v-12zm1 -12v12h1v-12zm1 -13v13h1v-13zm1 -12v12h1v-12zm1 -12v12h1v-12zm1 -12v12h1v-12zm1 -12v12h1v-12zm1 -12v12h1v-12zm1 -7v7h1v-7z"/>
<path fill="#f3af3d" d="M1271 433h1v1h-1zm1 1h2v1h-2zm2 1h2v1h-2zm2 1h1v1h-1zm1 1h2v1h-2zm2 1h2v1h-2zm2 1h1v1h-1zm1 1h2v1h-2zm2 1h2v1h-2zm2 1h1v1h-1zm1 1h2v1h-2zm2 1h2v1h-2zm2 1h2v1h-2zm2 1h1v1h-1zm1 1h2v1h-2zm2 1h2v1h-2zm2 1h1v1h-1zm1 1h2v1h-2zm2 1h2v1h-2zm2 1h1v1h-1zm1 1h2v1h-2zm2 1h2v1h-2z"/>
<path fill="url(#g44)" d="M1233 879v5h1v-5zm1 -12v12h1v-12zm1 -12v12h1v-12zm1 -12v12h1v-12zm1 -12v12h1v-12zm1 -12v12h1v-12zm1 -12v12h1v-12zm1 -12v12h1v-12zm1 -11v11h1v-11zm1 -12v12h1v-12zm1 -12v12h1v-12zm1 -12v12h1v-12zm1 -12v12h1v-12zm1 -12v12h1v-12zm1 -12v12h1v-12zm1 -11v11h1v-11zm1 -12v12h1v-12zm1 -12v12h1v-12zm1 -12v12h1v-12zm1 -12v12h1v-12zm1 -12v12h1v-12zm1 -12v12h1v-12zm1 -12v12h1v-12zm1 -11v11h1v-11zm1 -12v12h1v-12zm1 -12v12h1v-12zm1 -12v12h1v-12zm1 -12v12h1v-12zm1 -12v12h1v-12zm1 -12v12h1v-12zm1 -11v11h1v-11zm1 -12v12h1v-12zm1 -12v12h1v-12zm1 -12v12h1v-12zm1 -12v12h1v-12zm1 -12v12h1v-12zm1 -12v12h1v-12zm1 -12v12h1v-12zm1 -6v6h1v-6z"/>
<path fill="url(#g45)" d="M1308 455v7h1v-7zm1 7v12h1v-12zm1 12v12h1v-12zm1 12v12h1v-12zm1 12v12h1v-12zm1 12v12h1v-12zm1 12v13h1v-13zm1 13v12h1v-12zm1 12v12h1v-12zm1 12v12h1v-12zm1 12v12h1v-12zm1 12v12h1v-12zm1 12v13h1v-13zm1 13v12h1v-12zm1 12v12h1v-12zm1 12v12h1v-12zm1 12v12h1v-12zm1 12v12h1v-12zm1 12v13h1v-13zm1 13v12h1v-12zm1 12v12h1v-12zm1 12v12h1v-12zm1 12v12h1v-12zm1 12v12h1v-12zm1 12v12h1v-12zm1 12v13h1v-13zm1 13v12h1v-12zm1 12v12h1v-12zm1 12v12h1v-12zm1 12v12h1v-12zm1 12v12h1v-12zm1 12v13h1v-13zm1 13v12h1v-12zm1 12v12h1v-12zm1 12v12h1v-12zm1 12v12h1v-12zm1 12v12h1v-12zm1 12v6h1v-6z"/>
<path fill="url(#g46)" d="M1271 899v6h1v-6zm1 -12v12h1v-12zm1 -12v12h1v-12zm1 -12v12h1v-12zm1 -12v12h1v-12zm1 -12v12h1v-12zm1 -13v13h1v-13zm1 -12v12h1v-12zm1 -12v12h1v-12zm1 -12v12h1v-12zm1 -12v12h1v-12zm1 -12v12h1v-12zm1 -13v13h1v-13zm1 -12v12h1v-12zm1 -12v12h1v-12zm1 -12v12h1v-12zm1 -12v12h1v-12zm1 -12v12h1v-12zm1 -12v12h1v-12zm1 -13v13h1v-13zm1 -12v12h1v-12zm1 -12v12h1v-12zm1 -12v12h1v-12zm1 -12v12h1v-12zm1 -12v12h1v-12zm1 -13v13h1v-13zm1 -12v12h1v-12zm1 -12v12h1v-12zm1 -12v12h1v-12zm1 -12v12h1v-12zm1 -12v12h1v-12zm1 -13v13h1v-13zm1 -12v12h1v-12zm1 -12v12h1v-12zm1 -12v12h1v-12zm1 -12v12h1v-12zm1 -12v12h1v-12zm1 -7v7h1v-7z"/>
<path fill="#9a1f6a" d="M1345 905h1v1h-1zm1 1h2v1h-2zm2 1h2v1h-2zm2 1h1v1h-1zm1 1h2v1h-2zm2 1h2v1h-2zm2 1h1v1h-1zm1 1h2v1h-2zm2 1h2v1h-2zm2 1h1v1h-1zm1 1h2v1h-2zm2 1h2v1h-2zm2 1h2v1h-2zm2 1h1v1h-1zm1 1h2v1h-2zm2 1h2v1h-2zm2 1h1v1h-1zm1 1h2v1h-2zm2 1h2v1h-2zm2 1h1v1h-1zm1 1h2v1h-2zm2 1h2v1h-2zM1345 905h1v1h-1zm-2 1h2v1h-2zm-2 1h2v1h-2zm-1 1h1v1h-1zm-2 1h2v1h-2zm-2 1h2v1h-2zm-1 1h1v1h-1zm-2 1h2v1h-2zm-2 1h2v1h-2zm-1 1h1v1h-1zm-2 1h2v1h-2zm-2 1h2v1h-2zm-2 1h2v1h-2zm-1 1h1v1h-1zm-2 1h2v1h-2zm-2 1h2v1h-2zm-1 1h1v1h-1zm-2 1h2v1h-2zm-2 1h2v1h-2zm-1 1h1v1h-1zm-2 1h2v1h-2zm-2 1h2v1h-2zM1382 927h1v1h-1zm1 1h2v1h-2zm2 1h2v1h-2zm2 1h2v1h-2zm2 1h2v1h-2zm2 1h1v1h-1zm1 1h2v1h-2zm2 1h2v1h-2zm2 1h2v1h-2zm2 1h2v1h-2zm2 1h2v1h-2zm2 1h1v1h-1zm1 1h2v1h-2zm2 1h2v1h-2zm2 1h2v1h-2zm2 1h2v1h-2zm2 1h1v1h-1zm1 1h2v1h-2zm2 1h2v1h-2zm2 1h2v1h-2zm2 1h2v1h-2zM1382 927h1v1h-1zm-2 1h2v1h-2zm-2 1h2v1h-2zm-2 1h2v1h-2zm-1 1h1v1h-1zm-2 1h2v1h-2zm-2 1h2v1h-2zm-2 1h2v1h-2zm-1 1h1v1h-1zm-2 1h2v1h-2zm-2 1h2v1h-2zm-2 1h2v1h-2zm-2 1h2v1h-2zm-1 1h1v1h-1zm-2 1h2v1h-2zm-2 1h2v1h-2zm-2 1h2v1h-2zm-1 1h1v1h-1zm-2 1h2v1h-2zm-2 1h2v1h-2zm-2 1h2v1h-2zM1420 948h1v1h-1zm-2 1h2v1h-2zm-2 1h2v1h-2zm-2 1h2v1h-2zm-1 1h1v1h-1zm-2 1h2v1h-2zm-2 1h2v1h-2zm-1 1h1v1h-1zm-2 1h2v1h-2zm-2 1h2v1h-2zm-2 1h2v1h-2zm-1 1h1v1h-1zm-2 1h2v1h-2zm-2 1h2v1h-2zm-2 1h2v1h-2zm-1 1h1v1h-1zm-2 1h2v1h-2zm-2 1h2v1h-2zm-1 1h1v1h-1zm-2 1h2v1h-2zm-2 1h2v1h-2zm-2 1h2v1h-2zM713 583h1v1h-1zm1 1h2v1h-2zm2 1h2v1h-2zm2 1h1v1h-1zm1 1h2v1h-2zm2 1h2v1h-2zm2 1h1v1h-1zm1 1h2v1h-2zm2 1h2v1h-2zm2 1h1v1h-1zm1 1h2v1h-2zm2 1h2v1h-2zm2 1h2v1h-2zm2 1h1v1h-1zm1 1h2v1h-2zm2 1h2v1h-2zm2 1h1v1h-1zm1 1h2v1h-2zm2 1h2v1h-2zm2 1h1v1h-1zm1 1h2v1h-2zm2 1h2v1h-2zM713 583h1v1h-1zm-2 1h2v1h-2zm-2 1h2v1h-2zm-1 1h1v1h-1zm-2 1h2v1h-2zm-2 1h2v1h-2zm-1 1h1v1h-1zm-2 1h2v1h-2zm-2 1h2v1h-2zm-1 1h1v1h-1zm-2 1h2v1h-2zm-2 1h2v1h-2zm-2 1h2v1h-2zm-1 1h1v1h-1zm-2 1h2v1h-2zm-2 1h2v1h-2zm-1 1h1v1h-1zm-2 1h2v1h-2zm-2 1h2v1h-2zm-1 1h1v1h-1zm-2 1h2v1h-2zm-2 1h2v1h-2zM750 605h1v1h-1zm1 1h2v1h-2zm2 1h2v1h-2zm2 1h2v1h-2zm2 1h2v1h-2zm2 1h1v1h-1zm1 1h2v1h-2zm2 1h2v1h-2zm2 1h2v1h-2zm2 1h2v1h-2zm2 1h2v1h-2zm2 1h1v1h-1zm1 1h2v1h-2zm2 1h2v1h-2zm2 1h2v1h-2zm2 1h2v1h-2zm2 1h1v1h-1zm1 1h2v1h-2zm2 1h2v1h-2zm2 1h2v1h-2zm2 1h2v1h-2zM750 605h1v1h-1zm-2 1h2v1h-2zm-2 1h2v1h-2zm-2 1h2v1h-2zm-1 1h1v1h-1zm-2 1h2v1h-2zm-2 1h2v1h-2zm-2 1h2v1h-2zm-1 1h1v1h-1zm-2 1h2v1h-2zm-2 1h2v1h-2zm-2 1h2v1h-2zm-2 1h2v1h-2zm-1 1h1v1h-1zm-2 1h2v1h-2zm-2 1h2v1h-2zm-2 1h2v1h-2zm-1 1h1v1h-1zm-2 1h2v1h-2zm-2 1h2v1h-2zm-2 1h2v1h-2z"/>
<path fill="url(#g47)" d="M788 621v6h1v-6zm1 -11v11h1v-11zm1 -11v11h1v-11zm1 -11v11h1v-11zm1 -11v11h1v-11zm1 -11v11h1v-11zm1 -11v11h1v-11zm1 -11v11h1v-11zm1 -11v11h1v-11zm1 -11v11h1v-11zm1 -11v11h1v-11zm1 -11v11h1v-11zm1 -11v11h1v-11zm1 -11v11h1v-11zm1 -11v11h1v-11zm1 -11v11h1v-11zm1 -11v11h1v-11zm1 -11v11h1v-11zm1 -12v12h1v-12zm1 -11v11h1v-11zm1 -11v11h1v-11zm1 -11v11h1v-11zm1 -11v11h1v-11zm1 -11v11h1v-11zm1 -11v11h1v-11zm1 -11v11h1v-11zm1 -11v11h1v-11zm1 -11v11h1v-11zm1 -11v11h1v-11zm1 -11v11h1v-11zm1 -11v11h1v-11zm1 -11v11h1v-11zm1 -11v11h1v-11zm1 -11v11h1v-11zm1 -11v11h1v-11zm1 -11v11h1v-11zm1 -11v11h1v-11zm1 -5v5h1v-5z"/>
<path fill="#9a1f6a" d="M788 626h1v1h-1zm-2 1h2v1h-2zm-2 1h2v1h-2zm-2 1h2v1h-2zm-1 1h1v1h-1zm-2 1h2v1h-2zm-2 1h2v1h-2zm-1 1h1v1h-1zm-2 1h2v1h-2zm-2 1h2v1h-2zm-2 1h2v1h-2zm-1 1h1v1h-1zm-2 1h2v1h-2zm-2 1h2v1h-2zm-2 1h2v1h-2zm-1 1h1v1h-1zm-2 1h2v1h-2zm-2 1h2v1h-2zm-1 1h1v1h-1zm-2 1h2v1h-2zm-2 1h2v1h-2zm-2 1h2v1h-2z"/>
<path fill="#f3af3d" d="M825 218h1v1h-1zm1 1h2v1h-2zm2 1h2v1h-2zm2 1h2v1h-2zm2 1h1v1h-1zm1 1h2v1h-2zm2 1h2v1h-2zm2 1h2v1h-2zm2 1h1v1h-1zm1 1h2v1h-2zm2 1h2v1h-2zm2 1h2v1h-2zm2 1h2v1h-2zm2 1h1v1h-1zm1 1h2v1h-2zm2 1h2v1h-2zm2 1h2v1h-2zm2 1h1v1h-1zm1 1h2v1h-2zm2 1h2v1h-2zm2 1h2v1h-2z"/>
<path fill="url(#g48)" d="M788 663v6h1v-6zm1 -12v12h1v-12zm1 -12v12h1v-12zm1 -12v12h1v-12zm1 -12v12h1v-12zm1 -13v13h1v-13zm1 -12v12h1v-12zm1 -12v12h1v-12zm1 -12v12h1v-12zm1 -12v12h1v-12zm1 -12v12h1v-12zm1 -13v13h1v-13zm1 -12v12h1v-12zm1 -12v12h1v-12zm1 -12v12h1v-12zm1 -12v12h1v-12zm1 -13v13h1v-13zm1 -12v12h1v-12zm1 -12v12h1v-12zm1 -12v12h1v-12zm1 -12v12h1v-12zm1 -13v13h1v-13zm1 -12v12h1v-12zm1 -12v12h1v-12zm1 -12v12h1v-12zm1 -12v12h1v-12zm1 -13v13h1v-13zm1 -12v12h1v-12zm1 -12v12h1v-12zm1 -12v12h1v-12zm1 -12v12h1v-12zm1 -12v12h1v-12zm1 -13v13h1v-13zm1 -12v12h1v-12zm1 -12v12h1v-12zm1 -12v12h1v-12zm1 -12v12h1v-12zm1 -7v7h1v-7z"/>
<path fill="#f3af3d" d="M862 239h1v1h-1zm1 1h2v1h-2zm2 1h2v1h-2zm2 1h1v1h-1zm1 1h2v1h-2zm2 1h2v1h-2zm2 1h1v1h-1zm1 1h2v1h-2zm2 1h2v1h-2zm2 1h1v1h-1zm1 1h2v1h-2zm2 1h2v1h-2zm2 1h2v1h-2zm2 1h1v1h-1zm1 1h2v1h-2zm2 1h2v1h-2zm2 1h1v1h-1zm1 1h2v1h-2zm2 1h2v1h-2zm2 1h1v1h-1zm1 1h2v1h-2zm2 1h2v1h-2z"/>
<path fill="url(#g49)" d="M825 685v6h1v-6zm1 -12v12h1v-12zm1 -12v12h1v-12zm1 -12v12h1v-12zm1 -12v12h1v-12zm1 -13v13h1v-13zm1 -12v12h1v-12zm1 -12v12h1v-12zm1 -12v12h1v-12zm1 -13v13h1v-13zm1 -12v12h1v-12zm1 -12v12h1v-12zm1 -12v12h1v-12zm1 -12v12h1v-12zm1 -13v13h1v-13zm1 -12v12h1v-12zm1 -12v12h1v-12zm1 -12v12h1v-12zm1 -12v12h1v-12zm1 -13v13h1v-13zm1 -12v12h1v-12zm1 -12v12h1v-12zm1 -12v12h1v-12zm1 -13v13h1v-13zm1 -12v12h1v-12zm1 -12v12h1v-12zm1 -12v12h1v-12zm1 -12v12h1v-12zm1 -13v13h1v-13zm1 -12v12h1v-12zm1 -12v12h1v-12zm1 -12v12h1v-12zm1 -13v13h1v-13zm1 -12v12h1v-12zm1 -12v12h1v-12zm1 -12v12h1v-12zm1 -12v12h1v-12zm1 -7v7h1v-7z"/>
<path fill="#f3af3d" d="M899 261h1v1h-1zm1 1h2v1h-2zm2 1h2v1h-2zm2 1h2v1h-2zm2 1h2v1h-2zm2 1h1v1h-1zm1 1h2v1h-2zm2 1h2v1h-2zm2 1h2v1h-2zm2 1h2v1h-2zm2 1h2v1h-2zm2 1h1v1h-1zm1 1h2v1h-2zm2 1h2v1h-2zm2 1h2v1h-2zm2 1h2v1h-2zm2 1h1v1h-1zm1 1h2v1h-2zm2 1h2v1h-2zm2 1h2v1h-2zm2 1h2v1h-2z"/>
<path fill="url(#g50)" d="M862 706v6h1v-6zm1 -12v12h1v-12zm1 -12v12h1v-12zm1 -12v12h1v-12zm1 -12v12h1v-12zm1 -13v13h1v-13zm1 -12v12h1v-12zm1 -12v12h1v-12zm1 -12v12h1v-12zm1 -12v12h1v-12zm1 -12v12h1v-12zm1 -13v13h1v-13zm1 -12v12h1v-12zm1 -12v12h1v-12zm1 -12v12h1v-12zm1 -12v12h1v-12zm1 -13v13h1v-13zm1 -12v12h1v-12zm1 -12v12h1v-12zm1 -12v12h1v-12zm1 -12v12h1v-12zm1 -13v13h1v-13zm1 -12v12h1v-12zm1 -12v12h1v-12zm1 -12v12h1v-12zm1 -12v12h1v-12zm1 -13v13h1v-13zm1 -12v12h1v-12zm1 -12v12h1v-12zm1 -12v12h1v-12zm1 -12v12h1v-12zm1 -12v12h1v-12zm1 -13v13h1v-13zm1 -12v12h1v-12zm1 -12v12h1v-12zm1 -12v12h1v-12zm1 -12v12h1v-12zm1 -7v7h1v-7z"/>
<path fill="#f3af3d" d="M937 282h1v1h-1zm1 1h2v1h-2zm2 1h2v1h-2zm2 1h1v1h-1zm1 1h2v1h-2zm2 1h2v1h-2zm2 1h1v1h-1zm1 1h2v1h-2zm2 1h2v1h-2zm2 1h1v1h-1zm1 1h2v1h-2zm2 1h2v1h-2zm2 1h2v1h-2zm2 1h1v1h-1zm1 1h2v1h-2zm2 1h2v1h-2zm2 1h1v1h-1zm1 1h2v1h-2zm2 1h2v1h-2zm2 1h1v1h-1zm1 1h2v1h-2zm2 1h2v1h-2zM937 282h1v1h-1zm-2 1h2v1h-2zm-2 1h2v1h-2zm-2 1h2v1h-2zm-1 1h1v1h-1zm-2 1h2v1h-2zm-2 1h2v1h-2zm-1 1h1v1h-1zm-2 1h2v1h-2zm-2 1h2v1h-2zm-2 1h2v1h-2zm-1 1h1v1h-1zm-2 1h2v1h-2zm-2 1h2v1h-2zm-2 1h2v1h-2zm-1 1h1v1h-1zm-2 1h2v1h-2zm-2 1h2v1h-2zm-1 1h1v1h-1zm-2 1h2v1h-2zm-2 1h2v1h-2zm-2 1h2v1h-2z"/>
<path fill="url(#g51)" d="M974 304v7h1v-7zm1 7v12h1v-12zm1 12v12h1v-12zm1 12v12h1v-12zm1 12v12h1v-12zm1 12v13h1v-13zm1 13v12h1v-12zm1 12v12h1v-12zm1 12v12h1v-12zm1 12v12h1v-12zm1 12v12h1v-12zm1 12v13h1v-13zm1 13v12h1v-12zm1 12v12h1v-12zm1 12v12h1v-12zm1 12v12h1v-12zm1 12v13h1v-13zm1 13v12h1v-12zm1 12v12h1v-12zm1 12v12h1v-12zm1 12v12h1v-12zm1 12v13h1v-13zm1 13v12h1v-12zm1 12v12h1v-12zm1 12v12h1v-12zm1 12v12h1v-12zm1 12v13h1v-13zm1 13v12h1v-12zm1 12v12h1v-12zm1 12v12h1v-12zm1 12v12h1v-12zm1 12v12h1v-12zm1 12v13h1v-13zm1 13v12h1v-12zm1 12v12h1v-12zm1 12v12h1v-12zm1 12v12h1v-12zm1 12v6h1v-6z"/>
<path fill="#f3af3d" d="M974 304h1v1h-1zm-2 1h2v1h-2zm-2 1h2v1h-2zm-2 1h2v1h-2zm-1 1h1v1h-1zm-2 1h2v1h-2zm-2 1h2v1h-2zm-2 1h2v1h-2zm-1 1h1v1h-1zm-2 1h2v1h-2zm-2 1h2v1h-2zm-2 1h2v1h-2zm-2 1h2v1h-2zm-1 1h1v1h-1zm-2 1h2v1h-2zm-2 1h2v1h-2zm-2 1h2v1h-2zm-1 1h1v1h-1zm-2 1h2v1h-2zm-2 1h2v1h-2zm-2 1h2v1h-2z"/>
<path fill="#9a1f6a" d="M1011 755h1v1h-1zm1 1h2v1h-2zm2 1h2v1h-2zm2 1h2v1h-2zm2 1h1v1h-1zm1 1h2v1h-2zm2 1h2v1h-2zm2 1h2v1h-2zm2 1h1v1h-1zm1 1h2v1h-2zm2 1h2v1h-2zm2 1h2v1h-2zm2 1h2v1h-2zm2 1h1v1h-1zm1 1h2v1h-2zm2 1h2v1h-2zm2 1h2v1h-2zm2 1h1v1h-1zm1 1h2v1h-2zm2 1h2v1h-2zm2 1h2v1h-2zM1011 755h1v1h-1zm-2 1h2v1h-2zm-2 1h2v1h-2zm-2 1h2v1h-2zm-1 1h1v1h-1zm-2 1h2v1h-2zm-2 1h2v1h-2zm-2 1h2v1h-2zm-1 1h1v1h-1zm-2 1h2v1h-2zm-2 1h2v1h-2zm-2 1h2v1h-2zm-2 1h2v1h-2zm-1 1h1v1h-1zm-2 1h2v1h-2zm-2 1h2v1h-2zm-2 1h2v1h-2zm-1 1h1v1h-1zm-2 1h2v1h-2zm-2 1h2v1h-2zm-2 1h2v1h-2zM1048 776h1v1h-1zm1 1h2v1h-2zm2 1h2v1h-2zm2 1h1v1h-1zm1 1h2v1h-2zm2 1h2v1h-2zm2 1h1v1h-1zm1 1h2v1h-2zm2 1h2v1h-2zm2 1h1v1h-1zm1 1h2v1h-2zm2 1h2v1h-2zm2 1h2v1h-2zm2 1h1v1h-1zm1 1h2v1h-2zm2 1h2v1h-2zm2 1h1v1h-1zm1 1h2v1h-2zm2 1h2v1h-2zm2 1h1v1h-1zm1 1h2v1h-2zm2 1h2v1h-2zM1048 776h1v1h-1zm-2 1h2v1h-2zm-2 1h2v1h-2zm-1 1h1v1h-1zm-2 1h2v1h-2zm-2 1h2v1h-2zm-1 1h1v1h-1zm-2 1h2v1h-2zm-2 1h2v1h-2zm-1 1h1v1h-1zm-2 1h2v1h-2zm-2 1h2v1h-2zm-2 1h2v1h-2zm-1 1h1v1h-1zm-2 1h2v1h-2zm-2 1h2v1h-2zm-1 1h1v1h-1zm-2 1h2v1h-2zm-2 1h2v1h-2zm-1 1h1v1h-1zm-2 1h2v1h-2zm-2 1h2v1h-2z"/>
<path fill="url(#g52)" d="M1085 793v6h1v-6zm1 -11v11h1v-11zm1 -11v11h1v-11zm1 -11v11h1v-11zm1 -11v11h1v-11zm1 -11v11h1v-11zm1 -11v11h1v-11zm1 -11v11h1v-11zm1 -11v11h1v-11zm1 -11v11h1v-11zm1 -11v11h1v-11zm1 -11v11h1v-11zm1 -11v11h1v-11zm1 -11v11h1v-11zm1 -11v11h1v-11zm1 -11v11h1v-11zm1 -11v11h1v-11zm1 -11v11h1v-11zm1 -12v12h1v-12zm1 -11v11h1v-11zm1 -11v11h1v-11zm1 -11v11h1v-11zm1 -11v11h1v-11zm1 -11v11h1v-11zm1 -11v11h1v-11zm1 -11v11h1v-11zm1 -11v11h1v-11zm1 -11v11h1v-11zm1 -11v11h1v-11zm1 -11v11h1v-11zm1 -11v11h1v-11zm1 -11v11h1v-11zm1 -11v11h1v-11zm1 -11v11h1v-11zm1 -11v11h1v-11zm1 -11v11h1v-11zm1 -11v11h1v-11zm1 -5v5h1v-5z"/>
<path fill="#9a1f6a" d="M1085 798h1v1h-1zm-2 1h2v1h-2zm-2 1h2v1h-2zm-2 1h2v1h-2zm-1 1h1v1h-1zm-2 1h2v1h-2zm-2 1h2v1h-2zm-2 1h2v1h-2zm-1 1h1v1h-1zm-2 1h2v1h-2zm-2 1h2v1h-2zm-2 1h2v1h-2zm-2 1h2v1h-2zm-1 1h1v1h-1zm-2 1h2v1h-2zm-2 1h2v1h-2zm-2 1h2v1h-2zm-1 1h1v1h-1zm-2 1h2v1h-2zm-2 1h2v1h-2zm-2 1h2v1h-2z"/>
<path fill="#f3af3d" d="M1122 390h1v1h-1zm1 1h2v1h-2zm2 1h2v1h-2zm2 1h1v1h-1zm1 1h2v1h-2zm2 1h2v1h-2zm2 1h1v1h-1zm1 1h2v1h-2zm2 1h2v1h-2zm2 1h1v1h-1zm1 1h2v1h-2zm2 1h2v1h-2zm2 1h2v1h-2zm2 1h1v1h-1zm1 1h2v1h-2zm2 1h2v1h-2zm2 1h1v1h-1zm1 1h2v1h-2zm2 1h2v1h-2zm2 1h1v1h-1zm1 1h2v1h-2zm2 1h2v1h-2zM1122 390h1v1h-1zm-2 1h2v1h-2zm-2 1h2v1h-2zm-1 1h1v1h-1zm-2 1h2v1h-2zm-2 1h2v1h-2zm-1 1h1v1h-1zm-2 1h2v1h-2zm-2 1h2v1h-2zm-1 1h1v1h-1zm-2 1h2v1h-2zm-2 1h2v1h-2zm-2 1h2v1h-2zm-1 1h1v1h-1zm-2 1h2v1h-2zm-2 1h2v1h-2zm-1 1h1v1h-1zm-2 1h2v1h-2zm-2 1h2v1h-2zm-1 1h1v1h-1zm-2 1h2v1h-2zm-2 1h2v1h-2z"/>
<path fill="url(#g53)" d="M1159 412v7h1v-7zm1 7v12h1v-12zm1 12v12h1v-12zm1 12v12h1v-12zm1 12v12h1v-12zm1 12v12h1v-12zm1 12v13h1v-13zm1 13v12h1v-12zm1 12v12h1v-12zm1 12v12h1v-12zm1 12v12h1v-12zm1 12v12h1v-12zm1 12v13h1v-13zm1 13v12h1v-12zm1 12v12h1v-12zm1 12v12h1v-12zm1 12v12h1v-12zm1 12v12h1v-12zm1 12v13h1v-13zm1 13v12h1v-12zm1 12v12h1v-12zm1 12v12h1v-12zm1 12v12h1v-12zm1 12v12h1v-12zm1 12v12h1v-12zm1 12v13h1v-13zm1 13v12h1v-12zm1 12v12h1v-12zm1 12v12h1v-12zm1 12v12h1v-12zm1 12v12h1v-12zm1 12v13h1v-13zm1 13v12h1v-12zm1 12v12h1v-12zm1 12v12h1v-12zm1 12v12h1v-12zm1 12v12h1v-12zm1 12v6h1v-6z"/>
<path fill="#f3af3d" d="M1159 412h1v1h-1zm-2 1h2v1h-2zm-2 1h2v1h-2zm-2 1h2v1h-2zm-1 1h1v1h-1zm-2 1h2v1h-2zm-2 1h2v1h-2zm-2 1h2v1h-2zm-1 1h1v1h-1zm-2 1h2v1h-2zm-2 1h2v1h-2zm-2 1h2v1h-2zm-2 1h2v1h-2zm-1 1h1v1h-1zm-2 1h2v1h-2zm-2 1h2v1h-2zm-2 1h2v1h-2zm-1 1h1v1h-1zm-2 1h2v1h-2zm-2 1h2v1h-2zm-2 1h2v1h-2z"/>
<path fill="#9a1f6a" d="M1196 862h1v1h-1zm1 1h2v1h-2zm2 1h2v1h-2zm2 1h1v1h-1zm1 1h2v1h-2zm2 1h2v1h-2zm2 1h1v1h-1zm1 1h2v1h-2zm2 1h2v1h-2zm2 1h1v1h-1zm1 1h2v1h-2zm2 1h2v1h-2zm2 1h2v1h-2zm2 1h1v1h-1zm1 1h2v1h-2zm2 1h2v1h-2zm2 1h1v1h-1zm1 1h2v1h-2zm2 1h2v1h-2zm2 1h1v1h-1zm1 1h2v1h-2zm2 1h2v1h-2zM1196 862h1v1h-1zm-2 1h2v1h-2zm-2 1h2v1h-2zm-1 1h1v1h-1zm-2 1h2v1h-2zm-2 1h2v1h-2zm-1 1h1v1h-1zm-2 1h2v1h-2zm-2 1h2v1h-2zm-1 1h1v1h-1zm-2 1h2v1h-2zm-2 1h2v1h-2zm-2 1h2v1h-2zm-1 1h1v1h-1zm-2 1h2v1h-2zm-2 1h2v1h-2zm-1 1h1v1h-1zm-2 1h2v1h-2zm-2 1h2v1h-2zm-1 1h1v1h-1zm-2 1h2v1h-2zm-2 1h2v1h-2zM1233 884h1v1h-1zm1 1h2v1h-2zm2 1h2v1h-2zm2 1h2v1h-2zm2 1h2v1h-2zm2 1h1v1h-1zm1 1h2v1h-2zm2 1h2v1h-2zm2 1h2v1h-2zm2 1h2v1h-2zm2 1h2v1h-2zm2 1h1v1h-1zm1 1h2v1h-2zm2 1h2v1h-2zm2 1h2v1h-2zm2 1h2v1h-2zm2 1h1v1h-1zm1 1h2v1h-2zm2 1h2v1h-2zm2 1h2v1h-2zm2 1h2v1h-2zM1233 884h1v1h-1zm-2 1h2v1h-2zm-2 1h2v1h-2zm-2 1h2v1h-2zm-1 1h1v1h-1zm-2 1h2v1h-2zm-2 1h2v1h-2zm-2 1h2v1h-2zm-1 1h1v1h-1zm-2 1h2v1h-2zm-2 1h2v1h-2zm-2 1h2v1h-2zm-2 1h2v1h-2zm-1 1h1v1h-1zm-2 1h2v1h-2zm-2 1h2v1h-2zm-2 1h2v1h-2zm-1 1h1v1h-1zm-2 1h2v1h-2zm-2 1h2v1h-2zm-2 1h2v1h-2zM1271 905h1v1h-1zm1 1h2v1h-2zm2 1h2v1h-2zm2 1h1v1h-1zm1 1h2v1h-2zm2 1h2v1h-2zm2 1h1v1h-1zm1 1h2v1h-2zm2 1h2v1h-2zm2 1h1v1h-1zm1 1h2v1h-2zm2 1h2v1h-2zm2 1h2v1h-2zm2 1h1v1h-1zm1 1h2v1h-2zm2 1h2v1h-2zm2 1h1v1h-1zm1 1h2v1h-2zm2 1h2v1h-2zm2 1h1v1h-1zm1 1h2v1h-2zm2 1h2v1h-2zM1271 905h1v1h-1zm-2 1h2v1h-2zm-2 1h2v1h-2zm-2 1h2v1h-2zm-1 1h1v1h-1zm-2 1h2v1h-2zm-2 1h2v1h-2zm-1 1h1v1h-1zm-2 1h2v1h-2zm-2 1h2v1h-2zm-2 1h2v1h-2zm-1 1h1v1h-1zm-2 1h2v1h-2zm-2 1h2v1h-2zm-2 1h2v1h-2zm-1 1h1v1h-1zm-2 1h2v1h-2zm-2 1h2v1h-2zm-1 1h1v1h-1zm-2 1h2v1h-2zm-2 1h2v1h-2zm-2 1h2v1h-2zM1308 927h1v1h-1zm1 1h2v1h-2zm2 1h2v1h-2zm2 1h2v1h-2zm2 1h1v1h-1zm1 1h2v1h-2zm2 1h2v1h-2zm2 1h2v1h-2zm2 1h1v1h-1zm1 1h2v1h-2zm2 1h2v1h-2zm2 1h2v1h-2zm2 1h2v1h-2zm2 1h1v1h-1zm1 1h2v1h-2zm2 1h2v1h-2zm2 1h2v1h-2zm2 1h1v1h-1zm1 1h2v1h-2zm2 1h2v1h-2zm2 1h2v1h-2zM1308 927h1v1h-1zm-2 1h2v1h-2zm-2 1h2v1h-2zm-2 1h2v1h-2zm-1 1h1v1h-1zm-2 1h2v1h-2zm-2 1h2v1h-2zm-2 1h2v1h-2zm-1 1h1v1h-1zm-2 1h2v1h-2zm-2 1h2v1h-2zm-2 1h2v1h-2zm-2 1h2v1h-2zm-1 1h1v1h-1zm-2 1h2v1h-2zm-2 1h2v1h-2zm-2 1h2v1h-2zm-1 1h1v1h-1zm-2 1h2v1h-2zm-2 1h2v1h-2zm-2 1h2v1h-2zM1345 948h1v1h-1zm1 1h2v1h-2zm2 1h2v1h-2zm2 1h1v1h-1zm1 1h2v1h-2zm2 1h2v1h-2zm2 1h1v1h-1zm1 1h2v1h-2zm2 1h2v1h-2zm2 1h1v1h-1zm1 1h2v1h-2zm2 1h2v1h-2zm2 1h2v1h-2zm2 1h1v1h-1zm1 1h2v1h-2zm2 1h2v1h-2zm2 1h1v1h-1zm1 1h2v1h-2zm2 1h2v1h-2zm2 1h1v1h-1zm1 1h2v1h-2zm2 1h2v1h-2zM1345 948h1v1h-1zm-2 1h2v1h-2zm-2 1h2v1h-2zm-1 1h1v1h-1zm-2 1h2v1h-2zm-2 1h2v1h-2zm-1 1h1v1h-1zm-2 1h2v1h-2zm-2 1h2v1h-2zm-1 1h1v1h-1zm-2 1h2v1h-2zm-2 1h2v1h-2zm-2 1h2v1h-2zm-1 1h1v1h-1zm-2 1h2v1h-2zm-2 1h2v1h-2zm-1 1h1v1h-1zm-2 1h2v1h-2zm-2 1h2v1h-2zm-1 1h1v1h-1zm-2 1h2v1h-2zm-2 1h2v1h-2zM1382 970h1v1h-1zm-2 1h2v1h-2zm-2 1h2v1h-2zm-2 1h2v1h-2zm-1 1h1v1h-1zm-2 1h2v1h-2zm-2 1h2v1h-2zm-2 1h2v1h-2zm-1 1h1v1h-1zm-2 1h2v1h-2zm-2 1h2v1h-2zm-2 1h2v1h-2zm-2 1h2v1h-2zm-1 1h1v1h-1zm-2 1h2v1h-2zm-2 1h2v1h-2zm-2 1h2v1h-2zm-1 1h1v1h-1zm-2 1h2v1h-2zm-2 1h2v1h-2zm-2 1h2v1h-2zM676 605h1v1h-1zm1 1h2v1h-2zm2 1h2v1h-2zm2 1h2v1h-2zm2 1h1v1h-1zm1 1h2v1h-2zm2 1h2v1h-2zm2 1h2v1h-2zm2 1h1v1h-1zm1 1h2v1h-2zm2 1h2v1h-2zm2 1h2v1h-2zm2 1h2v1h-2zm2 1h1v1h-1zm1 1h2v1h-2zm2 1h2v1h-2zm2 1h2v1h-2zm2 1h1v1h-1zm1 1h2v1h-2zm2 1h2v1h-2zm2 1h2v1h-2zM676 605h1v1h-1zm-2 1h2v1h-2zm-2 1h2v1h-2zm-2 1h2v1h-2zm-1 1h1v1h-1zm-2 1h2v1h-2zm-2 1h2v1h-2zm-2 1h2v1h-2zm-1 1h1v1h-1zm-2 1h2v1h-2zm-2 1h2v1h-2zm-2 1h2v1h-2zm-2 1h2v1h-2zm-1 1h1v1h-1zm-2 1h2v1h-2zm-2 1h2v1h-2zm-2 1h2v1h-2zm-1 1h1v1h-1zm-2 1h2v1h-2zm-2 1h2v1h-2zm-2 1h2v1h-2zM713 626h1v1h-1zm1 1h2v1h-2zm2 1h2v1h-2zm2 1h1v1h-1zm1 1h2v1h-2zm2 1h2v1h-2zm2 1h1v1h-1zm1 1h2v1h-2zm2 1h2v1h-2zm2 1h1v1h-1zm1 1h2v1h-2zm2 1h2v1h-2zm2 1h2v1h-2zm2 1h1v1h-1zm1 1h2v1h-2zm2 1h2v1h-2zm2 1h1v1h-1zm1 1h2v1h-2zm2 1h2v1h-2zm2 1h1v1h-1zm1 1h2v1h-2zm2 1h2v1h-2zM713 626h1v1h-1zm-2 1h2v1h-2zm-2 1h2v1h-2zm-1 1h1v1h-1zm-2 1h2v1h-2zm-2 1h2v1h-2zm-1 1h1v1h-1zm-2 1h2v1h-2zm-2 1h2v1h-2zm-1 1h1v1h-1zm-2 1h2v1h-2zm-2 1h2v1h-2zm-2 1h2v1h-2zm-1 1h1v1h-1zm-2 1h2v1h-2zm-2 1h2v1h-2zm-1 1h1v1h-1zm-2 1h2v1h-2zm-2 1h2v1h-2zm-1 1h1v1h-1zm-2 1h2v1h-2zm-2 1h2v1h-2zM750 648h1v1h-1zm1 1h2v1h-2zm2 1h2v1h-2zm2 1h2v1h-2zm2 1h2v1h-2zm2 1h1v1h-1zm1 1h2v1h-2zm2 1h2v1h-2zm2 1h2v1h-2zm2 1h2v1h-2zm2 1h2v1h-2zm2 1h1v1h-1zm1 1h2v1h-2zm2 1h2v1h-2zm2 1h2v1h-2zm2 1h2v1h-2zm2 1h1v1h-1zm1 1h2v1h-2zm2 1h2v1h-2zm2 1h2v1h-2zm2 1h2v1h-2zM750 648h1v1h-1zm-2 1h2v1h-2zm-2 1h2v1h-2zm-2 1h2v1h-2zm-1 1h1v1h-1zm-2 1h2v1h-2zm-2 1h2v1h-2zm-2 1h2v1h-2zm-1 1h1v1h-1zm-2 1h2v1h-2zm-2 1h2v1h-2zm-2 1h2v1h-2zm-2 1h2v1h-2zm-1 1h1v1h-1zm-2 1h2v1h-2zm-2 1h2v1h-2zm-2 1h2v1h-2zm-1 1h1v1h-1zm-2 1h2v1h-2zm-2 1h2v1h-2zm-2 1h2v1h-2zM788 669h1v1h-1zm1 1h2v1h-2zm2 1h2v1h-2zm2 1h1v1h-1zm1 1h2v1h-2zm2 1h2v1h-2zm2 1h1v1h-1zm1 1h2v1h-2zm2 1h2v1h-2zm2 1h1v1h-1zm1 1h2v1h-2zm2 1h2v1h-2zm2 1h2v1h-2zm2 1h1v1h-1zm1 1h2v1h-2zm2 1h2v1h-2zm2 1h1v1h-1zm1 1h2v1h-2zm2 1h2v1h-2zm2 1h1v1h-1zm1 1h2v1h-2zm2 1h2v1h-2zM788 669h1v1h-1zm-2 1h2v1h-2zm-2 1h2v1h-2zm-2 1h2v1h-2zm-1 1h1v1h-1zm-2 1h2v1h-2zm-2 1h2v1h-2zm-1 1h1v1h-1zm-2 1h2v1h-2zm-2 1h2v1h-2zm-2 1h2v1h-2zm-1 1h1v1h-1zm-2 1h2v1h-2zm-2 1h2v1h-2zm-2 1h2v1h-2zm-1 1h1v1h-1zm-2 1h2v1h-2zm-2 1h2v1h-2zm-1 1h1v1h-1zm-2 1h2v1h-2zm-2 1h2v1h-2zm-2 1h2v1h-2zM825 691h1v1h-1zm1 1h2v1h-2zm2 1h2v1h-2zm2 1h2v1h-2zm2 1h1v1h-1zm1 1h2v1h-2zm2 1h2v1h-2zm2 1h2v1h-2zm2 1h1v1h-1zm1 1h2v1h-2zm2 1h2v1h-2zm2 1h2v1h-2zm2 1h2v1h-2zm2 1h1v1h-1zm1 1h2v1h-2zm2 1h2v1h-2zm2 1h2v1h-2zm2 1h1v1h-1zm1 1h2v1h-2zm2 1h2v1h-2zm2 1h2v1h-2zM825 691h1v1h-1zm-2 1h2v1h-2zm-2 1h2v1h-2zm-2 1h2v1h-2zm-1 1h1v1h-1zm-2 1h2v1h-2zm-2 1h2v1h-2zm-2 1h2v1h-2zm-1 1h1v1h-1zm-2 1h2v1h-2zm-2 1h2v1h-2zm-2 1h2v1h-2zm-2 1h2v1h-2zm-1 1h1v1h-1zm-2 1h2v1h-2zm-2 1h2v1h-2zm-2 1h2v1h-2zm-1 1h1v1h-1zm-2 1h2v1h-2zm-2 1h2v1h-2zm-2 1h2v1h-2z"/>
<path fill="url(#g54)" d="M862 707v6h1v-6zm1 -11v11h1v-11zm1 -11v11h1v-11zm1 -11v11h1v-11zm1 -11v11h1v-11zm1 -11v11h1v-11zm1 -11v11h1v-11zm1 -11v11h1v-11zm1 -11v11h1v-11zm1 -11v11h1v-11zm1 -11v11h1v-11zm1 -11v11h1v-11zm1 -11v11h1v-11zm1 -11v11h1v-11zm1 -11v11h1v-11zm1 -11v11h1v-11zm1 -11v11h1v-11zm1 -11v11h1v-11zm1 -12v12h1v-12zm1 -11v11h1v-11zm1 -11v11h1v-11zm1 -11v11h1v-11zm1 -11v11h1v-11zm1 -11v11h1v-11zm1 -11v11h1v-11zm1 -11v11h1v-11zm1 -11v11h1v-11zm1 -11v11h1v-11zm1 -11v11h1v-11zm1 -11v11h1v-11zm1 -11v11h1v-11zm1 -11v11h1v-11zm1 -11v11h1v-11zm1 -11v11h1v-11zm1 -11v11h1v-11zm1 -11v11h1v-11zm1 -11v11h1v-11zm1 -5v5h1v-5z"/>
<path fill="#9a1f6a" d="M862 712h1v1h-1zm-2 1h2v1h-2zm-2 1h2v1h-2zm-1 1h1v1h-1zm-2 1h2v1h-2zm-2 1h2v1h-2zm-1 1h1v1h-1zm-2 1h2v1h-2zm-2 1h2v1h-2zm-1 1h1v1h-1zm-2 1h2v1h-2zm-2 1h2v1h-2zm-2 1h2v1h-2zm-1 1h1v1h-1zm-2 1h2v1h-2zm-2 1h2v1h-2zm-1 1h1v1h-1zm-2 1h2v1h-2zm-2 1h2v1h-2zm-1 1h1v1h-1zm-2 1h2v1h-2zm-2 1h2v1h-2z"/>
<path fill="#f3af3d" d="M899 304h1v1h-1zm1 1h2v1h-2zm2 1h2v1h-2zm2 1h2v1h-2zm2 1h2v1h-2zm2 1h1v1h-1zm1 1h2v1h-2zm2 1h2v1h-2zm2 1h2v1h-2zm2 1h2v1h-2zm2 1h2v1h-2zm2 1h1v1h-1zm1 1h2v1h-2zm2 1h2v1h-2zm2 1h2v1h-2zm2 1h2v1h-2zm2 1h1v1h-1zm1 1h2v1h-2zm2 1h2v1h-2zm2 1h2v1h-2zm2 1h2v1h-2zM899 304h1v1h-1zm-2 1h2v1h-2zm-2 1h2v1h-2zm-2 1h2v1h-2zm-1 1h1v1h-1zm-2 1h2v1h-2zm-2 1h2v1h-2zm-2 1h2v1h-2zm-1 1h1v1h-1zm-2 1h2v1h-2zm-2 1h2v1h-2zm-2 1h2v1h-2zm-2 1h2v1h-2zm-1 1h1v1h-1zm-2 1h2v1h-2zm-2 1h2v1h-2zm-2 1h2v1h-2zm-1 1h1v1h-1zm-2 1h2v1h-2zm-2 1h2v1h-2zm-2 1h2v1h-2z"/>
<path fill="url(#g55)" d="M937 325v7h1v-7zm1 7v12h1v-12zm1 12v12h1v-12zm1 12v12h1v-12zm1 12v12h1v-12zm1 12v13h1v-13zm1 13v12h1v-12zm1 12v12h1v-12zm1 12v12h1v-12zm1 12v12h1v-12zm1 12v12h1v-12zm1 12v13h1v-13zm1 13v12h1v-12zm1 12v12h1v-12zm1 12v12h1v-12zm1 12v12h1v-12zm1 12v13h1v-13zm1 13v12h1v-12zm1 12v12h1v-12zm1 12v12h1v-12zm1 12v12h1v-12zm1 12v13h1v-13zm1 13v12h1v-12zm1 12v12h1v-12zm1 12v12h1v-12zm1 12v12h1v-12zm1 12v13h1v-13zm1 13v12h1v-12zm1 12v12h1v-12zm1 12v12h1v-12zm1 12v12h1v-12zm1 12v12h1v-12zm1 12v13h1v-13zm1 13v12h1v-12zm1 12v12h1v-12zm1 12v12h1v-12zm1 12v12h1v-12zm1 12v6h1v-6z"/>
<path fill="#f3af3d" d="M937 325h1v1h-1zm-2 1h2v1h-2zm-2 1h2v1h-2zm-2 1h2v1h-2zm-1 1h1v1h-1zm-2 1h2v1h-2zm-2 1h2v1h-2zm-1 1h1v1h-1zm-2 1h2v1h-2zm-2 1h2v1h-2zm-2 1h2v1h-2zm-1 1h1v1h-1zm-2 1h2v1h-2zm-2 1h2v1h-2zm-2 1h2v1h-2zm-1 1h1v1h-1zm-2 1h2v1h-2zm-2 1h2v1h-2zm-1 1h1v1h-1zm-2 1h2v1h-2zm-2 1h2v1h-2zm-2 1h2v1h-2z"/>
<path fill="#9a1f6a" d="M974 776h1v1h-1zm1 1h2v1h-2zm2 1h2v1h-2zm2 1h1v1h-1zm1 1h2v1h-2zm2 1h2v1h-2zm2 1h1v1h-1zm1 1h2v1h-2zm2 1h2v1h-2zm2 1h1v1h-1zm1 1h2v1h-2zm2 1h2v1h-2zm2 1h2v1h-2zm2 1h1v1h-1zm1 1h2v1h-2zm2 1h2v1h-2zm2 1h1v1h-1zm1 1h2v1h-2zm2 1h2v1h-2zm2 1h1v1h-1zm1 1h2v1h-2zm2 1h2v1h-2zM974 776h1v1h-1zm-2 1h2v1h-2zm-2 1h2v1h-2zm-1 1h1v1h-1zm-2 1h2v1h-2zm-2 1h2v1h-2zm-1 1h1v1h-1zm-2 1h2v1h-2zm-2 1h2v1h-2zm-1 1h1v1h-1zm-2 1h2v1h-2zm-2 1h2v1h-2zm-2 1h2v1h-2zm-1 1h1v1h-1zm-2 1h2v1h-2zm-2 1h2v1h-2zm-1 1h1v1h-1zm-2 1h2v1h-2zm-2 1h2v1h-2zm-1 1h1v1h-1zm-2 1h2v1h-2zm-2 1h2v1h-2zM1011 798h1v1h-1zm1 1h2v1h-2zm2 1h2v1h-2zm2 1h2v1h-2zm2 1h1v1h-1zm1 1h2v1h-2zm2 1h2v1h-2zm2 1h2v1h-2zm2 1h1v1h-1zm1 1h2v1h-2zm2 1h2v1h-2zm2 1h2v1h-2zm2 1h2v1h-2zm2 1h1v1h-1zm1 1h2v1h-2zm2 1h2v1h-2zm2 1h2v1h-2zm2 1h1v1h-1zm1 1h2v1h-2zm2 1h2v1h-2zm2 1h2v1h-2zM1011 798h1v1h-1zm-2 1h2v1h-2zm-2 1h2v1h-2zm-2 1h2v1h-2zm-1 1h1v1h-1zm-2 1h2v1h-2zm-2 1h2v1h-2zm-2 1h2v1h-2zm-1 1h1v1h-1zm-2 1h2v1h-2zm-2 1h2v1h-2zm-2 1h2v1h-2zm-2 1h2v1h-2zm-1 1h1v1h-1zm-2 1h2v1h-2zm-2 1h2v1h-2zm-2 1h2v1h-2zm-1 1h1v1h-1zm-2 1h2v1h-2zm-2 1h2v1h-2zm-2 1h2v1h-2z"/>
<path fill="url(#g56)" d="M1048 814v6h1v-6zm1 -11v11h1v-11zm1 -11v11h1v-11zm1 -11v11h1v-11zm1 -11v11h1v-11zm1 -11v11h1v-11zm1 -11v11h1v-11zm1 -11v11h1v-11zm1 -11v11h1v-11zm1 -11v11h1v-11zm1 -11v11h1v-11zm1 -11v11h1v-11zm1 -11v11h1v-11zm1 -11v11h1v-11zm1 -11v11h1v-11zm1 -11v11h1v-11zm1 -11v11h1v-11zm1 -11v11h1v-11zm1 -11v11h1v-11zm1 -11v11h1v-11zm1 -11v11h1v-11zm1 -11v11h1v-11zm1 -11v11h1v-11zm1 -11v11h1v-11zm1 -11v11h1v-11zm1 -11v11h1v-11zm1 -11v11h1v-11zm1 -11v11h1v-11zm1 -11v11h1v-11zm1 -11v11h1v-11zm1 -11v11h1v-11zm1 -11v11h1v-11zm1 -11v11h1v-11zm1 -11v11h1v-11zm1 -11v11h1v-11zm1 -11v11h1v-11zm1 -11v11h1v-11zm1 -5v5h1v-5z"/>
<path fill="#9a1f6a" d="M1048 819h1v1h-1zm-2 1h2v1h-2zm-2 1h2v1h-2zm-1 1h1v1h-1zm-2 1h2v1h-2zm-2 1h2v1h-2zm-1 1h1v1h-1zm-2 1h2v1h-2zm-2 1h2v1h-2zm-1 1h1v1h-1zm-2 1h2v1h-2zm-2 1h2v1h-2zm-2 1h2v1h-2zm-1 1h1v1h-1zm-2 1h2v1h-2zm-2 1h2v1h-2zm-1 1h1v1h-1zm-2 1h2v1h-2zm-2 1h2v1h-2zm-1 1h1v1h-1zm-2 1h2v1h-2zm-2 1h2v1h-2z"/>
<path fill="#f3af3d" d="M1085 412h1v1h-1zm1 1h2v1h-2zm2 1h2v1h-2zm2 1h2v1h-2zm2 1h1v1h-1zm1 1h2v1h-2zm2 1h2v1h-2zm2 1h2v1h-2zm2 1h1v1h-1zm1 1h2v1h-2zm2 1h2v1h-2zm2 1h2v1h-2zm2 1h2v1h-2zm2 1h1v1h-1zm1 1h2v1h-2zm2 1h2v1h-2zm2 1h2v1h-2zm2 1h1v1h-1zm1 1h2v1h-2zm2 1h2v1h-2zm2 1h2v1h-2zM1085 412h1v1h-1zm-2 1h2v1h-2zm-2 1h2v1h-2zm-2 1h2v1h-2zm-1 1h1v1h-1zm-2 1h2v1h-2zm-2 1h2v1h-2zm-2 1h2v1h-2zm-1 1h1v1h-1zm-2 1h2v1h-2zm-2 1h2v1h-2zm-2 1h2v1h-2zm-2 1h2v1h-2zm-1 1h1v1h-1zm-2 1h2v1h-2zm-2 1h2v1h-2zm-2 1h2v1h-2zm-1 1h1v1h-1zm-2 1h2v1h-2zm-2 1h2v1h-2zm-2 1h2v1h-2z"/>
<path fill="url(#g57)" d="M1122 433v7h1v-7zm1 7v12h1v-12zm1 12v12h1v-12zm1 12v12h1v-12zm1 12v12h1v-12zm1 12v13h1v-13zm1 13v12h1v-12zm1 12v12h1v-12zm1 12v12h1v-12zm1 12v12h1v-12zm1 12v12h1v-12zm1 12v13h1v-13zm1 13v12h1v-12zm1 12v12h1v-12zm1 12v12h1v-12zm1 12v12h1v-12zm1 12v13h1v-13zm1 13v12h1v-12zm1 12v12h1v-12zm1 12v12h1v-12zm1 12v12h1v-12zm1 12v13h1v-13zm1 13v12h1v-12zm1 12v12h1v-12zm1 12v12h1v-12zm1 12v12h1v-12zm1 12v13h1v-13zm1 13v12h1v-12zm1 12v12h1v-12zm1 12v12h1v-12zm1 12v12h1v-12zm1 12v12h1v-12zm1 12v13h1v-13zm1 13v12h1v-12zm1 12v12h1v-12zm1 12v12h1v-12zm1 12v12h1v-12zm1 12v6h1v-6z"/>
<path fill="#f3af3d" d="M1122 433h1v1h-1zm-2 1h2v1h-2zm-2 1h2v1h-2zm-1 1h1v1h-1zm-2 1h2v1h-2zm-2 1h2v1h-2zm-1 1h1v1h-1zm-2 1h2v1h-2zm-2 1h2v1h-2zm-1 1h1v1h-1zm-2 1h2v1h-2zm-2 1h2v1h-2zm-2 1h2v1h-2zm-1 1h1v1h-1zm-2 1h2v1h-2zm-2 1h2v1h-2zm-1 1h1v1h-1zm-2 1h2v1h-2zm-2 1h2v1h-2zm-1 1h1v1h-1zm-2 1h2v1h-2zm-2 1h2v1h-2z"/>
<path fill="#9a1f6a" d="M1159 884h1v1h-1zm1 1h2v1h-2zm2 1h2v1h-2zm2 1h2v1h-2zm2 1h1v1h-1zm1 1h2v1h-2zm2 1h2v1h-2zm2 1h2v1h-2zm2 1h1v1h-1zm1 1h2v1h-2zm2 1h2v1h-2zm2 1h2v1h-2zm2 1h2v1h-2zm2 1h1v1h-1zm1 1h2v1h-2zm2 1h2v1h-2zm2 1h2v1h-2zm2 1h1v1h-1zm1 1h2v1h-2zm2 1h2v1h-2zm2 1h2v1h-2z"/>
<path fill="url(#g58)" d="M1122 477v5h1v-5zm1 5v11h1v-11zm1 11v11h1v-11zm1 11v11h1v-11zm1 11v11h1v-11zm1 11v11h1v-11zm1 11v11h1v-11zm1 11v11h1v-11zm1 11v11h1v-11zm1 11v11h1v-11zm1 11v11h1v-11zm1 11v11h1v-11zm1 11v11h1v-11zm1 11v11h1v-11zm1 11v11h1v-11zm1 11v11h1v-11zm1 11v11h1v-11zm1 11v11h1v-11zm1 11v11h1v-11zm1 11v12h1v-12zm1 12v11h1v-11zm1 11v11h1v-11zm1 11v11h1v-11zm1 11v11h1v-11zm1 11v11h1v-11zm1 11v11h1v-11zm1 11v11h1v-11zm1 11v11h1v-11zm1 11v11h1v-11zm1 11v11h1v-11zm1 11v11h1v-11zm1 11v11h1v-11zm1 11v11h1v-11zm1 11v11h1v-11zm1 11v11h1v-11zm1 11v11h1v-11zm1 11v11h1v-11zm1 11v6h1v-6z"/>
<path fill="#9a1f6a" d="M1196 905h1v1h-1zm1 1h2v1h-2zm2 1h2v1h-2zm2 1h1v1h-1zm1 1h2v1h-2zm2 1h2v1h-2zm2 1h1v1h-1zm1 1h2v1h-2zm2 1h2v1h-2zm2 1h1v1h-1zm1 1h2v1h-2zm2 1h2v1h-2zm2 1h2v1h-2zm2 1h1v1h-1zm1 1h2v1h-2zm2 1h2v1h-2zm2 1h1v1h-1zm1 1h2v1h-2zm2 1h2v1h-2zm2 1h1v1h-1zm1 1h2v1h-2zm2 1h2v1h-2z"/>
<path fill="url(#g59)" d="M1159 499v5h1v-5zm1 5v11h1v-11zm1 11v11h1v-11zm1 11v11h1v-11zm1 11v11h1v-11zm1 11v11h1v-11zm1 11v11h1v-11zm1 11v11h1v-11zm1 11v11h1v-11zm1 11v11h1v-11zm1 11v11h1v-11zm1 11v11h1v-11zm1 11v11h1v-11zm1 11v11h1v-11zm1 11v11h1v-11zm1 11v11h1v-11zm1 11v11h1v-11zm1 11v11h1v-11zm1 11v11h1v-11zm1 11v11h1v-11zm1 11v11h1v-11zm1 11v11h1v-11zm1 11v11h1v-11zm1 11v11h1v-11zm1 11v11h1v-11zm1 11v11h1v-11zm1 11v11h1v-11zm1 11v11h1v-11zm1 11v11h1v-11zm1 11v11h1v-11zm1 11v11h1v-11zm1 11v11h1v-11zm1 11v11h1v-11zm1 11v11h1v-11zm1 11v11h1v-11zm1 11v11h1v-11zm1 11v11h1v-11zm1 11v6h1v-6z"/>
<path fill="#9a1f6a" d="M1233 927h1v1h-1zm1 1h2v1h-2zm2 1h2v1h-2zm2 1h2v1h-2zm2 1h2v1h-2zm2 1h1v1h-1zm1 1h2v1h-2zm2 1h2v1h-2zm2 1h2v1h-2zm2 1h2v1h-2zm2 1h2v1h-2zm2 1h1v1h-1zm1 1h2v1h-2zm2 1h2v1h-2zm2 1h2v1h-2zm2 1h2v1h-2zm2 1h1v1h-1zm1 1h2v1h-2zm2 1h2v1h-2zm2 1h2v1h-2zm2 1h2v1h-2z"/>
<path fill="url(#g60)" d="M1196 520v5h1v-5zm1 5v11h1v-11zm1 11v11h1v-11zm1 11v11h1v-11zm1 11v11h1v-11zm1 11v11h1v-11zm1 11v11h1v-11zm1 11v11h1v-11zm1 11v11h1v-11zm1 11v11h1v-11zm1 11v11h1v-11zm1 11v11h1v-11zm1 11v11h1v-11zm1 11v11h1v-11zm1 11v11h1v-11zm1 11v11h1v-11zm1 11v11h1v-11zm1 11v11h1v-11zm1 11v11h1v-11zm1 11v12h1v-12zm1 12v11h1v-11zm1 11v11h1v-11zm1 11v11h1v-11zm1 11v11h1v-11zm1 11v11h1v-11zm1 11v11h1v-11zm1 11v11h1v-11zm1 11v11h1v-11zm1 11v11h1v-11zm1 11v11h1v-11zm1 11v11h1v-11zm1 11v11h1v-11zm1 11v11h1v-11zm1 11v11h1v-11zm1 11v11h1v-11zm1 11v11h1v-11zm1 11v11h1v-11zm1 11v6h1v-6z"/>
<path fill="#9a1f6a" d="M1271 948h1v1h-1zm1 1h2v1h-2zm2 1h2v1h-2zm2 1h1v1h-1zm1 1h2v1h-2zm2 1h2v1h-2zm2 1h1v1h-1zm1 1h2v1h-2zm2 1h2v1h-2zm2 1h1v1h-1zm1 1h2v1h-2zm2 1h2v1h-2zm2 1h2v1h-2zm2 1h1v1h-1zm1 1h2v1h-2zm2 1h2v1h-2zm2 1h1v1h-1zm1 1h2v1h-2zm2 1h2v1h-2zm2 1h1v1h-1zm1 1h2v1h-2zm2 1h2v1h-2z"/>
<path fill="url(#g61)" d="M1233 542v5h1v-5zm1 5v11h1v-11zm1 11v10h1v-10zm1 10v11h1v-11zm1 11v11h1v-11zm1 11v10h1v-10zm1 10v11h1v-11zm1 11v11h1v-11zm1 11v11h1v-11zm1 11v10h1v-10zm1 10v11h1v-11zm1 11v11h1v-11zm1 11v10h1v-10zm1 10v11h1v-11zm1 11v11h1v-11zm1 11v11h1v-11zm1 11v10h1v-10zm1 10v11h1v-11zm1 11v11h1v-11zm1 11v10h1v-10zm1 10v11h1v-11zm1 11v11h1v-11zm1 11v10h1v-10zm1 10v11h1v-11zm1 11v11h1v-11zm1 11v11h1v-11zm1 11v10h1v-10zm1 10v11h1v-11zm1 11v11h1v-11zm1 11v10h1v-10zm1 10v11h1v-11zm1 11v11h1v-11zm1 11v11h1v-11zm1 11v10h1v-10zm1 10v11h1v-11zm1 11v11h1v-11zm1 11v10h1v-10zm1 10v11h1v-11zm1 11v6h1v-6z"/>
<path fill="#9a1f6a" d="M1308 970h1v1h-1zm1 1h2v1h-2zm2 1h2v1h-2zm2 1h2v1h-2zm2 1h1v1h-1zm1 1h2v1h-2zm2 1h2v1h-2zm2 1h2v1h-2zm2 1h1v1h-1zm1 1h2v1h-2zm2 1h2v1h-2zm2 1h2v1h-2zm2 1h2v1h-2zm2 1h1v1h-1zm1 1h2v1h-2zm2 1h2v1h-2zm2 1h2v1h-2zm2 1h1v1h-1zm1 1h2v1h-2zm2 1h2v1h-2zm2 1h2v1h-2zM1308 970h1v1h-1zm-2 1h2v1h-2zm-2 1h2v1h-2zm-2 1h2v1h-2zm-1 1h1v1h-1zm-2 1h2v1h-2zm-2 1h2v1h-2zm-2 1h2v1h-2zm-1 1h1v1h-1zm-2 1h2v1h-2zm-2 1h2v1h-2zm-2 1h2v1h-2zm-2 1h2v1h-2zm-1 1h1v1h-1zm-2 1h2v1h-2zm-2 1h2v1h-2zm-2 1h2v1h-2zm-1 1h1v1h-1zm-2 1h2v1h-2zm-2 1h2v1h-2zm-2 1h2v1h-2zM1345 991h1v1h-1zm-2 1h2v1h-2zm-2 1h2v1h-2zm-1 1h1v1h-1zm-2 1h2v1h-2zm-2 1h2v1h-2zm-1 1h1v1h-1zm-2 1h2v1h-2zm-2 1h2v1h-2zm-1 1h1v1h-1zm-2 1h2v1h-2zm-2 1h2v1h-2zm-2 1h2v1h-2zm-1 1h1v1h-1zm-2 1h2v1h-2zm-2 1h2v1h-2zm-1 1h1v1h-1zm-2 1h2v1h-2zm-2 1h2v1h-2zm-1 1h1v1h-1zm-2 1h2v1h-2zm-2 1h2v1h-2zM639 626h1v1h-1zm1 1h2v1h-2zm2 1h2v1h-2zm2 1h1v1h-1zm1 1h2v1h-2zm2 1h2v1h-2zm2 1h1v1h-1zm1 1h2v1h-2zm2 1h2v1h-2zm2 1h1v1h-1zm1 1h2v1h-2zm2 1h2v1h-2zm2 1h2v1h-2zm2 1h1v1h-1zm1 1h2v1h-2zm2 1h2v1h-2zm2 1h1v1h-1zm1 1h2v1h-2zm2 1h2v1h-2zm2 1h1v1h-1zm1 1h2v1h-2zm2 1h2v1h-2zM639 626h1v1h-1zm-2 1h2v1h-2zm-2 1h2v1h-2zm-2 1h2v1h-2zm-1 1h1v1h-1zm-2 1h2v1h-2zm-2 1h2v1h-2zm-1 1h1v1h-1zm-2 1h2v1h-2zm-2 1h2v1h-2zm-2 1h2v1h-2zm-1 1h1v1h-1zm-2 1h2v1h-2zm-2 1h2v1h-2zm-2 1h2v1h-2zm-1 1h1v1h-1zm-2 1h2v1h-2zm-2 1h2v1h-2zm-1 1h1v1h-1zm-2 1h2v1h-2zm-2 1h2v1h-2zm-2 1h2v1h-2zM676 648h1v1h-1zm1 1h2v1h-2zm2 1h2v1h-2zm2 1h2v1h-2zm2 1h1v1h-1zm1 1h2v1h-2zm2 1h2v1h-2zm2 1h2v1h-2zm2 1h1v1h-1zm1 1h2v1h-2zm2 1h2v1h-2zm2 1h2v1h-2zm2 1h2v1h-2zm2 1h1v1h-1zm1 1h2v1h-2zm2 1h2v1h-2zm2 1h2v1h-2zm2 1h1v1h-1zm1 1h2v1h-2zm2 1h2v1h-2zm2 1h2v1h-2zM676 648h1v1h-1zm-2 1h2v1h-2zm-2 1h2v1h-2zm-2 1h2v1h-2zm-1 1h1v1h-1zm-2 1h2v1h-2zm-2 1h2v1h-2zm-2 1h2v1h-2zm-1 1h1v1h-1zm-2 1h2v1h-2zm-2 1h2v1h-2zm-2 1h2v1h-2zm-2 1h2v1h-2zm-1 1h1v1h-1zm-2 1h2v1h-2zm-2 1h2v1h-2zm-2 1h2v1h-2zm-1 1h1v1h-1zm-2 1h2v1h-2zm-2 1h2v1h-2zm-2 1h2v1h-2zM713 669h1v1h-1zm1 1h2v1h-2zm2 1h2v1h-2zm2 1h1v1h-1zm1 1h2v1h-2zm2 1h2v1h-2zm2 1h1v1h-1zm1 1h2v1h-2zm2 1h2v1h-2zm2 1h1v1h-1zm1 1h2v1h-2zm2 1h2v1h-2zm2 1h2v1h-2zm2 1h1v1h-1zm1 1h2v1h-2zm2 1h2v1h-2zm2 1h1v1h-1zm1 1h2v1h-2zm2 1h2v1h-2zm2 1h1v1h-1zm1 1h2v1h-2zm2 1h2v1h-2zM713 669h1v1h-1zm-2 1h2v1h-2zm-2 1h2v1h-2zm-1 1h1v1h-1zm-2 1h2v1h-2zm-2 1h2v1h-2zm-1 1h1v1h-1zm-2 1h2v1h-2zm-2 1h2v1h-2zm-1 1h1v1h-1zm-2 1h2v1h-2zm-2 1h2v1h-2zm-2 1h2v1h-2zm-1 1h1v1h-1zm-2 1h2v1h-2zm-2 1h2v1h-2zm-1 1h1v1h-1zm-2 1h2v1h-2zm-2 1h2v1h-2zm-1 1h1v1h-1zm-2 1h2v1h-2zm-2 1h2v1h-2zM750 691h1v1h-1zm1 1h2v1h-2zm2 1h2v1h-2zm2 1h2v1h-2zm2 1h2v1h-2zm2 1h1v1h-1zm1 1h2v1h-2zm2 1h2v1h-2zm2 1h2v1h-2zm2 1h2v1h-2zm2 1h2v1h-2zm2 1h1v1h-1zm1 1h2v1h-2zm2 1h2v1h-2zm2 1h2v1h-2zm2 1h2v1h-2zm2 1h1v1h-1zm1 1h2v1h-2zm2 1h2v1h-2zm2 1h2v1h-2zm2 1h2v1h-2zM750 691h1v1h-1zm-2 1h2v1h-2zm-2 1h2v1h-2zm-2 1h2v1h-2zm-1 1h1v1h-1zm-2 1h2v1h-2zm-2 1h2v1h-2zm-2 1h2v1h-2zm-1 1h1v1h-1zm-2 1h2v1h-2zm-2 1h2v1h-2zm-2 1h2v1h-2zm-2 1h2v1h-2zm-1 1h1v1h-1zm-2 1h2v1h-2zm-2 1h2v1h-2zm-2 1h2v1h-2zm-1 1h1v1h-1zm-2 1h2v1h-2zm-2 1h2v1h-2zm-2 1h2v1h-2zM788 712h1v1h-1zm1 1h2v1h-2zm2 1h2v1h-2zm2 1h1v1h-1zm1 1h2v1h-2zm2 1h2v1h-2zm2 1h1v1h-1zm1 1h2v1h-2zm2 1h2v1h-2zm2 1h1v1h-1zm1 1h2v1h-2zm2 1h2v1h-2zm2 1h2v1h-2zm2 1h1v1h-1zm1 1h2v1h-2zm2 1h2v1h-2zm2 1h1v1h-1zm1 1h2v1h-2zm2 1h2v1h-2zm2 1h1v1h-1zm1 1h2v1h-2zm2 1h2v1h-2zM788 712h1v1h-1zm-2 1h2v1h-2zm-2 1h2v1h-2zm-2 1h2v1h-2zm-1 1h1v1h-1zm-2 1h2v1h-2zm-2 1h2v1h-2zm-1 1h1v1h-1zm-2 1h2v1h-2zm-2 1h2v1h-2zm-2 1h2v1h-2zm-1 1h1v1h-1zm-2 1h2v1h-2zm-2 1h2v1h-2zm-2 1h2v1h-2zm-1 1h1v1h-1zm-2 1h2v1h-2zm-2 1h2v1h-2zm-1 1h1v1h-1zm-2 1h2v1h-2zm-2 1h2v1h-2zm-2 1h2v1h-2z"/>
<path fill="url(#g62)" d="M825 729v6h1v-6zm1 -11v11h1v-11zm1 -11v11h1v-11zm1 -11v11h1v-11zm1 -11v11h1v-11zm1 -11v11h1v-11zm1 -11v11h1v-11zm1 -11v11h1v-11zm1 -11v11h1v-11zm1 -12v12h1v-12zm1 -11v11h1v-11zm1 -11v11h1v-11zm1 -11v11h1v-11zm1 -11v11h1v-11zm1 -11v11h1v-11zm1 -11v11h1v-11zm1 -11v11h1v-11zm1 -11v11h1v-11zm1 -11v11h1v-11zm1 -11v11h1v-11zm1 -11v11h1v-11zm1 -11v11h1v-11zm1 -11v11h1v-11zm1 -11v11h1v-11zm1 -11v11h1v-11zm1 -11v11h1v-11zm1 -11v11h1v-11zm1 -11v11h1v-11zm1 -12v12h1v-12zm1 -11v11h1v-11zm1 -11v11h1v-11zm1 -11v11h1v-11zm1 -11v11h1v-11zm1 -11v11h1v-11zm1 -11v11h1v-11zm1 -11v11h1v-11zm1 -11v11h1v-11zm1 -5v5h1v-5z"/>
<path fill="#9a1f6a" d="M825 734h1v1h-1zm-2 1h2v1h-2zm-2 1h2v1h-2zm-2 1h2v1h-2zm-1 1h1v1h-1zm-2 1h2v1h-2zm-2 1h2v1h-2zm-2 1h2v1h-2zm-1 1h1v1h-1zm-2 1h2v1h-2zm-2 1h2v1h-2zm-2 1h2v1h-2zm-2 1h2v1h-2zm-1 1h1v1h-1zm-2 1h2v1h-2zm-2 1h2v1h-2zm-2 1h2v1h-2zm-1 1h1v1h-1zm-2 1h2v1h-2zm-2 1h2v1h-2zm-2 1h2v1h-2z"/>
<path fill="#f3af3d" d="M862 325h1v1h-1zm1 1h2v1h-2zm2 1h2v1h-2zm2 1h1v1h-1zm1 1h2v1h-2zm2 1h2v1h-2zm2 1h1v1h-1zm1 1h2v1h-2zm2 1h2v1h-2zm2 1h1v1h-1zm1 1h2v1h-2zm2 1h2v1h-2zm2 1h2v1h-2zm2 1h1v1h-1zm1 1h2v1h-2zm2 1h2v1h-2zm2 1h1v1h-1zm1 1h2v1h-2zm2 1h2v1h-2zm2 1h1v1h-1zm1 1h2v1h-2zm2 1h2v1h-2z"/>
<path fill="url(#g63)" d="M825 770v6h1v-6zm1 -12v12h1v-12zm1 -12v12h1v-12zm1 -12v12h1v-12zm1 -12v12h1v-12zm1 -13v13h1v-13zm1 -12v12h1v-12zm1 -12v12h1v-12zm1 -12v12h1v-12zm1 -12v12h1v-12zm1 -12v12h1v-12zm1 -13v13h1v-13zm1 -12v12h1v-12zm1 -12v12h1v-12zm1 -12v12h1v-12zm1 -12v12h1v-12zm1 -13v13h1v-13zm1 -12v12h1v-12zm1 -12v12h1v-12zm1 -12v12h1v-12zm1 -12v12h1v-12zm1 -13v13h1v-13zm1 -12v12h1v-12zm1 -12v12h1v-12zm1 -12v12h1v-12zm1 -12v12h1v-12zm1 -13v13h1v-13zm1 -12v12h1v-12zm1 -12v12h1v-12zm1 -12v12h1v-12zm1 -12v12h1v-12zm1 -12v12h1v-12zm1 -13v13h1v-13zm1 -12v12h1v-12zm1 -12v12h1v-12zm1 -12v12h1v-12zm1 -12v12h1v-12zm1 -7v7h1v-7z"/>
<path fill="url(#g64)" d="M899 347v6h1v-6zm1 6v12h1v-12zm1 12v12h1v-12zm1 12v12h1v-12zm1 12v12h1v-12zm1 12v12h1v-12zm1 12v12h1v-12zm1 12v12h1v-12zm1 12v11h1v-11zm1 11v12h1v-12zm1 12v12h1v-12zm1 12v12h1v-12zm1 12v12h1v-12zm1 12v12h1v-12zm1 12v12h1v-12zm1 12v11h1v-11zm1 11v12h1v-12zm1 12v12h1v-12zm1 12v12h1v-12zm1 12v12h1v-12zm1 12v12h1v-12zm1 12v12h1v-12zm1 12v12h1v-12zm1 12v11h1v-11zm1 11v12h1v-12zm1 12v12h1v-12zm1 12v12h1v-12zm1 12v12h1v-12zm1 12v12h1v-12zm1 12v12h1v-12zm1 12v11h1v-11zm1 11v12h1v-12zm1 12v12h1v-12zm1 12v12h1v-12zm1 12v12h1v-12zm1 12v12h1v-12zm1 12v12h1v-12zm1 12v12h1v-12zm1 12v5h1v-5z"/>
<path fill="url(#g65)" d="M862 792v6h1v-6zm1 -12v12h1v-12zm1 -12v12h1v-12zm1 -12v12h1v-12zm1 -12v12h1v-12zm1 -13v13h1v-13zm1 -12v12h1v-12zm1 -12v12h1v-12zm1 -12v12h1v-12zm1 -12v12h1v-12zm1 -12v12h1v-12zm1 -13v13h1v-13zm1 -12v12h1v-12zm1 -12v12h1v-12zm1 -12v12h1v-12zm1 -12v12h1v-12zm1 -13v13h1v-13zm1 -12v12h1v-12zm1 -12v12h1v-12zm1 -12v12h1v-12zm1 -12v12h1v-12zm1 -13v13h1v-13zm1 -12v12h1v-12zm1 -12v12h1v-12zm1 -12v12h1v-12zm1 -12v12h1v-12zm1 -13v13h1v-13zm1 -12v12h1v-12zm1 -12v12h1v-12zm1 -12v12h1v-12zm1 -12v12h1v-12zm1 -12v12h1v-12zm1 -13v13h1v-13zm1 -12v12h1v-12zm1 -12v12h1v-12zm1 -12v12h1v-12zm1 -12v12h1v-12zm1 -7v7h1v-7z"/>
<path fill="#9a1f6a" d="M937 798h1v1h-1zm1 1h2v1h-2zm2 1h2v1h-2zm2 1h2v1h-2zm2 1h1v1h-1zm1 1h2v1h-2zm2 1h2v1h-2zm2 1h2v1h-2zm2 1h1v1h-1zm1 1h2v1h-2zm2 1h2v1h-2zm2 1h2v1h-2zm2 1h2v1h-2zm2 1h1v1h-1zm1 1h2v1h-2zm2 1h2v1h-2zm2 1h2v1h-2zm2 1h1v1h-1zm1 1h2v1h-2zm2 1h2v1h-2zm2 1h2v1h-2zM937 798h1v1h-1zm-2 1h2v1h-2zm-2 1h2v1h-2zm-2 1h2v1h-2zm-2 1h2v1h-2zm-1 1h1v1h-1zm-2 1h2v1h-2zm-2 1h2v1h-2zm-2 1h2v1h-2zm-2 1h2v1h-2zm-2 1h2v1h-2zm-1 1h1v1h-1zm-2 1h2v1h-2zm-2 1h2v1h-2zm-2 1h2v1h-2zm-2 1h2v1h-2zm-1 1h1v1h-1zm-2 1h2v1h-2zm-2 1h2v1h-2zm-2 1h2v1h-2zm-2 1h2v1h-2zM974 819h1v1h-1zm1 1h2v1h-2zm2 1h2v1h-2zm2 1h1v1h-1zm1 1h2v1h-2zm2 1h2v1h-2zm2 1h1v1h-1zm1 1h2v1h-2zm2 1h2v1h-2zm2 1h1v1h-1zm1 1h2v1h-2zm2 1h2v1h-2zm2 1h2v1h-2zm2 1h1v1h-1zm1 1h2v1h-2zm2 1h2v1h-2zm2 1h1v1h-1zm1 1h2v1h-2zm2 1h2v1h-2zm2 1h1v1h-1zm1 1h2v1h-2zm2 1h2v1h-2zM974 819h1v1h-1zm-2 1h2v1h-2zm-2 1h2v1h-2zm-1 1h1v1h-1zm-2 1h2v1h-2zm-2 1h2v1h-2zm-1 1h1v1h-1zm-2 1h2v1h-2zm-2 1h2v1h-2zm-1 1h1v1h-1zm-2 1h2v1h-2zm-2 1h2v1h-2zm-2 1h2v1h-2zm-1 1h1v1h-1zm-2 1h2v1h-2zm-2 1h2v1h-2zm-1 1h1v1h-1zm-2 1h2v1h-2zm-2 1h2v1h-2zm-1 1h1v1h-1zm-2 1h2v1h-2zm-2 1h2v1h-2z"/>
<path fill="url(#g66)" d="M1011 836v6h1v-6zm1 -11v11h1v-11zm1 -11v11h1v-11zm1 -11v11h1v-11zm1 -11v11h1v-11zm1 -11v11h1v-11zm1 -11v11h1v-11zm1 -11v11h1v-11zm1 -11v11h1v-11zm1 -11v11h1v-11zm1 -11v11h1v-11zm1 -11v11h1v-11zm1 -11v11h1v-11zm1 -11v11h1v-11zm1 -11v11h1v-11zm1 -11v11h1v-11zm1 -11v11h1v-11zm1 -11v11h1v-11zm1 -12v12h1v-12zm1 -11v11h1v-11zm1 -11v11h1v-11zm1 -11v11h1v-11zm1 -11v11h1v-11zm1 -11v11h1v-11zm1 -11v11h1v-11zm1 -11v11h1v-11zm1 -11v11h1v-11zm1 -11v11h1v-11zm1 -11v11h1v-11zm1 -11v11h1v-11zm1 -11v11h1v-11zm1 -11v11h1v-11zm1 -11v11h1v-11zm1 -11v11h1v-11zm1 -11v11h1v-11zm1 -11v11h1v-11zm1 -11v11h1v-11zm1 -5v5h1v-5z"/>
<path fill="#9a1f6a" d="M1011 841h1v1h-1zm-2 1h2v1h-2zm-2 1h2v1h-2zm-2 1h2v1h-2zm-1 1h1v1h-1zm-2 1h2v1h-2zm-2 1h2v1h-2zm-2 1h2v1h-2zm-1 1h1v1h-1zm-2 1h2v1h-2zm-2 1h2v1h-2zm-2 1h2v1h-2zm-2 1h2v1h-2zm-1 1h1v1h-1zm-2 1h2v1h-2zm-2 1h2v1h-2zm-2 1h2v1h-2zm-1 1h1v1h-1zm-2 1h2v1h-2zm-2 1h2v1h-2zm-2 1h2v1h-2z"/>
<path fill="#f3af3d" d="M1048 433h1v1h-1zm1 1h2v1h-2zm2 1h2v1h-2zm2 1h1v1h-1zm1 1h2v1h-2zm2 1h2v1h-2zm2 1h1v1h-1zm1 1h2v1h-2zm2 1h2v1h-2zm2 1h1v1h-1zm1 1h2v1h-2zm2 1h2v1h-2zm2 1h2v1h-2zm2 1h1v1h-1zm1 1h2v1h-2zm2 1h2v1h-2zm2 1h1v1h-1zm1 1h2v1h-2zm2 1h2v1h-2zm2 1h1v1h-1zm1 1h2v1h-2zm2 1h2v1h-2z"/>
<path fill="url(#g67)" d="M1011 878v6h1v-6zm1 -12v12h1v-12zm1 -12v12h1v-12zm1 -12v12h1v-12zm1 -12v12h1v-12zm1 -13v13h1v-13zm1 -12v12h1v-12zm1 -12v12h1v-12zm1 -12v12h1v-12zm1 -12v12h1v-12zm1 -12v12h1v-12zm1 -13v13h1v-13zm1 -12v12h1v-12zm1 -12v12h1v-12zm1 -12v12h1v-12zm1 -12v12h1v-12zm1 -13v13h1v-13zm1 -12v12h1v-12zm1 -12v12h1v-12zm1 -12v12h1v-12zm1 -12v12h1v-12zm1 -13v13h1v-13zm1 -12v12h1v-12zm1 -12v12h1v-12zm1 -12v12h1v-12zm1 -12v12h1v-12zm1 -13v13h1v-13zm1 -12v12h1v-12zm1 -12v12h1v-12zm1 -12v12h1v-12zm1 -12v12h1v-12zm1 -12v12h1v-12zm1 -13v13h1v-13zm1 -12v12h1v-12zm1 -12v12h1v-12zm1 -12v12h1v-12zm1 -12v12h1v-12zm1 -7v7h1v-7z"/>
<path fill="#f3af3d" d="M1085 455h1v1h-1zm1 1h2v1h-2zm2 1h2v1h-2zm2 1h2v1h-2zm2 1h1v1h-1zm1 1h2v1h-2zm2 1h2v1h-2zm2 1h2v1h-2zm2 1h1v1h-1zm1 1h2v1h-2zm2 1h2v1h-2zm2 1h2v1h-2zm2 1h2v1h-2zm2 1h1v1h-1zm1 1h2v1h-2zm2 1h2v1h-2zm2 1h2v1h-2zm2 1h1v1h-1zm1 1h2v1h-2zm2 1h2v1h-2zm2 1h2v1h-2z"/>
<path fill="url(#g68)" d="M1048 899v6h1v-6zm1 -12v12h1v-12zm1 -12v12h1v-12zm1 -12v12h1v-12zm1 -12v12h1v-12zm1 -12v12h1v-12zm1 -13v13h1v-13zm1 -12v12h1v-12zm1 -12v12h1v-12zm1 -12v12h1v-12zm1 -12v12h1v-12zm1 -12v12h1v-12zm1 -13v13h1v-13zm1 -12v12h1v-12zm1 -12v12h1v-12zm1 -12v12h1v-12zm1 -12v12h1v-12zm1 -12v12h1v-12zm1 -12v12h1v-12zm1 -13v13h1v-13zm1 -12v12h1v-12zm1 -12v12h1v-12zm1 -12v12h1v-12zm1 -12v12h1v-12zm1 -12v12h1v-12zm1 -13v13h1v-13zm1 -12v12h1v-12zm1 -12v12h1v-12zm1 -12v12h1v-12zm1 -12v12h1v-12zm1 -12v12h1v-12zm1 -13v13h1v-13zm1 -12v12h1v-12zm1 -12v12h1v-12zm1 -12v12h1v-12zm1 -12v12h1v-12zm1 -12v12h1v-12zm1 -7v7h1v-7z"/>
<path fill="#f3af3d" d="M1122 476h1v1h-1zm1 1h2v1h-2zm2 1h2v1h-2zm2 1h1v1h-1zm1 1h2v1h-2zm2 1h2v1h-2zm2 1h1v1h-1zm1 1h2v1h-2zm2 1h2v1h-2zm2 1h1v1h-1zm1 1h2v1h-2zm2 1h2v1h-2zm2 1h2v1h-2zm2 1h1v1h-1zm1 1h2v1h-2zm2 1h2v1h-2zm2 1h1v1h-1zm1 1h2v1h-2zm2 1h2v1h-2zm2 1h1v1h-1zm1 1h2v1h-2zm2 1h2v1h-2z"/>
<path fill="url(#g69)" d="M1085 921v6h1v-6zm1 -12v12h1v-12zm1 -12v12h1v-12zm1 -12v12h1v-12zm1 -12v12h1v-12zm1 -13v13h1v-13zm1 -12v12h1v-12zm1 -12v12h1v-12zm1 -12v12h1v-12zm1 -12v12h1v-12zm1 -12v12h1v-12zm1 -13v13h1v-13zm1 -12v12h1v-12zm1 -12v12h1v-12zm1 -12v12h1v-12zm1 -12v12h1v-12zm1 -13v13h1v-13zm1 -12v12h1v-12zm1 -12v12h1v-12zm1 -12v12h1v-12zm1 -12v12h1v-12zm1 -13v13h1v-13zm1 -12v12h1v-12zm1 -12v12h1v-12zm1 -12v12h1v-12zm1 -12v12h1v-12zm1 -13v13h1v-13zm1 -12v12h1v-12zm1 -12v12h1v-12zm1 -12v12h1v-12zm1 -12v12h1v-12zm1 -12v12h1v-12zm1 -13v13h1v-13zm1 -12v12h1v-12zm1 -12v12h1v-12zm1 -12v12h1v-12zm1 -12v12h1v-12zm1 -7v7h1v-7z"/>
<path fill="#f3af3d" d="M1159 498h1v1h-1zm1 1h2v1h-2zm2 1h2v1h-2zm2 1h2v1h-2zm2 1h1v1h-1zm1 1h2v1h-2zm2 1h2v1h-2zm2 1h2v1h-2zm2 1h1v1h-1zm1 1h2v1h-2zm2 1h2v1h-2zm2 1h2v1h-2zm2 1h2v1h-2zm2 1h1v1h-1zm1 1h2v1h-2zm2 1h2v1h-2zm2 1h2v1h-2zm2 1h1v1h-1zm1 1h2v1h-2zm2 1h2v1h-2zm2 1h2v1h-2z"/>
<path fill="url(#g70)" d="M1122 942v6h1v-6zm1 -12v12h1v-12zm1 -12v12h1v-12zm1 -12v12h1v-12zm1 -12v12h1v-12zm1 -12v12h1v-12zm1 -13v13h1v-13zm1 -12v12h1v-12zm1 -12v12h1v-12zm1 -12v12h1v-12zm1 -12v12h1v-12zm1 -12v12h1v-12zm1 -13v13h1v-13zm1 -12v12h1v-12zm1 -12v12h1v-12zm1 -12v12h1v-12zm1 -12v12h1v-12zm1 -12v12h1v-12zm1 -12v12h1v-12zm1 -13v13h1v-13zm1 -12v12h1v-12zm1 -12v12h1v-12zm1 -12v12h1v-12zm1 -12v12h1v-12zm1 -12v12h1v-12zm1 -13v13h1v-13zm1 -12v12h1v-12zm1 -12v12h1v-12zm1 -12v12h1v-12zm1 -12v12h1v-12zm1 -12v12h1v-12zm1 -13v13h1v-13zm1 -12v12h1v-12zm1 -12v12h1v-12zm1 -12v12h1v-12zm1 -12v12h1v-12zm1 -12v12h1v-12zm1 -7v7h1v-7z"/>
<path fill="#f3af3d" d="M1196 519h1v1h-1zm1 1h2v1h-2zm2 1h2v1h-2zm2 1h1v1h-1zm1 1h2v1h-2zm2 1h2v1h-2zm2 1h1v1h-1zm1 1h2v1h-2zm2 1h2v1h-2zm2 1h1v1h-1zm1 1h2v1h-2zm2 1h2v1h-2zm2 1h2v1h-2zm2 1h1v1h-1zm1 1h2v1h-2zm2 1h2v1h-2zm2 1h1v1h-1zm1 1h2v1h-2zm2 1h2v1h-2zm2 1h1v1h-1zm1 1h2v1h-2zm2 1h2v1h-2z"/>
<path fill="url(#g71)" d="M1159 964v6h1v-6zm1 -12v12h1v-12zm1 -12v12h1v-12zm1 -12v12h1v-12zm1 -12v12h1v-12zm1 -13v13h1v-13zm1 -12v12h1v-12zm1 -12v12h1v-12zm1 -12v12h1v-12zm1 -12v12h1v-12zm1 -12v12h1v-12zm1 -13v13h1v-13zm1 -12v12h1v-12zm1 -12v12h1v-12zm1 -12v12h1v-12zm1 -12v12h1v-12zm1 -13v13h1v-13zm1 -12v12h1v-12zm1 -12v12h1v-12zm1 -12v12h1v-12zm1 -12v12h1v-12zm1 -13v13h1v-13zm1 -12v12h1v-12zm1 -12v12h1v-12zm1 -12v12h1v-12zm1 -12v12h1v-12zm1 -13v13h1v-13zm1 -12v12h1v-12zm1 -12v12h1v-12zm1 -12v12h1v-12zm1 -12v12h1v-12zm1 -12v12h1v-12zm1 -13v13h1v-13zm1 -12v12h1v-12zm1 -12v12h1v-12zm1 -12v12h1v-12zm1 -12v12h1v-12zm1 -7v7h1v-7z"/>
<path fill="url(#g72)" d="M1233 541v6h1v-6zm1 6v12h1v-12zm1 12v12h1v-12zm1 12v12h1v-12zm1 12v12h1v-12zm1 12v12h1v-12zm1 12v11h1v-11zm1 11v12h1v-12zm1 12v12h1v-12zm1 12v12h1v-12zm1 12v12h1v-12zm1 12v12h1v-12zm1 12v12h1v-12zm1 12v11h1v-11zm1 11v12h1v-12zm1 12v12h1v-12zm1 12v12h1v-12zm1 12v12h1v-12zm1 12v12h1v-12zm1 12v11h1v-11zm1 11v12h1v-12zm1 12v12h1v-12zm1 12v12h1v-12zm1 12v12h1v-12zm1 12v12h1v-12zm1 12v11h1v-11zm1 11v12h1v-12zm1 12v12h1v-12zm1 12v12h1v-12zm1 12v12h1v-12zm1 12v12h1v-12zm1 12v12h1v-12zm1 12v11h1v-11zm1 11v12h1v-12zm1 12v12h1v-12zm1 12v12h1v-12zm1 12v12h1v-12zm1 12v12h1v-12zm1 12v5h1v-5z"/>
<path fill="url(#g73)" d="M1196 985v6h1v-6zm1 -12v12h1v-12zm1 -12v12h1v-12zm1 -12v12h1v-12zm1 -12v12h1v-12zm1 -12v12h1v-12zm1 -13v13h1v-13zm1 -12v12h1v-12zm1 -12v12h1v-12zm1 -12v12h1v-12zm1 -12v12h1v-12zm1 -12v12h1v-12zm1 -13v13h1v-13zm1 -12v12h1v-12zm1 -12v12h1v-12zm1 -12v12h1v-12zm1 -12v12h1v-12zm1 -12v12h1v-12zm1 -12v12h1v-12zm1 -13v13h1v-13zm1 -12v12h1v-12zm1 -12v12h1v-12zm1 -12v12h1v-12zm1 -12v12h1v-12zm1 -12v12h1v-12zm1 -13v13h1v-13zm1 -12v12h1v-12zm1 -12v12h1v-12zm1 -12v12h1v-12zm1 -12v12h1v-12zm1 -12v12h1v-12zm1 -13v13h1v-13zm1 -12v12h1v-12zm1 -12v12h1v-12zm1 -12v12h1v-12zm1 -12v12h1v-12zm1 -12v12h1v-12zm1 -7v7h1v-7z"/>
<path fill="#9a1f6a" d="M1271 991h1v1h-1zm1 1h2v1h-2zm2 1h2v1h-2zm2 1h1v1h-1zm1 1h2v1h-2zm2 1h2v1h-2zm2 1h1v1h-1zm1 1h2v1h-2zm2 1h2v1h-2zm2 1h1v1h-1zm1 1h2v1h-2zm2 1h2v1h-2zm2 1h2v1h-2zm2 1h1v1h-1zm1 1h2v1h-2zm2 1h2v1h-2zm2 1h1v1h-1zm1 1h2v1h-2zm2 1h2v1h-2zm2 1h1v1h-1zm1 1h2v1h-2zm2 1h2v1h-2zM1271 991h1v1h-1zm-2 1h2v1h-2zm-2 1h2v1h-2zm-2 1h2v1h-2zm-1 1h1v1h-1zm-2 1h2v1h-2zm-2 1h2v1h-2zm-1 1h1v1h-1zm-2 1h2v1h-2zm-2 1h2v1h-2zm-2 1h2v1h-2zm-1 1h1v1h-1zm-2 1h2v1h-2zm-2 1h2v1h-2zm-2 1h2v1h-2zm-1 1h1v1h-1zm-2 1h2v1h-2zm-2 1h2v1h-2zm-1 1h1v1h-1zm-2 1h2v1h-2zm-2 1h2v1h-2zm-2 1h2v1h-2zM1308 1013h1v1h-1zm-2 1h2v1h-2zm-2 1h2v1h-2zm-2 1h2v1h-2zm-1 1h1v1h-1zm-2 1h2v1h-2zm-2 1h2v1h-2zm-2 1h2v1h-2zm-1 1h1v1h-1zm-2 1h2v1h-2zm-2 1h2v1h-2zm-2 1h2v1h-2zm-2 1h2v1h-2zm-1 1h1v1h-1zm-2 1h2v1h-2zm-2 1h2v1h-2zm-2 1h2v1h-2zm-1 1h1v1h-1zm-2 1h2v1h-2zm-2 1h2v1h-2zm-2 1h2v1h-2zM601 648h1v1h-1zm1 1h2v1h-2zm2 1h2v1h-2zm2 1h2v1h-2zm2 1h2v1h-2zm2 1h1v1h-1zm1 1h2v1h-2zm2 1h2v1h-2zm2 1h2v1h-2zm2 1h2v1h-2zm2 1h2v1h-2zm2 1h1v1h-1zm1 1h2v1h-2zm2 1h2v1h-2zm2 1h2v1h-2zm2 1h2v1h-2zm2 1h1v1h-1zm1 1h2v1h-2zm2 1h2v1h-2zm2 1h2v1h-2zm2 1h2v1h-2zM601 648h1v1h-1zm-2 1h2v1h-2zm-2 1h2v1h-2zm-2 1h2v1h-2zm-1 1h1v1h-1zm-2 1h2v1h-2zm-2 1h2v1h-2zm-2 1h2v1h-2zm-1 1h1v1h-1zm-2 1h2v1h-2zm-2 1h2v1h-2zm-2 1h2v1h-2zm-2 1h2v1h-2zm-1 1h1v1h-1zm-2 1h2v1h-2zm-2 1h2v1h-2zm-2 1h2v1h-2zm-1 1h1v1h-1zm-2 1h2v1h-2zm-2 1h2v1h-2zm-2 1h2v1h-2zM639 669h1v1h-1zm1 1h2v1h-2zm2 1h2v1h-2zm2 1h1v1h-1zm1 1h2v1h-2zm2 1h2v1h-2zm2 1h1v1h-1zm1 1h2v1h-2zm2 1h2v1h-2zm2 1h1v1h-1zm1 1h2v1h-2zm2 1h2v1h-2zm2 1h2v1h-2zm2 1h1v1h-1zm1 1h2v1h-2zm2 1h2v1h-2zm2 1h1v1h-1zm1 1h2v1h-2zm2 1h2v1h-2zm2 1h1v1h-1zm1 1h2v1h-2zm2 1h2v1h-2zM639 669h1v1h-1zm-2 1h2v1h-2zm-2 1h2v1h-2zm-2 1h2v1h-2zm-1 1h1v1h-1zm-2 1h2v1h-2zm-2 1h2v1h-2zm-1 1h1v1h-1zm-2 1h2v1h-2zm-2 1h2v1h-2zm-2 1h2v1h-2zm-1 1h1v1h-1zm-2 1h2v1h-2zm-2 1h2v1h-2zm-2 1h2v1h-2zm-1 1h1v1h-1zm-2 1h2v1h-2zm-2 1h2v1h-2zm-1 1h1v1h-1zm-2 1h2v1h-2zm-2 1h2v1h-2zm-2 1h2v1h-2zM676 691h1v1h-1zm1 1h2v1h-2zm2 1h2v1h-2zm2 1h2v1h-2zm2 1h1v1h-1zm1 1h2v1h-2zm2 1h2v1h-2zm2 1h2v1h-2zm2 1h1v1h-1zm1 1h2v1h-2zm2 1h2v1h-2zm2 1h2v1h-2zm2 1h2v1h-2zm2 1h1v1h-1zm1 1h2v1h-2zm2 1h2v1h-2zm2 1h2v1h-2zm2 1h1v1h-1zm1 1h2v1h-2zm2 1h2v1h-2zm2 1h2v1h-2zM676 691h1v1h-1zm-2 1h2v1h-2zm-2 1h2v1h-2zm-2 1h2v1h-2zm-1 1h1v1h-1zm-2 1h2v1h-2zm-2 1h2v1h-2zm-2 1h2v1h-2zm-1 1h1v1h-1zm-2 1h2v1h-2zm-2 1h2v1h-2zm-2 1h2v1h-2zm-2 1h2v1h-2zm-1 1h1v1h-1zm-2 1h2v1h-2zm-2 1h2v1h-2zm-2 1h2v1h-2zm-1 1h1v1h-1zm-2 1h2v1h-2zm-2 1h2v1h-2zm-2 1h2v1h-2zM713 712h1v1h-1zm1 1h2v1h-2zm2 1h2v1h-2zm2 1h1v1h-1zm1 1h2v1h-2zm2 1h2v1h-2zm2 1h1v1h-1zm1 1h2v1h-2zm2 1h2v1h-2zm2 1h1v1h-1zm1 1h2v1h-2zm2 1h2v1h-2zm2 1h2v1h-2zm2 1h1v1h-1zm1 1h2v1h-2zm2 1h2v1h-2zm2 1h1v1h-1zm1 1h2v1h-2zm2 1h2v1h-2zm2 1h1v1h-1zm1 1h2v1h-2zm2 1h2v1h-2zM713 712h1v1h-1zm-2 1h2v1h-2zm-2 1h2v1h-2zm-1 1h1v1h-1zm-2 1h2v1h-2zm-2 1h2v1h-2zm-1 1h1v1h-1zm-2 1h2v1h-2zm-2 1h2v1h-2zm-1 1h1v1h-1zm-2 1h2v1h-2zm-2 1h2v1h-2zm-2 1h2v1h-2zm-1 1h1v1h-1zm-2 1h2v1h-2zm-2 1h2v1h-2zm-1 1h1v1h-1zm-2 1h2v1h-2zm-2 1h2v1h-2zm-1 1h1v1h-1zm-2 1h2v1h-2zm-2 1h2v1h-2zM750 734h1v1h-1zm1 1h2v1h-2zm2 1h2v1h-2zm2 1h2v1h-2zm2 1h2v1h-2zm2 1h1v1h-1zm1 1h2v1h-2zm2 1h2v1h-2zm2 1h2v1h-2zm2 1h2v1h-2zm2 1h2v1h-2zm2 1h1v1h-1zm1 1h2v1h-2zm2 1h2v1h-2zm2 1h2v1h-2zm2 1h2v1h-2zm2 1h1v1h-1zm1 1h2v1h-2zm2 1h2v1h-2zm2 1h2v1h-2zm2 1h2v1h-2zM750 734h1v1h-1zm-2 1h2v1h-2zm-2 1h2v1h-2zm-2 1h2v1h-2zm-1 1h1v1h-1zm-2 1h2v1h-2zm-2 1h2v1h-2zm-2 1h2v1h-2zm-1 1h1v1h-1zm-2 1h2v1h-2zm-2 1h2v1h-2zm-2 1h2v1h-2zm-2 1h2v1h-2zm-1 1h1v1h-1zm-2 1h2v1h-2zm-2 1h2v1h-2zm-2 1h2v1h-2zm-1 1h1v1h-1zm-2 1h2v1h-2zm-2 1h2v1h-2zm-2 1h2v1h-2zM788 755h1v1h-1zm1 1h2v1h-2zm2 1h2v1h-2zm2 1h2v1h-2zm2 1h1v1h-1zm1 1h2v1h-2zm2 1h2v1h-2zm2 1h2v1h-2zm2 1h1v1h-1zm1 1h2v1h-2zm2 1h2v1h-2zm2 1h2v1h-2zm2 1h2v1h-2zm2 1h1v1h-1zm1 1h2v1h-2zm2 1h2v1h-2zm2 1h2v1h-2zm2 1h1v1h-1zm1 1h2v1h-2zm2 1h2v1h-2zm2 1h2v1h-2zM788 755h1v1h-1zm-2 1h2v1h-2zm-2 1h2v1h-2zm-2 1h2v1h-2zm-2 1h2v1h-2zm-1 1h1v1h-1zm-2 1h2v1h-2zm-2 1h2v1h-2zm-2 1h2v1h-2zm-2 1h2v1h-2zm-2 1h2v1h-2zm-1 1h1v1h-1zm-2 1h2v1h-2zm-2 1h2v1h-2zm-2 1h2v1h-2zm-2 1h2v1h-2zm-1 1h1v1h-1zm-2 1h2v1h-2zm-2 1h2v1h-2zm-2 1h2v1h-2zm-2 1h2v1h-2zM825 776h1v1h-1zm1 1h2v1h-2zm2 1h2v1h-2zm2 1h1v1h-1zm1 1h2v1h-2zm2 1h2v1h-2zm2 1h1v1h-1zm1 1h2v1h-2zm2 1h2v1h-2zm2 1h1v1h-1zm1 1h2v1h-2zm2 1h2v1h-2zm2 1h2v1h-2zm2 1h1v1h-1zm1 1h2v1h-2zm2 1h2v1h-2zm2 1h1v1h-1zm1 1h2v1h-2zm2 1h2v1h-2zm2 1h1v1h-1zm1 1h2v1h-2zm2 1h2v1h-2zM825 776h1v1h-1zm-2 1h2v1h-2zm-2 1h2v1h-2zm-1 1h1v1h-1zm-2 1h2v1h-2zm-2 1h2v1h-2zm-1 1h1v1h-1zm-2 1h2v1h-2zm-2 1h2v1h-2zm-1 1h1v1h-1zm-2 1h2v1h-2zm-2 1h2v1h-2zm-2 1h2v1h-2zm-1 1h1v1h-1zm-2 1h2v1h-2zm-2 1h2v1h-2zm-1 1h1v1h-1zm-2 1h2v1h-2zm-2 1h2v1h-2zm-1 1h1v1h-1zm-2 1h2v1h-2zm-2 1h2v1h-2zM862 798h1v1h-1zm1 1h2v1h-2zm2 1h2v1h-2zm2 1h2v1h-2zm2 1h1v1h-1zm1 1h2v1h-2zm2 1h2v1h-2zm2 1h2v1h-2zm2 1h1v1h-1zm1 1h2v1h-2zm2 1h2v1h-2zm2 1h2v1h-2zm2 1h2v1h-2zm2 1h1v1h-1zm1 1h2v1h-2zm2 1h2v1h-2zm2 1h2v1h-2zm2 1h1v1h-1zm1 1h2v1h-2zm2 1h2v1h-2zm2 1h2v1h-2zM862 798h1v1h-1zm-2 1h2v1h-2zm-2 1h2v1h-2zm-2 1h2v1h-2zm-1 1h1v1h-1zm-2 1h2v1h-2zm-2 1h2v1h-2zm-2 1h2v1h-2zm-1 1h1v1h-1zm-2 1h2v1h-2zm-2 1h2v1h-2zm-2 1h2v1h-2zm-2 1h2v1h-2zm-1 1h1v1h-1zm-2 1h2v1h-2zm-2 1h2v1h-2zm-2 1h2v1h-2zm-1 1h1v1h-1zm-2 1h2v1h-2zm-2 1h2v1h-2zm-2 1h2v1h-2zM899 819h1v1h-1zm1 1h2v1h-2zm2 1h2v1h-2zm2 1h2v1h-2zm2 1h1v1h-1zm1 1h2v1h-2zm2 1h2v1h-2zm2 1h1v1h-1zm1 1h2v1h-2zm2 1h2v1h-2zm2 1h2v1h-2zm2 1h1v1h-1zm1 1h2v1h-2zm2 1h2v1h-2zm2 1h2v1h-2zm2 1h1v1h-1zm1 1h2v1h-2zm2 1h2v1h-2zm2 1h1v1h-1zm1 1h2v1h-2zm2 1h2v1h-2zm2 1h2v1h-2zM899 819h1v1h-1zm-2 1h2v1h-2zm-2 1h2v1h-2zm-1 1h1v1h-1zm-2 1h2v1h-2zm-2 1h2v1h-2zm-1 1h1v1h-1zm-2 1h2v1h-2zm-2 1h2v1h-2zm-1 1h1v1h-1zm-2 1h2v1h-2zm-2 1h2v1h-2zm-2 1h2v1h-2zm-1 1h1v1h-1zm-2 1h2v1h-2zm-2 1h2v1h-2zm-1 1h1v1h-1zm-2 1h2v1h-2zm-2 1h2v1h-2zm-1 1h1v1h-1zm-2 1h2v1h-2zm-2 1h2v1h-2zM937 841h1v1h-1zm1 1h2v1h-2zm2 1h2v1h-2zm2 1h2v1h-2zm2 1h1v1h-1zm1 1h2v1h-2zm2 1h2v1h-2zm2 1h2v1h-2zm2 1h1v1h-1zm1 1h2v1h-2zm2 1h2v1h-2zm2 1h2v1h-2zm2 1h2v1h-2zm2 1h1v1h-1zm1 1h2v1h-2zm2 1h2v1h-2zm2 1h2v1h-2zm2 1h1v1h-1zm1 1h2v1h-2zm2 1h2v1h-2zm2 1h2v1h-2zM937 841h1v1h-1zm-2 1h2v1h-2zm-2 1h2v1h-2zm-2 1h2v1h-2zm-2 1h2v1h-2zm-1 1h1v1h-1zm-2 1h2v1h-2zm-2 1h2v1h-2zm-2 1h2v1h-2zm-2 1h2v1h-2zm-2 1h2v1h-2zm-1 1h1v1h-1zm-2 1h2v1h-2zm-2 1h2v1h-2zm-2 1h2v1h-2zm-2 1h2v1h-2zm-1 1h1v1h-1zm-2 1h2v1h-2zm-2 1h2v1h-2zm-2 1h2v1h-2zm-2 1h2v1h-2zM974 862h1v1h-1zm1 1h2v1h-2zm2 1h2v1h-2zm2 1h1v1h-1zm1 1h2v1h-2zm2 1h2v1h-2zm2 1h1v1h-1zm1 1h2v1h-2zm2 1h2v1h-2zm2 1h1v1h-1zm1 1h2v1h-2zm2 1h2v1h-2zm2 1h2v1h-2zm2 1h1v1h-1zm1 1h2v1h-2zm2 1h2v1h-2zm2 1h1v1h-1zm1 1h2v1h-2zm2 1h2v1h-2zm2 1h1v1h-1zm1 1h2v1h-2zm2 1h2v1h-2zM974 862h1v1h-1zm-2 1h2v1h-2zm-2 1h2v1h-2zm-1 1h1v1h-1zm-2 1h2v1h-2zm-2 1h2v1h-2zm-1 1h1v1h-1zm-2 1h2v1h-2zm-2 1h2v1h-2zm-1 1h1v1h-1zm-2 1h2v1h-2zm-2 1h2v1h-2zm-2 1h2v1h-2zm-1 1h1v1h-1zm-2 1h2v1h-2zm-2 1h2v1h-2zm-1 1h1v1h-1zm-2 1h2v1h-2zm-2 1h2v1h-2zm-1 1h1v1h-1zm-2 1h2v1h-2zm-2 1h2v1h-2zM1011 884h1v1h-1zm1 1h2v1h-2zm2 1h2v1h-2zm2 1h2v1h-2zm2 1h1v1h-1zm1 1h2v1h-2zm2 1h2v1h-2zm2 1h2v1h-2zm2 1h1v1h-1zm1 1h2v1h-2zm2 1h2v1h-2zm2 1h2v1h-2zm2 1h2v1h-2zm2 1h1v1h-1zm1 1h2v1h-2zm2 1h2v1h-2zm2 1h2v1h-2zm2 1h1v1h-1zm1 1h2v1h-2zm2 1h2v1h-2zm2 1h2v1h-2zM1011 884h1v1h-1zm-2 1h2v1h-2zm-2 1h2v1h-2zm-2 1h2v1h-2zm-1 1h1v1h-1zm-2 1h2v1h-2zm-2 1h2v1h-2zm-2 1h2v1h-2zm-1 1h1v1h-1zm-2 1h2v1h-2zm-2 1h2v1h-2zm-2 1h2v1h-2zm-2 1h2v1h-2zm-1 1h1v1h-1zm-2 1h2v1h-2zm-2 1h2v1h-2zm-2 1h2v1h-2zm-1 1h1v1h-1zm-2 1h2v1h-2zm-2 1h2v1h-2zm-2 1h2v1h-2zM1048 905h1v1h-1zm1 1h2v1h-2zm2 1h2v1h-2zm2 1h1v1h-1zm1 1h2v1h-2zm2 1h2v1h-2zm2 1h1v1h-1zm1 1h2v1h-2zm2 1h2v1h-2zm2 1h1v1h-1zm1 1h2v1h-2zm2 1h2v1h-2zm2 1h2v1h-2zm2 1h1v1h-1zm1 1h2v1h-2zm2 1h2v1h-2zm2 1h1v1h-1zm1 1h2v1h-2zm2 1h2v1h-2zm2 1h1v1h-1zm1 1h2v1h-2zm2 1h2v1h-2zM1048 905h1v1h-1zm-2 1h2v1h-2zm-2 1h2v1h-2zm-1 1h1v1h-1zm-2 1h2v1h-2zm-2 1h2v1h-2zm-1 1h1v1h-1zm-2 1h2v1h-2zm-2 1h2v1h-2zm-1 1h1v1h-1zm-2 1h2v1h-2zm-2 1h2v1h-2zm-2 1h2v1h-2zm-1 1h1v1h-1zm-2 1h2v1h-2zm-2 1h2v1h-2zm-1 1h1v1h-1zm-2 1h2v1h-2zm-2 1h2v1h-2zm-1 1h1v1h-1zm-2 1h2v1h-2zm-2 1h2v1h-2zM1085 927h1v1h-1zm1 1h2v1h-2zm2 1h2v1h-2zm2 1h2v1h-2zm2 1h1v1h-1zm1 1h2v1h-2zm2 1h2v1h-2zm2 1h2v1h-2zm2 1h1v1h-1zm1 1h2v1h-2zm2 1h2v1h-2zm2 1h2v1h-2zm2 1h2v1h-2zm2 1h1v1h-1zm1 1h2v1h-2zm2 1h2v1h-2zm2 1h2v1h-2zm2 1h1v1h-1zm1 1h2v1h-2zm2 1h2v1h-2zm2 1h2v1h-2zM1085 927h1v1h-1zm-2 1h2v1h-2zm-2 1h2v1h-2zm-2 1h2v1h-2zm-1 1h1v1h-1zm-2 1h2v1h-2zm-2 1h2v1h-2zm-2 1h2v1h-2zm-1 1h1v1h-1zm-2 1h2v1h-2zm-2 1h2v1h-2zm-2 1h2v1h-2zm-2 1h2v1h-2zm-1 1h1v1h-1zm-2 1h2v1h-2zm-2 1h2v1h-2zm-2 1h2v1h-2zm-1 1h1v1h-1zm-2 1h2v1h-2zm-2 1h2v1h-2zm-2 1h2v1h-2zM1122 948h1v1h-1zm1 1h2v1h-2zm2 1h2v1h-2zm2 1h1v1h-1zm1 1h2v1h-2zm2 1h2v1h-2zm2 1h1v1h-1zm1 1h2v1h-2zm2 1h2v1h-2zm2 1h1v1h-1zm1 1h2v1h-2zm2 1h2v1h-2zm2 1h2v1h-2zm2 1h1v1h-1zm1 1h2v1h-2zm2 1h2v1h-2zm2 1h1v1h-1zm1 1h2v1h-2zm2 1h2v1h-2zm2 1h1v1h-1zm1 1h2v1h-2zm2 1h2v1h-2zM1122 948h1v1h-1zm-2 1h2v1h-2zm-2 1h2v1h-2zm-1 1h1v1h-1zm-2 1h2v1h-2zm-2 1h2v1h-2zm-1 1h1v1h-1zm-2 1h2v1h-2zm-2 1h2v1h-2zm-1 1h1v1h-1zm-2 1h2v1h-2zm-2 1h2v1h-2zm-2 1h2v1h-2zm-1 1h1v1h-1zm-2 1h2v1h-2zm-2 1h2v1h-2zm-1 1h1v1h-1zm-2 1h2v1h-2zm-2 1h2v1h-2zm-1 1h1v1h-1zm-2 1h2v1h-2zm-2 1h2v1h-2zM1159 970h1v1h-1zm1 1h2v1h-2zm2 1h2v1h-2zm2 1h2v1h-2zm2 1h1v1h-1zm1 1h2v1h-2zm2 1h2v1h-2zm2 1h2v1h-2zm2 1h1v1h-1zm1 1h2v1h-2zm2 1h2v1h-2zm2 1h2v1h-2zm2 1h2v1h-2zm2 1h1v1h-1zm1 1h2v1h-2zm2 1h2v1h-2zm2 1h2v1h-2zm2 1h1v1h-1zm1 1h2v1h-2zm2 1h2v1h-2zm2 1h2v1h-2zM1159 970h1v1h-1zm-2 1h2v1h-2zm-2 1h2v1h-2zm-2 1h2v1h-2zm-1 1h1v1h-1zm-2 1h2v1h-2zm-2 1h2v1h-2zm-2 1h2v1h-2zm-1 1h1v1h-1zm-2 1h2v1h-2zm-2 1h2v1h-2zm-2 1h2v1h-2zm-2 1h2v1h-2zm-1 1h1v1h-1zm-2 1h2v1h-2zm-2 1h2v1h-2zm-2 1h2v1h-2zm-1 1h1v1h-1zm-2 1h2v1h-2zm-2 1h2v1h-2zm-2 1h2v1h-2zM1196 991h1v1h-1zm1 1h2v1h-2zm2 1h2v1h-2zm2 1h1v1h-1zm1 1h2v1h-2zm2 1h2v1h-2zm2 1h1v1h-1zm1 1h2v1h-2zm2 1h2v1h-2zm2 1h1v1h-1zm1 1h2v1h-2zm2 1h2v1h-2zm2 1h2v1h-2zm2 1h1v1h-1zm1 1h2v1h-2zm2 1h2v1h-2zm2 1h1v1h-1zm1 1h2v1h-2zm2 1h2v1h-2zm2 1h1v1h-1zm1 1h2v1h-2zm2 1h2v1h-2zM1196 991h1v1h-1zm-2 1h2v1h-2zm-2 1h2v1h-2zm-1 1h1v1h-1zm-2 1h2v1h-2zm-2 1h2v1h-2zm-1 1h1v1h-1zm-2 1h2v1h-2zm-2 1h2v1h-2zm-1 1h1v1h-1zm-2 1h2v1h-2zm-2 1h2v1h-2zm-2 1h2v1h-2zm-1 1h1v1h-1zm-2 1h2v1h-2zm-2 1h2v1h-2zm-1 1h1v1h-1zm-2 1h2v1h-2zm-2 1h2v1h-2zm-1 1h1v1h-1zm-2 1h2v1h-2zm-2 1h2v1h-2zM1233 1013h1v1h-1zm1 1h2v1h-2zm2 1h2v1h-2zm2 1h2v1h-2zm2 1h2v1h-2zm2 1h1v1h-1zm1 1h2v1h-2zm2 1h2v1h-2zm2 1h2v1h-2zm2 1h2v1h-2zm2 1h2v1h-2zm2 1h1v1h-1zm1 1h2v1h-2zm2 1h2v1h-2zm2 1h2v1h-2zm2 1h2v1h-2zm2 1h1v1h-1zm1 1h2v1h-2zm2 1h2v1h-2zm2 1h2v1h-2zm2 1h2v1h-2zM1233 1013h1v1h-1zm-2 1h2v1h-2zm-2 1h2v1h-2zm-2 1h2v1h-2zm-1 1h1v1h-1zm-2 1h2v1h-2zm-2 1h2v1h-2zm-2 1h2v1h-2zm-1 1h1v1h-1zm-2 1h2v1h-2zm-2 1h2v1h-2zm-2 1h2v1h-2zm-2 1h2v1h-2zm-1 1h1v1h-1zm-2 1h2v1h-2zm-2 1h2v1h-2zm-2 1h2v1h-2zm-1 1h1v1h-1zm-2 1h2v1h-2zm-2 1h2v1h-2zm-2 1h2v1h-2zM1271 1034h1v1h-1zm-2 1h2v1h-2zm-2 1h2v1h-2zm-2 1h2v1h-2zm-1 1h1v1h-1zm-2 1h2v1h-2zm-2 1h2v1h-2zm-1 1h1v1h-1zm-2 1h2v1h-2zm-2 1h2v1h-2zm-2 1h2v1h-2zm-1 1h1v1h-1zm-2 1h2v1h-2zm-2 1h2v1h-2zm-2 1h2v1h-2zm-1 1h1v1h-1zm-2 1h2v1h-2zm-2 1h2v1h-2zm-1 1h1v1h-1zm-2 1h2v1h-2zm-2 1h2v1h-2zm-2 1h2v1h-2zM564 669h1v1h-1zm1 1h2v1h-2zm2 1h2v1h-2zm2 1h1v1h-1zm1 1h2v1h-2zm2 1h2v1h-2zm2 1h1v1h-1zm1 1h2v1h-2zm2 1h2v1h-2zm2 1h1v1h-1zm1 1h2v1h-2zm2 1h2v1h-2zm2 1h2v1h-2zm2 1h1v1h-1zm1 1h2v1h-2zm2 1h2v1h-2zm2 1h1v1h-1zm1 1h2v1h-2zm2 1h2v1h-2zm2 1h1v1h-1zm1 1h2v1h-2zm2 1h2v1h-2zM601 691h1v1h-1zm1 1h2v1h-2zm2 1h2v1h-2zm2 1h2v1h-2zm2 1h2v1h-2zm2 1h1v1h-1zm1 1h2v1h-2zm2 1h2v1h-2zm2 1h2v1h-2zm2 1h2v1h-2zm2 1h2v1h-2zm2 1h1v1h-1zm1 1h2v1h-2zm2 1h2v1h-2zm2 1h2v1h-2zm2 1h2v1h-2zm2 1h1v1h-1zm1 1h2v1h-2zm2 1h2v1h-2zm2 1h2v1h-2zm2 1h2v1h-2zM639 712h1v1h-1zm1 1h2v1h-2zm2 1h2v1h-2zm2 1h1v1h-1zm1 1h2v1h-2zm2 1h2v1h-2zm2 1h1v1h-1zm1 1h2v1h-2zm2 1h2v1h-2zm2 1h1v1h-1zm1 1h2v1h-2zm2 1h2v1h-2zm2 1h2v1h-2zm2 1h1v1h-1zm1 1h2v1h-2zm2 1h2v1h-2zm2 1h1v1h-1zm1 1h2v1h-2zm2 1h2v1h-2zm2 1h1v1h-1zm1 1h2v1h-2zm2 1h2v1h-2zM676 734h1v1h-1zm1 1h2v1h-2zm2 1h2v1h-2zm2 1h2v1h-2zm2 1h1v1h-1zm1 1h2v1h-2zm2 1h2v1h-2zm2 1h2v1h-2zm2 1h1v1h-1zm1 1h2v1h-2zm2 1h2v1h-2zm2 1h2v1h-2zm2 1h2v1h-2zm2 1h1v1h-1zm1 1h2v1h-2zm2 1h2v1h-2zm2 1h2v1h-2zm2 1h1v1h-1zm1 1h2v1h-2zm2 1h2v1h-2zm2 1h2v1h-2zM713 755h1v1h-1zm1 1h2v1h-2zm2 1h2v1h-2zm2 1h2v1h-2zm2 1h1v1h-1zm1 1h2v1h-2zm2 1h2v1h-2zm2 1h2v1h-2zm2 1h1v1h-1zm1 1h2v1h-2zm2 1h2v1h-2zm2 1h2v1h-2zm2 1h2v1h-2zm2 1h1v1h-1zm1 1h2v1h-2zm2 1h2v1h-2zm2 1h2v1h-2zm2 1h1v1h-1zm1 1h2v1h-2zm2 1h2v1h-2zm2 1h2v1h-2zM750 776h1v1h-1zm1 1h2v1h-2zm2 1h2v1h-2zm2 1h2v1h-2zm2 1h1v1h-1zm1 1h2v1h-2zm2 1h2v1h-2zm2 1h1v1h-1zm1 1h2v1h-2zm2 1h2v1h-2zm2 1h2v1h-2zm2 1h1v1h-1zm1 1h2v1h-2zm2 1h2v1h-2zm2 1h2v1h-2zm2 1h1v1h-1zm1 1h2v1h-2zm2 1h2v1h-2zm2 1h1v1h-1zm1 1h2v1h-2zm2 1h2v1h-2zm2 1h2v1h-2zM788 798h1v1h-1zm1 1h2v1h-2zm2 1h2v1h-2zm2 1h2v1h-2zm2 1h1v1h-1zm1 1h2v1h-2zm2 1h2v1h-2zm2 1h2v1h-2zm2 1h1v1h-1zm1 1h2v1h-2zm2 1h2v1h-2zm2 1h2v1h-2zm2 1h2v1h-2zm2 1h1v1h-1zm1 1h2v1h-2zm2 1h2v1h-2zm2 1h2v1h-2zm2 1h1v1h-1zm1 1h2v1h-2zm2 1h2v1h-2zm2 1h2v1h-2zM825 819h1v1h-1zm1 1h2v1h-2zm2 1h2v1h-2zm2 1h1v1h-1zm1 1h2v1h-2zm2 1h2v1h-2zm2 1h1v1h-1zm1 1h2v1h-2zm2 1h2v1h-2zm2 1h1v1h-1zm1 1h2v1h-2zm2 1h2v1h-2zm2 1h2v1h-2zm2 1h1v1h-1zm1 1h2v1h-2zm2 1h2v1h-2zm2 1h1v1h-1zm1 1h2v1h-2zm2 1h2v1h-2zm2 1h1v1h-1zm1 1h2v1h-2zm2 1h2v1h-2zM862 841h1v1h-1zm1 1h2v1h-2zm2 1h2v1h-2zm2 1h2v1h-2zm2 1h1v1h-1zm1 1h2v1h-2zm2 1h2v1h-2zm2 1h2v1h-2zm2 1h1v1h-1zm1 1h2v1h-2zm2 1h2v1h-2zm2 1h2v1h-2zm2 1h2v1h-2zm2 1h1v1h-1zm1 1h2v1h-2zm2 1h2v1h-2zm2 1h2v1h-2zm2 1h1v1h-1zm1 1h2v1h-2zm2 1h2v1h-2zm2 1h2v1h-2zM899 862h1v1h-1zm1 1h2v1h-2zm2 1h2v1h-2zm2 1h2v1h-2zm2 1h1v1h-1zm1 1h2v1h-2zm2 1h2v1h-2zm2 1h1v1h-1zm1 1h2v1h-2zm2 1h2v1h-2zm2 1h2v1h-2zm2 1h1v1h-1zm1 1h2v1h-2zm2 1h2v1h-2zm2 1h2v1h-2zm2 1h1v1h-1zm1 1h2v1h-2zm2 1h2v1h-2zm2 1h1v1h-1zm1 1h2v1h-2zm2 1h2v1h-2zm2 1h2v1h-2zM937 884h1v1h-1zm1 1h2v1h-2zm2 1h2v1h-2zm2 1h2v1h-2zm2 1h1v1h-1zm1 1h2v1h-2zm2 1h2v1h-2zm2 1h2v1h-2zm2 1h1v1h-1zm1 1h2v1h-2zm2 1h2v1h-2zm2 1h2v1h-2zm2 1h2v1h-2zm2 1h1v1h-1zm1 1h2v1h-2zm2 1h2v1h-2zm2 1h2v1h-2zm2 1h1v1h-1zm1 1h2v1h-2zm2 1h2v1h-2zm2 1h2v1h-2zM974 905h1v1h-1zm1 1h2v1h-2zm2 1h2v1h-2zm2 1h1v1h-1zm1 1h2v1h-2zm2 1h2v1h-2zm2 1h1v1h-1zm1 1h2v1h-2zm2 1h2v1h-2zm2 1h1v1h-1zm1 1h2v1h-2zm2 1h2v1h-2zm2 1h2v1h-2zm2 1h1v1h-1zm1 1h2v1h-2zm2 1h2v1h-2zm2 1h1v1h-1zm1 1h2v1h-2zm2 1h2v1h-2zm2 1h1v1h-1zm1 1h2v1h-2zm2 1h2v1h-2zM1011 927h1v1h-1zm1 1h2v1h-2zm2 1h2v1h-2zm2 1h2v1h-2zm2 1h1v1h-1zm1 1h2v1h-2zm2 1h2v1h-2zm2 1h2v1h-2zm2 1h1v1h-1zm1 1h2v1h-2zm2 1h2v1h-2zm2 1h2v1h-2zm2 1h2v1h-2zm2 1h1v1h-1zm1 1h2v1h-2zm2 1h2v1h-2zm2 1h2v1h-2zm2 1h1v1h-1zm1 1h2v1h-2zm2 1h2v1h-2zm2 1h2v1h-2zM1048 948h1v1h-1zm1 1h2v1h-2zm2 1h2v1h-2zm2 1h1v1h-1zm1 1h2v1h-2zm2 1h2v1h-2zm2 1h1v1h-1zm1 1h2v1h-2zm2 1h2v1h-2zm2 1h1v1h-1zm1 1h2v1h-2zm2 1h2v1h-2zm2 1h2v1h-2zm2 1h1v1h-1zm1 1h2v1h-2zm2 1h2v1h-2zm2 1h1v1h-1zm1 1h2v1h-2zm2 1h2v1h-2zm2 1h1v1h-1zm1 1h2v1h-2zm2 1h2v1h-2zM1085 970h1v1h-1zm1 1h2v1h-2zm2 1h2v1h-2zm2 1h2v1h-2zm2 1h1v1h-1zm1 1h2v1h-2zm2 1h2v1h-2zm2 1h2v1h-2zm2 1h1v1h-1zm1 1h2v1h-2zm2 1h2v1h-2zm2 1h2v1h-2zm2 1h2v1h-2zm2 1h1v1h-1zm1 1h2v1h-2zm2 1h2v1h-2zm2 1h2v1h-2zm2 1h1v1h-1zm1 1h2v1h-2zm2 1h2v1h-2zm2 1h2v1h-2zM1122 991h1v1h-1zm1 1h2v1h-2zm2 1h2v1h-2zm2 1h1v1h-1zm1 1h2v1h-2zm2 1h2v1h-2zm2 1h1v1h-1zm1 1h2v1h-2zm2 1h2v1h-2zm2 1h1v1h-1zm1 1h2v1h-2zm2 1h2v1h-2zm2 1h2v1h-2zm2 1h1v1h-1zm1 1h2v1h-2zm2 1h2v1h-2zm2 1h1v1h-1zm1 1h2v1h-2zm2 1h2v1h-2zm2 1h1v1h-1zm1 1h2v1h-2zm2 1h2v1h-2zM1159 1013h1v1h-1zm1 1h2v1h-2zm2 1h2v1h-2zm2 1h2v1h-2zm2 1h1v1h-1zm1 1h2v1h-2zm2 1h2v1h-2zm2 1h2v1h-2zm2 1h1v1h-1zm1 1h2v1h-2zm2 1h2v1h-2zm2 1h2v1h-2zm2 1h2v1h-2zm2 1h1v1h-1zm1 1h2v1h-2zm2 1h2v1h-2zm2 1h2v1h-2zm2 1h1v1h-1zm1 1h2v1h-2zm2 1h2v1h-2zm2 1h2v1h-2zM1196 1034h1v1h-1zm1 1h2v1h-2zm2 1h2v1h-2zm2 1h1v1h-1zm1 1h2v1h-2zm2 1h2v1h-2zm2 1h1v1h-1zm1 1h2v1h-2zm2 1h2v1h-2zm2 1h1v1h-1zm1 1h2v1h-2zm2 1h2v1h-2zm2 1h2v1h-2zm2 1h1v1h-1zm1 1h2v1h-2zm2 1h2v1h-2zm2 1h1v1h-1zm1 1h2v1h-2zm2 1h2v1h-2zm2 1h1v1h-1zm1 1h2v1h-2zm2 1h2v1h-2z"/></g></svg>
<div class="t" style="left:135px;top:145px">     How to Use</div>
<div class="t" style="left:135px;top:211px">Zoom: Scroll or +/-</div>
<div class="t" style="left:135px;top:268px">Move: Arrows</div>
<div class="t" style="left:135px;top:325px">Flatten: &lt;/&gt;</div>
<div class="t" style="left:135px;top:381px">Rotate: Press &amp; Move</div>
<div class="t" style="left:135px;top:438px">Rotate:</div>
<div class="t" style="left:214px;top:484px">X-Axis - 2/8</div>
<div class="t" style="left:214px;top:532px">Y-Axis - 4/6</div>
<div class="t" style="left:214px;top:579px">Z-Axis - 1(3)/7(9)</div>
<div class="t" style="left:135px;top:635px">Projection</div>
<div class="t" style="left:214px;top:683px">ISO: I Key</div>
<div class="t" style="left:214px;top:730px">Parallel: P Key</div>
</div>
</body></html>
